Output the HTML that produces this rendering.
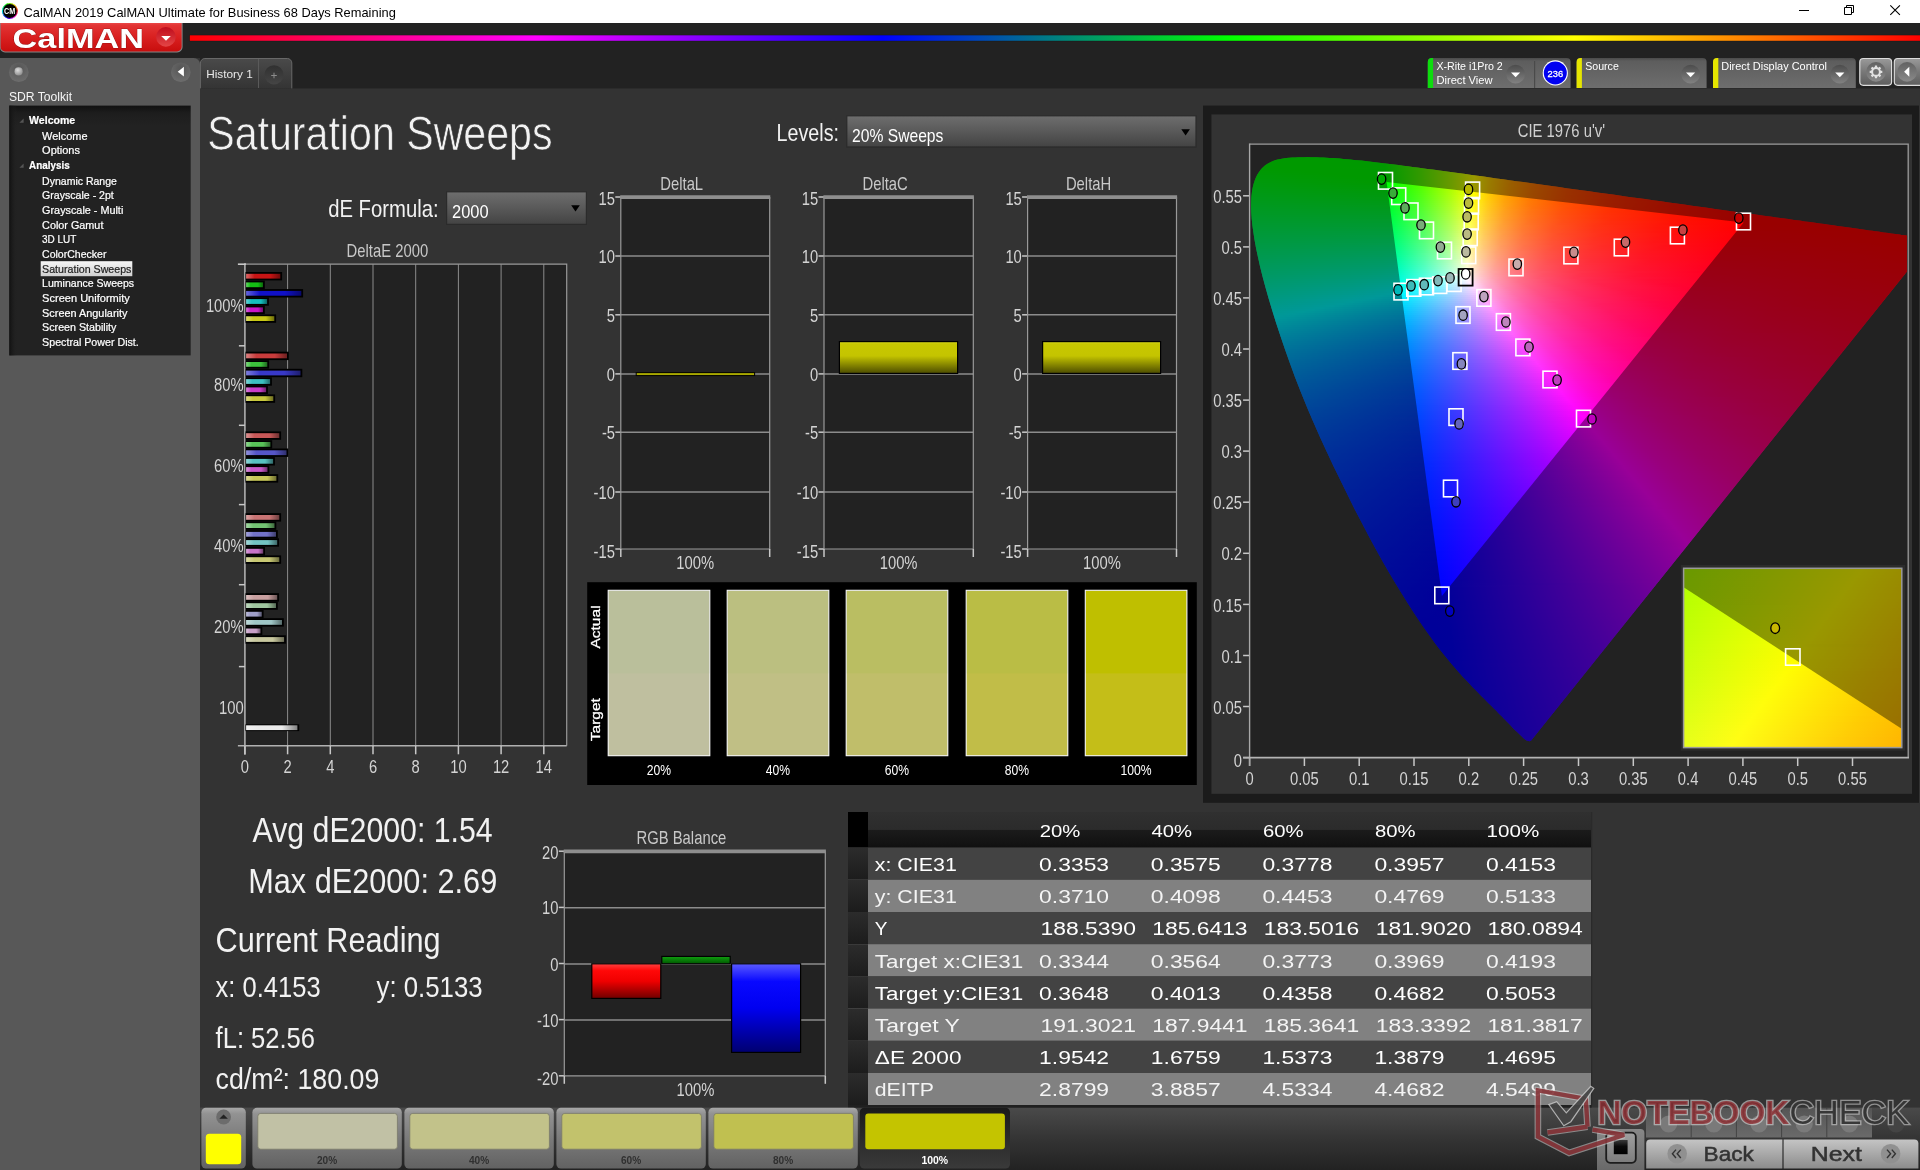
<!DOCTYPE html>
<html><head><meta charset="utf-8"><title>CalMAN</title>
<style>
html,body{margin:0;padding:0;background:#333;}
#root{position:relative;width:1920px;height:1170px;overflow:hidden;font-family:"Liberation Sans", sans-serif;}
#root>svg{position:absolute;left:0;top:0;will-change:transform;}
svg text{font-family:"Liberation Sans", sans-serif;}
#cie{position:absolute;left:1250px;top:145px;width:657.4000000000001px;height:612px;overflow:hidden;clip-path:polygon(281.2px 595.5px,279.8px 596.2px,278.3px 596.1px,276.5px 595.4px,275.0px 594.4px,273.2px 592.9px,271.8px 591.6px,270.2px 590.1px,268.4px 588.3px,266.3px 586.3px,265.1px 585.2px,263.9px 584.0px,262.6px 582.7px,261.3px 581.3px,259.9px 579.8px,258.5px 578.3px,256.9px 576.7px,255.3px 575.1px,253.7px 573.4px,251.9px 571.6px,250.0px 569.7px,248.0px 567.7px,246.0px 565.6px,243.8px 563.4px,241.4px 561.1px,239.0px 558.7px,236.5px 556.2px,233.9px 553.6px,231.2px 550.9px,228.4px 548.0px,225.5px 545.1px,222.4px 541.9px,219.3px 538.6px,216.0px 535.1px,212.5px 531.4px,209.0px 527.4px,205.3px 523.3px,201.6px 518.9px,197.7px 514.3px,193.6px 509.3px,189.4px 503.9px,184.8px 497.9px,180.0px 491.3px,174.8px 483.9px,169.3px 475.9px,163.5px 467.2px,157.6px 457.9px,151.4px 448.1px,145.1px 437.8px,138.7px 426.9px,132.1px 415.4px,125.3px 403.3px,118.4px 390.6px,111.5px 377.3px,104.4px 363.7px,97.4px 349.6px,90.4px 335.3px,83.4px 320.9px,76.5px 306.2px,69.7px 291.5px,63.1px 276.6px,56.8px 261.8px,50.8px 247.1px,45.2px 232.7px,40.0px 218.5px,35.1px 204.7px,30.5px 191.3px,26.2px 178.3px,22.3px 165.7px,18.7px 153.8px,15.5px 142.5px,12.6px 131.8px,10.1px 121.7px,8.0px 112.3px,6.1px 103.5px,4.6px 95.2px,3.4px 87.5px,2.4px 80.4px,1.7px 73.8px,1.3px 67.7px,1.1px 62.0px,1.2px 56.7px,1.4px 51.8px,1.9px 47.3px,2.6px 43.1px,3.5px 39.2px,4.7px 35.6px,6.0px 32.3px,7.5px 29.3px,9.2px 26.7px,11.0px 24.3px,13.0px 22.2px,15.2px 20.3px,17.5px 18.8px,19.9px 17.4px,22.4px 16.3px,24.9px 15.3px,27.6px 14.5px,30.4px 13.9px,33.2px 13.5px,36.1px 13.1px,39.1px 12.8px,42.1px 12.5px,45.2px 12.4px,48.3px 12.3px,51.4px 12.2px,54.5px 12.2px,57.6px 12.1px,60.7px 12.2px,63.8px 12.2px,66.9px 12.3px,70.1px 12.4px,73.3px 12.5px,76.5px 12.7px,79.8px 12.9px,83.1px 13.1px,86.5px 13.3px,89.9px 13.6px,93.3px 13.9px,96.8px 14.2px,100.4px 14.5px,104.0px 14.9px,107.7px 15.2px,111.5px 15.6px,115.3px 16.0px,119.2px 16.5px,123.1px 16.9px,127.2px 17.4px,131.3px 17.9px,135.5px 18.4px,139.8px 19.0px,144.2px 19.5px,148.6px 20.1px,153.2px 20.7px,157.9px 21.3px,162.6px 21.9px,167.4px 22.6px,172.4px 23.2px,177.4px 23.9px,182.6px 24.6px,187.8px 25.3px,193.2px 26.0px,198.7px 26.8px,204.2px 27.5px,209.9px 28.3px,215.7px 29.1px,221.7px 29.9px,227.7px 30.8px,233.8px 31.6px,240.1px 32.5px,246.5px 33.4px,253.0px 34.3px,259.6px 35.2px,266.3px 36.2px,273.2px 37.1px,280.1px 38.1px,287.2px 39.1px,294.3px 40.1px,301.6px 41.1px,309.0px 42.1px,316.4px 43.2px,324.0px 44.2px,331.6px 45.3px,339.4px 46.3px,347.2px 47.4px,355.0px 48.5px,363.0px 49.6px,371.0px 50.7px,379.0px 51.9px,387.1px 53.0px,395.1px 54.1px,403.1px 55.2px,411.0px 56.3px,418.8px 57.4px,426.5px 58.5px,434.2px 59.6px,441.9px 60.7px,449.6px 61.7px,457.3px 62.8px,464.9px 63.9px,472.4px 64.9px,479.7px 65.9px,486.9px 66.9px,493.8px 67.9px,500.7px 68.8px,507.3px 69.8px,513.9px 70.7px,520.2px 71.5px,526.5px 72.4px,532.5px 73.3px,538.4px 74.1px,544.1px 74.9px,549.6px 75.6px,554.9px 76.4px,560.1px 77.1px,565.1px 77.8px,569.9px 78.5px,574.5px 79.1px,579.0px 79.7px,583.3px 80.3px,587.4px 80.9px,591.5px 81.5px,595.3px 82.0px,599.1px 82.5px,602.7px 83.0px,606.2px 83.5px,609.6px 84.0px,613.0px 84.5px,616.2px 84.9px,619.4px 85.4px,622.4px 85.8px,625.4px 86.2px,628.2px 86.6px,631.0px 87.0px,633.7px 87.4px,636.2px 87.7px,638.7px 88.1px,641.1px 88.4px,643.4px 88.7px,645.6px 89.0px,647.6px 89.3px,649.6px 89.6px,651.5px 89.9px,653.2px 90.1px,654.8px 90.3px,656.4px 90.5px,659.3px 90.9px,661.9px 91.3px,664.3px 91.6px,666.4px 91.9px,668.3px 92.2px,669.9px 92.4px,671.8px 92.7px,673.5px 92.9px,675.0px 93.1px,676.7px 93.4px,678.4px 93.6px,680.0px 93.8px,681.5px 94.1px,682.9px 94.3px);}
#cie i{position:absolute;display:block;left:0;width:658px;height:2px;}
#ins{position:absolute;left:1684px;top:569px;width:218px;height:178px;overflow:hidden;}
#ins i{position:absolute;display:block;left:0;width:218px;height:3px;}
</style></head><body><div id="root">
<svg width="1920" height="1170" viewBox="0 0 1920 1170"><defs><linearGradient id="rb" x1="0" y1="0" x2="1" y2="0"><stop offset="0" stop-color="#f00"/><stop offset="0.2" stop-color="#f0f"/><stop offset="0.4" stop-color="#00f"/><stop offset="0.6" stop-color="#0f0"/><stop offset="0.8" stop-color="#ff0"/><stop offset="1" stop-color="#f00"/></linearGradient><linearGradient id="cmb" x1="0" y1="0" x2="0" y2="1"><stop offset="0" stop-color="#e94848"/><stop offset="0.08" stop-color="#e23434"/><stop offset="0.5" stop-color="#d92020"/><stop offset="1" stop-color="#c80e0e"/></linearGradient><linearGradient id="cmc" x1="0" y1="0" x2="0" y2="1"><stop offset="0" stop-color="#bf0c1c"/><stop offset="1" stop-color="#e44646"/></linearGradient><radialGradient id="sb1" cx=".5" cy=".3" r=".8"><stop offset="0" stop-color="#555"/><stop offset=".6" stop-color="#666"/><stop offset="1" stop-color="#707070"/></radialGradient><radialGradient id="sb2" cx=".4" cy=".35" r=".7"><stop offset="0" stop-color="#ddd"/><stop offset="1" stop-color="#8a8a8a"/></radialGradient><linearGradient id="tp" x1="0" y1="0" x2="0" y2="1"><stop offset="0" stop-color="#111"/><stop offset="0.03" stop-color="#1d1d1d"/><stop offset="0.08" stop-color="#222"/><stop offset="1" stop-color="#222"/></linearGradient><linearGradient id="tpl" x1="0" y1="0" x2="1" y2="0"><stop offset="0" stop-color="#111"/><stop offset="1" stop-color="#222" stop-opacity="0"/></linearGradient><linearGradient id="hl" x1="0" y1="0" x2="0" y2="1"><stop offset="0" stop-color="#f6f6f6"/><stop offset="1" stop-color="#cfcfcf"/></linearGradient><linearGradient id="tab" x1="0" y1="0" x2="0" y2="1"><stop offset="0" stop-color="#4a4a4a"/><stop offset="1" stop-color="#343434"/></linearGradient><radialGradient id="plus" cx=".5" cy=".5" r=".5"><stop offset="0" stop-color="#333"/><stop offset="1" stop-color="#3d3d3d"/></radialGradient><linearGradient id="plc" x1="0" y1="0" x2="0" y2="1"><stop offset="0" stop-color="#303030"/><stop offset="1" stop-color="#454545"/></linearGradient><linearGradient id="tb" x1="0" y1="0" x2="0" y2="1"><stop offset="0" stop-color="#4a4a4a"/><stop offset="0.1" stop-color="#5d5d5d"/><stop offset="1" stop-color="#6e6e6e"/></linearGradient><linearGradient id="dd" x1="0" y1="0" x2="0" y2="1"><stop offset="0" stop-color="#4c4c4c"/><stop offset="1" stop-color="#828282"/></linearGradient><linearGradient id="gb" x1="0" y1="0" x2="0" y2="1"><stop offset="0" stop-color="#9a9a9a"/><stop offset="0.5" stop-color="#787878"/><stop offset="1" stop-color="#5e5e5e"/></linearGradient><linearGradient id="gc" x1="0" y1="0" x2="0" y2="1"><stop offset="0" stop-color="#626262"/><stop offset="1" stop-color="#8a8a8a"/></linearGradient><linearGradient id="ddg" x1="0" y1="0" x2="0" y2="1"><stop offset="0" stop-color="#6e6e6e"/><stop offset="0.5" stop-color="#595959"/><stop offset="1" stop-color="#434343"/></linearGradient><linearGradient id="hb1" x1="0" y1="0" x2="1" y2="0"><stop offset="0" stop-color="rgb(219,102,102)"/><stop offset="0.25" stop-color="rgb(200,20,20)"/><stop offset="0.7" stop-color="rgb(200,20,20)"/><stop offset="1" stop-color="rgb(110,11,11)"/></linearGradient><linearGradient id="hb2" x1="0" y1="0" x2="1" y2="0"><stop offset="0" stop-color="rgb(102,212,102)"/><stop offset="0.25" stop-color="rgb(20,190,20)"/><stop offset="0.7" stop-color="rgb(20,190,20)"/><stop offset="1" stop-color="rgb(11,104,11)"/></linearGradient><linearGradient id="hb3" x1="0" y1="0" x2="1" y2="0"><stop offset="0" stop-color="rgb(99,99,219)"/><stop offset="0.25" stop-color="rgb(16,16,200)"/><stop offset="0.7" stop-color="rgb(16,16,200)"/><stop offset="1" stop-color="rgb(8,8,110)"/></linearGradient><linearGradient id="hb4" x1="0" y1="0" x2="1" y2="0"><stop offset="0" stop-color="rgb(102,212,212)"/><stop offset="0.25" stop-color="rgb(20,190,190)"/><stop offset="0.7" stop-color="rgb(20,190,190)"/><stop offset="1" stop-color="rgb(11,104,104)"/></linearGradient><linearGradient id="hb5" x1="0" y1="0" x2="1" y2="0"><stop offset="0" stop-color="rgb(219,102,219)"/><stop offset="0.25" stop-color="rgb(200,20,200)"/><stop offset="0.7" stop-color="rgb(200,20,200)"/><stop offset="1" stop-color="rgb(110,11,110)"/></linearGradient><linearGradient id="hb6" x1="0" y1="0" x2="1" y2="0"><stop offset="0" stop-color="rgb(219,219,102)"/><stop offset="0.25" stop-color="rgb(200,200,20)"/><stop offset="0.7" stop-color="rgb(200,200,20)"/><stop offset="1" stop-color="rgb(110,110,11)"/></linearGradient><linearGradient id="hb7" x1="0" y1="0" x2="1" y2="0"><stop offset="0" stop-color="rgb(219,128,128)"/><stop offset="0.25" stop-color="rgb(200,60,60)"/><stop offset="0.7" stop-color="rgb(200,60,60)"/><stop offset="1" stop-color="rgb(110,33,33)"/></linearGradient><linearGradient id="hb8" x1="0" y1="0" x2="1" y2="0"><stop offset="0" stop-color="rgb(128,214,128)"/><stop offset="0.25" stop-color="rgb(60,192,60)"/><stop offset="0.7" stop-color="rgb(60,192,60)"/><stop offset="1" stop-color="rgb(33,105,33)"/></linearGradient><linearGradient id="hb9" x1="0" y1="0" x2="1" y2="0"><stop offset="0" stop-color="rgb(125,125,219)"/><stop offset="0.25" stop-color="rgb(56,56,200)"/><stop offset="0.7" stop-color="rgb(56,56,200)"/><stop offset="1" stop-color="rgb(30,30,110)"/></linearGradient><linearGradient id="hb10" x1="0" y1="0" x2="1" y2="0"><stop offset="0" stop-color="rgb(128,214,214)"/><stop offset="0.25" stop-color="rgb(60,192,192)"/><stop offset="0.7" stop-color="rgb(60,192,192)"/><stop offset="1" stop-color="rgb(33,105,105)"/></linearGradient><linearGradient id="hb11" x1="0" y1="0" x2="1" y2="0"><stop offset="0" stop-color="rgb(219,128,219)"/><stop offset="0.25" stop-color="rgb(200,60,200)"/><stop offset="0.7" stop-color="rgb(200,60,200)"/><stop offset="1" stop-color="rgb(110,33,110)"/></linearGradient><linearGradient id="hb12" x1="0" y1="0" x2="1" y2="0"><stop offset="0" stop-color="rgb(219,219,128)"/><stop offset="0.25" stop-color="rgb(200,200,60)"/><stop offset="0.7" stop-color="rgb(200,200,60)"/><stop offset="1" stop-color="rgb(110,110,33)"/></linearGradient><linearGradient id="hb13" x1="0" y1="0" x2="1" y2="0"><stop offset="0" stop-color="rgb(219,146,146)"/><stop offset="0.25" stop-color="rgb(200,88,88)"/><stop offset="0.7" stop-color="rgb(200,88,88)"/><stop offset="1" stop-color="rgb(110,48,48)"/></linearGradient><linearGradient id="hb14" x1="0" y1="0" x2="1" y2="0"><stop offset="0" stop-color="rgb(146,215,146)"/><stop offset="0.25" stop-color="rgb(88,194,88)"/><stop offset="0.7" stop-color="rgb(88,194,88)"/><stop offset="1" stop-color="rgb(48,106,48)"/></linearGradient><linearGradient id="hb15" x1="0" y1="0" x2="1" y2="0"><stop offset="0" stop-color="rgb(145,145,219)"/><stop offset="0.25" stop-color="rgb(86,86,200)"/><stop offset="0.7" stop-color="rgb(86,86,200)"/><stop offset="1" stop-color="rgb(47,47,110)"/></linearGradient><linearGradient id="hb16" x1="0" y1="0" x2="1" y2="0"><stop offset="0" stop-color="rgb(146,215,215)"/><stop offset="0.25" stop-color="rgb(88,194,194)"/><stop offset="0.7" stop-color="rgb(88,194,194)"/><stop offset="1" stop-color="rgb(48,106,106)"/></linearGradient><linearGradient id="hb17" x1="0" y1="0" x2="1" y2="0"><stop offset="0" stop-color="rgb(219,146,219)"/><stop offset="0.25" stop-color="rgb(200,88,200)"/><stop offset="0.7" stop-color="rgb(200,88,200)"/><stop offset="1" stop-color="rgb(110,48,110)"/></linearGradient><linearGradient id="hb18" x1="0" y1="0" x2="1" y2="0"><stop offset="0" stop-color="rgb(219,219,146)"/><stop offset="0.25" stop-color="rgb(200,200,88)"/><stop offset="0.7" stop-color="rgb(200,200,88)"/><stop offset="1" stop-color="rgb(110,110,48)"/></linearGradient><linearGradient id="hb19" x1="0" y1="0" x2="1" y2="0"><stop offset="0" stop-color="rgb(219,164,164)"/><stop offset="0.25" stop-color="rgb(200,115,115)"/><stop offset="0.7" stop-color="rgb(200,115,115)"/><stop offset="1" stop-color="rgb(110,63,63)"/></linearGradient><linearGradient id="hb20" x1="0" y1="0" x2="1" y2="0"><stop offset="0" stop-color="rgb(164,216,164)"/><stop offset="0.25" stop-color="rgb(115,195,115)"/><stop offset="0.7" stop-color="rgb(115,195,115)"/><stop offset="1" stop-color="rgb(63,107,63)"/></linearGradient><linearGradient id="hb21" x1="0" y1="0" x2="1" y2="0"><stop offset="0" stop-color="rgb(163,163,219)"/><stop offset="0.25" stop-color="rgb(114,114,200)"/><stop offset="0.7" stop-color="rgb(114,114,200)"/><stop offset="1" stop-color="rgb(62,62,110)"/></linearGradient><linearGradient id="hb22" x1="0" y1="0" x2="1" y2="0"><stop offset="0" stop-color="rgb(164,216,216)"/><stop offset="0.25" stop-color="rgb(115,195,195)"/><stop offset="0.7" stop-color="rgb(115,195,195)"/><stop offset="1" stop-color="rgb(63,107,107)"/></linearGradient><linearGradient id="hb23" x1="0" y1="0" x2="1" y2="0"><stop offset="0" stop-color="rgb(219,164,219)"/><stop offset="0.25" stop-color="rgb(200,115,200)"/><stop offset="0.7" stop-color="rgb(200,115,200)"/><stop offset="1" stop-color="rgb(110,63,110)"/></linearGradient><linearGradient id="hb24" x1="0" y1="0" x2="1" y2="0"><stop offset="0" stop-color="rgb(219,219,164)"/><stop offset="0.25" stop-color="rgb(200,200,115)"/><stop offset="0.7" stop-color="rgb(200,200,115)"/><stop offset="1" stop-color="rgb(110,110,63)"/></linearGradient><linearGradient id="hb25" x1="0" y1="0" x2="1" y2="0"><stop offset="0" stop-color="rgb(219,192,192)"/><stop offset="0.25" stop-color="rgb(200,159,159)"/><stop offset="0.7" stop-color="rgb(200,159,159)"/><stop offset="1" stop-color="rgb(110,87,87)"/></linearGradient><linearGradient id="hb26" x1="0" y1="0" x2="1" y2="0"><stop offset="0" stop-color="rgb(192,217,192)"/><stop offset="0.25" stop-color="rgb(159,198,159)"/><stop offset="0.7" stop-color="rgb(159,198,159)"/><stop offset="1" stop-color="rgb(87,108,87)"/></linearGradient><linearGradient id="hb27" x1="0" y1="0" x2="1" y2="0"><stop offset="0" stop-color="rgb(191,191,219)"/><stop offset="0.25" stop-color="rgb(158,158,200)"/><stop offset="0.7" stop-color="rgb(158,158,200)"/><stop offset="1" stop-color="rgb(86,86,110)"/></linearGradient><linearGradient id="hb28" x1="0" y1="0" x2="1" y2="0"><stop offset="0" stop-color="rgb(192,217,217)"/><stop offset="0.25" stop-color="rgb(159,198,198)"/><stop offset="0.7" stop-color="rgb(159,198,198)"/><stop offset="1" stop-color="rgb(87,108,108)"/></linearGradient><linearGradient id="hb29" x1="0" y1="0" x2="1" y2="0"><stop offset="0" stop-color="rgb(219,192,219)"/><stop offset="0.25" stop-color="rgb(200,159,200)"/><stop offset="0.7" stop-color="rgb(200,159,200)"/><stop offset="1" stop-color="rgb(110,87,110)"/></linearGradient><linearGradient id="hb30" x1="0" y1="0" x2="1" y2="0"><stop offset="0" stop-color="rgb(219,219,192)"/><stop offset="0.25" stop-color="rgb(200,200,159)"/><stop offset="0.7" stop-color="rgb(200,200,159)"/><stop offset="1" stop-color="rgb(110,110,87)"/></linearGradient><linearGradient id="hb31" x1="0" y1="0" x2="1" y2="0"><stop offset="0" stop-color="rgb(242,242,242)"/><stop offset="0.25" stop-color="rgb(235,235,235)"/><stop offset="0.7" stop-color="rgb(235,235,235)"/><stop offset="1" stop-color="rgb(129,129,129)"/></linearGradient><linearGradient id="ybar" x1="0" y1="0" x2="0" y2="1"><stop offset="0" stop-color="#d6d620"/><stop offset="0.08" stop-color="#c8c800"/><stop offset="0.45" stop-color="#c4c400"/><stop offset="1" stop-color="#4c4c00"/></linearGradient><linearGradient id="rbr" x1="0" y1="0" x2="0" y2="1"><stop offset="0" stop-color="#ff4040"/><stop offset="0.2" stop-color="#ff0808"/><stop offset="0.5" stop-color="#f00000"/><stop offset="1" stop-color="#700000"/></linearGradient><linearGradient id="rbg" x1="0" y1="0" x2="0" y2="1"><stop offset="0" stop-color="#10a010"/><stop offset="1" stop-color="#005800"/></linearGradient><linearGradient id="rbb" x1="0" y1="0" x2="0" y2="1"><stop offset="0" stop-color="#5a5aff"/><stop offset="0.2" stop-color="#0808ff"/><stop offset="0.5" stop-color="#0000f0"/><stop offset="1" stop-color="#000070"/></linearGradient><linearGradient id="th" x1="0" y1="0" x2="0" y2="1"><stop offset="0" stop-color="#303030"/><stop offset="0.49" stop-color="#2b2b2b"/><stop offset="0.51" stop-color="#1b1b1b"/><stop offset="1" stop-color="#101010"/></linearGradient><linearGradient id="tl" x1="0" y1="0" x2="0" y2="1"><stop offset="0" stop-color="#2c2c2c"/><stop offset="1" stop-color="#1c1c1c"/></linearGradient><linearGradient id="bb" x1="0" y1="0" x2="0" y2="1"><stop offset="0" stop-color="#4a4a4a"/><stop offset="0.5" stop-color="#343434"/><stop offset="1" stop-color="#222"/></linearGradient><linearGradient id="bbtn" x1="0" y1="0" x2="0" y2="1"><stop offset="0" stop-color="#a8a8a8"/><stop offset="0.1" stop-color="#929292"/><stop offset="0.55" stop-color="#787878"/><stop offset="1" stop-color="#626262"/></linearGradient><linearGradient id="bsel" x1="0" y1="0" x2="0" y2="1"><stop offset="0" stop-color="#1a1a1a"/><stop offset="1" stop-color="#3a3a3a"/></linearGradient><linearGradient id="nb" x1="0" y1="0" x2="0" y2="1"><stop offset="0" stop-color="#c4c4c4"/><stop offset="0.5" stop-color="#a8a8a8"/><stop offset="1" stop-color="#8c8c8c"/></linearGradient><linearGradient id="sb" x1="0" y1="0" x2="0" y2="1"><stop offset="0" stop-color="#888"/><stop offset="1" stop-color="#666"/></linearGradient><linearGradient id="stp" x1="0" y1="0" x2="0" y2="1"><stop offset="0" stop-color="#a0a0a0"/><stop offset="1" stop-color="#7c7c7c"/></linearGradient><linearGradient id="stq" x1="0" y1="0" x2="0" y2="1"><stop offset="0" stop-color="#3a3a3a"/><stop offset="0.45" stop-color="#0a0a0a"/><stop offset="1" stop-color="#000"/></linearGradient><linearGradient id="smb" x1="0" y1="0" x2="0" y2="1"><stop offset="0" stop-color="#555"/><stop offset="1" stop-color="#6a6a6a"/></linearGradient></defs>
<rect x="0.0" y="0.0" width="1920.0" height="1170.0" fill="#333" />
<rect x="0.0" y="0.0" width="1920.0" height="23.0" fill="#fff" />
<path d="M9.85 11.0L17.75 11.00A7.9 7.9 0 0 0 17.44 8.80Z" fill="rgb(225,28,0)"/>
<path d="M9.85 11.0L17.48 8.96A7.9 7.9 0 0 0 16.61 6.91Z" fill="rgb(225,84,0)"/>
<path d="M9.85 11.0L16.69 7.05A7.9 7.9 0 0 0 15.32 5.30Z" fill="rgb(225,140,0)"/>
<path d="M9.85 11.0L15.44 5.41A7.9 7.9 0 0 0 13.66 4.08Z" fill="rgb(225,196,0)"/>
<path d="M9.85 11.0L13.80 4.16A7.9 7.9 0 0 0 11.74 3.33Z" fill="rgb(196,225,0)"/>
<path d="M9.85 11.0L11.89 3.37A7.9 7.9 0 0 0 9.69 3.10Z" fill="rgb(140,225,0)"/>
<path d="M9.85 11.0L9.85 3.10A7.9 7.9 0 0 0 7.65 3.41Z" fill="rgb(84,225,0)"/>
<path d="M9.85 11.0L7.81 3.37A7.9 7.9 0 0 0 5.76 4.24Z" fill="rgb(28,225,0)"/>
<path d="M9.85 11.0L5.90 4.16A7.9 7.9 0 0 0 4.15 5.53Z" fill="rgb(0,225,28)"/>
<path d="M9.85 11.0L4.26 5.41A7.9 7.9 0 0 0 2.93 7.19Z" fill="rgb(0,225,84)"/>
<path d="M9.85 11.0L3.01 7.05A7.9 7.9 0 0 0 2.18 9.11Z" fill="rgb(0,225,140)"/>
<path d="M9.85 11.0L2.22 8.96A7.9 7.9 0 0 0 1.95 11.16Z" fill="rgb(0,225,196)"/>
<path d="M9.85 11.0L1.95 11.00A7.9 7.9 0 0 0 2.26 13.20Z" fill="rgb(0,196,225)"/>
<path d="M9.85 11.0L2.22 13.04A7.9 7.9 0 0 0 3.09 15.09Z" fill="rgb(0,140,225)"/>
<path d="M9.85 11.0L3.01 14.95A7.9 7.9 0 0 0 4.38 16.70Z" fill="rgb(0,84,225)"/>
<path d="M9.85 11.0L4.26 16.59A7.9 7.9 0 0 0 6.04 17.92Z" fill="rgb(0,28,225)"/>
<path d="M9.85 11.0L5.90 17.84A7.9 7.9 0 0 0 7.96 18.67Z" fill="rgb(28,0,225)"/>
<path d="M9.85 11.0L7.81 18.63A7.9 7.9 0 0 0 10.01 18.90Z" fill="rgb(84,0,225)"/>
<path d="M9.85 11.0L9.85 18.90A7.9 7.9 0 0 0 12.05 18.59Z" fill="rgb(140,0,225)"/>
<path d="M9.85 11.0L11.89 18.63A7.9 7.9 0 0 0 13.94 17.76Z" fill="rgb(196,0,225)"/>
<path d="M9.85 11.0L13.80 17.84A7.9 7.9 0 0 0 15.55 16.47Z" fill="rgb(225,0,196)"/>
<path d="M9.85 11.0L15.44 16.59A7.9 7.9 0 0 0 16.77 14.81Z" fill="rgb(225,0,140)"/>
<path d="M9.85 11.0L16.69 14.95A7.9 7.9 0 0 0 17.52 12.89Z" fill="rgb(225,0,84)"/>
<path d="M9.85 11.0L17.48 13.04A7.9 7.9 0 0 0 17.75 10.84Z" fill="rgb(225,0,28)"/>
<circle cx="9.85" cy="11.0" r="6.900" fill="#000"/>
<text x="4.1" y="13.9" font-size="8.3" fill="#fff" textLength="11.2" lengthAdjust="spacingAndGlyphs" font-weight="bold">CM</text>
<text x="23.5" y="16.8" font-size="12.6" fill="#000" textLength="372.3" lengthAdjust="spacingAndGlyphs">CalMAN 2019 CalMAN Ultimate for Business 68 Days Remaining</text>
<line x1="1799.0" y1="10.5" x2="1809.0" y2="10.5" stroke="#000" stroke-width="1" />
<path d="M1844.5 7.5h7v7h-7z M1846.5 7.5v-2h7v7h-2" fill="none" stroke="#000" stroke-width="1"/>
<path d="M1890.300 5.300l9.600 9.600M1899.900 5.300l-9.600 9.600" stroke="#000" stroke-width="1.100" fill="none"/>
<rect x="0.0" y="23.0" width="1920.0" height="35.0" fill="#222" />
<rect x="189.4" y="34.9" width="1731.0" height="6.3" fill="#151515" />
<rect x="189.8" y="35.3" width="1731.0" height="5.5" fill="url(#rb)" />
<path d="M0 23H182.6V47a5.400 5.400 0 0 1-5.400 5.400H5a5 5 0 0 1-5-5z" fill="#858585"/>
<path d="M0.600 23H181.600V46.800a4.600 4.600 0 0 1-4.600 4.600H5a4.400 4.400 0 0 1-4.400-4.400z" fill="url(#cmb)"/>
<text x="12.6" y="47.6" font-size="28.4" fill="#fff" textLength="131.4" lengthAdjust="spacingAndGlyphs" font-weight="bold" stroke="#7a0c0c" stroke-width=".6" paint-order="stroke">CalMAN</text>
<circle cx="165.9" cy="36.9" r="9.800" fill="url(#cmc)"/>
<path d="M161.200 36h9.600l-4.800 4.800z" fill="#fff"/>
<path d="M0 58H193.600a6.400 6.400 0 0 1 6.400 6.400V1170H0z" fill="#585858"/>
<circle cx="18.8" cy="72.2" r="9.8" fill="url(#sb1)"/>
<circle cx="18.6" cy="71.4" r="4.1" fill="url(#sb2)"/>
<circle cx="180.8" cy="72.2" r="9.8" fill="url(#sb1)"/>
<path d="M183.9 66.8v9.8l-6.2-4.900z" fill="#fff"/>
<text x="9.0" y="100.6" font-size="12.6" fill="#f4f4f4" textLength="63.2" lengthAdjust="spacingAndGlyphs">SDR Toolkit</text>
<rect x="9.3" y="105.6" width="181.4" height="249.8" fill="url(#tp)" />
<rect x="9.3" y="105.6" width="8.0" height="249.8" fill="url(#tpl)" />
<rect x="40.7" y="261.2" width="91.6" height="15.0" fill="url(#hl)" />
<text x="29.1" y="123.8" font-size="11.2" fill="#fff" textLength="46.1" lengthAdjust="spacingAndGlyphs" font-weight="bold" stroke="#fff" stroke-width=".22">Welcome</text>
<text x="42.1" y="139.8" font-size="11.2" fill="#fff" textLength="45.4" lengthAdjust="spacingAndGlyphs" stroke="#fff" stroke-width=".22">Welcome</text>
<text x="42.1" y="153.9" font-size="11.2" fill="#fff" textLength="37.9" lengthAdjust="spacingAndGlyphs" stroke="#fff" stroke-width=".22">Options</text>
<text x="29.1" y="168.8" font-size="11.2" fill="#fff" textLength="40.6" lengthAdjust="spacingAndGlyphs" font-weight="bold" stroke="#fff" stroke-width=".22">Analysis</text>
<text x="42.1" y="184.7" font-size="11.2" fill="#fff" textLength="74.8" lengthAdjust="spacingAndGlyphs" stroke="#fff" stroke-width=".22">Dynamic Range</text>
<text x="42.1" y="199.3" font-size="11.2" fill="#fff" textLength="71.7" lengthAdjust="spacingAndGlyphs" stroke="#fff" stroke-width=".22">Grayscale - 2pt</text>
<text x="42.1" y="214.0" font-size="11.2" fill="#fff" textLength="81.2" lengthAdjust="spacingAndGlyphs" stroke="#fff" stroke-width=".22">Grayscale - Multi</text>
<text x="42.1" y="228.6" font-size="11.2" fill="#fff" textLength="61.3" lengthAdjust="spacingAndGlyphs" stroke="#fff" stroke-width=".22">Color Gamut</text>
<text x="42.1" y="243.3" font-size="11.2" fill="#fff" textLength="34.2" lengthAdjust="spacingAndGlyphs" stroke="#fff" stroke-width=".22">3D LUT</text>
<text x="42.1" y="257.9" font-size="11.2" fill="#fff" textLength="64.3" lengthAdjust="spacingAndGlyphs" stroke="#fff" stroke-width=".22">ColorChecker</text>
<text x="42.1" y="272.6" font-size="11.2" fill="#222" textLength="89.3" lengthAdjust="spacingAndGlyphs" stroke="#222" stroke-width=".22">Saturation Sweeps</text>
<text x="42.1" y="287.2" font-size="11.2" fill="#fff" textLength="92.0" lengthAdjust="spacingAndGlyphs" stroke="#fff" stroke-width=".22">Luminance Sweeps</text>
<text x="42.1" y="301.9" font-size="11.2" fill="#fff" textLength="87.7" lengthAdjust="spacingAndGlyphs" stroke="#fff" stroke-width=".22">Screen Uniformity</text>
<text x="42.1" y="316.5" font-size="11.2" fill="#fff" textLength="85.3" lengthAdjust="spacingAndGlyphs" stroke="#fff" stroke-width=".22">Screen Angularity</text>
<text x="42.1" y="331.2" font-size="11.2" fill="#fff" textLength="74.3" lengthAdjust="spacingAndGlyphs" stroke="#fff" stroke-width=".22">Screen Stability</text>
<text x="42.1" y="345.8" font-size="11.2" fill="#fff" textLength="96.7" lengthAdjust="spacingAndGlyphs" stroke="#fff" stroke-width=".22">Spectral Power Dist.</text>
<path d="M23.600 118.5v4.200h-4.200z" fill="#555"/>
<path d="M23.600 163.5v4.200h-4.200z" fill="#555"/>
<rect x="200.0" y="58.0" width="1720.0" height="30.4" fill="#222" />
<path d="M200.400 88.400V63a4.500 4.500 0 0 1 4.500-4.500H287.300a4.500 4.500 0 0 1 4.500 4.500V88.400z" fill="url(#tab)"/>
<path d="M200.400 88.400V63a4.500 4.500 0 0 1 4.500-4.500H287.300a4.500 4.500 0 0 1 4.500 4.500V88.400" fill="none" stroke="#686868" stroke-width="1"/>
<line x1="258.5" y1="59.0" x2="258.5" y2="88.0" stroke="#5a5a5a" stroke-width="1" />
<text x="206.2" y="78.0" font-size="11.6" fill="#e8e8e8" textLength="46.6" lengthAdjust="spacingAndGlyphs">History 1</text>
<circle cx="274" cy="74.800" r="9.600" fill="url(#plc)"/>
<path d="M271.200 75.500h5.600M274 72.700v5.600" stroke="#8c8c8c" stroke-width="1"/>
<path d="M1427.8 88V62a4 4 0 0 1 4-4H1566.6a4 4 0 0 1 4 4V88z" fill="url(#tb)"/>
<path d="M1427.8 88V62a4 4 0 0 1 4-4h1.300V88z" fill="#0ddc0d"/>
<path d="M1576.6 88V62a4 4 0 0 1 4-4H1702.6a4 4 0 0 1 4 4V88z" fill="url(#tb)"/>
<path d="M1576.6 88V62a4 4 0 0 1 4-4h1.300V88z" fill="#e6e600"/>
<path d="M1713 88V62a4 4 0 0 1 4-4H1851.8a4 4 0 0 1 4 4V88z" fill="url(#tb)"/>
<path d="M1713 88V62a4 4 0 0 1 4-4h1.300V88z" fill="#e6e600"/>
<circle cx="1515.6" cy="74.2" r="9.400" fill="url(#dd)"/>
<path d="M1511.0 72.60000000000001h9.200l-4.600 4.600z" fill="#fff"/>
<circle cx="1690.6" cy="74.2" r="9.400" fill="url(#dd)"/>
<path d="M1686.0 72.60000000000001h9.200l-4.600 4.600z" fill="#fff"/>
<circle cx="1839.8" cy="74.2" r="9.400" fill="url(#dd)"/>
<path d="M1835.2 72.60000000000001h9.200l-4.600 4.600z" fill="#fff"/>
<line x1="1534.6" y1="61.0" x2="1534.6" y2="88.0" stroke="#4a4a4a" stroke-width="1.2" />
<circle cx="1555.3" cy="72.9" r="12.600" fill="#fff"/><circle cx="1555.3" cy="72.9" r="11.500" fill="#0000f0"/>
<text x="1547.6" y="76.5" font-size="9.8" fill="#fff" textLength="15.6" lengthAdjust="spacingAndGlyphs" stroke="#fff" stroke-width=".3">236</text>
<text x="1436.4" y="69.6" font-size="11" fill="#fff" textLength="66.4" lengthAdjust="spacingAndGlyphs">X-Rite i1Pro 2</text>
<text x="1436.4" y="84.0" font-size="11" fill="#fff" textLength="56.2" lengthAdjust="spacingAndGlyphs">Direct View</text>
<text x="1585.2" y="69.6" font-size="11" fill="#fff" textLength="33.6" lengthAdjust="spacingAndGlyphs">Source</text>
<text x="1721.3" y="69.6" font-size="11" fill="#fff" textLength="105.6" lengthAdjust="spacingAndGlyphs">Direct Display Control</text>
<rect x="1859.8" y="58.5" width="31.800" height="26.800" rx="3.5" fill="url(#gb)" stroke="#dcdcdc" stroke-width="1.200"/>
<rect x="1894.3" y="58.5" width="31.800" height="26.800" rx="3.5" fill="url(#gb)" stroke="#dcdcdc" stroke-width="1.200"/>
<circle cx="1876" cy="71.9" r="9.800" fill="url(#gc)"/>
<circle cx="1907.1" cy="71.9" r="9.800" fill="url(#gc)"/>
<path d="M1909.3 66.700v10l-5.200-5z" fill="#fff"/>
<path d="M1874.79 67.36L1874.92 65.59L1877.08 65.59L1877.21 67.36L1878.36 67.83L1879.69 66.67L1881.23 68.21L1880.07 69.54L1880.54 70.69L1882.31 70.82L1882.31 72.98L1880.54 73.11L1880.07 74.26L1881.23 75.59L1879.69 77.13L1878.36 75.97L1877.21 76.44L1877.08 78.21L1874.92 78.21L1874.79 76.44L1873.64 75.97L1872.31 77.13L1870.77 75.59L1871.93 74.26L1871.46 73.11L1869.69 72.98L1869.69 70.82L1871.46 70.69L1871.93 69.54L1870.77 68.21L1872.31 66.67L1873.64 67.83Z" fill="#e2e2e2"/>
<circle cx="1876" cy="71.9" r="4.700" fill="#e2e2e2"/><circle cx="1876" cy="71.9" r="2.900" fill="#747474"/>
<text x="207.2" y="150.0" font-size="48.6" fill="#f2f2f2" textLength="345.4" lengthAdjust="spacingAndGlyphs" stroke="#333" stroke-width=".7">Saturation Sweeps</text>
<text x="776.6" y="140.8" font-size="24.6" fill="#f2f2f2" textLength="62.4" lengthAdjust="spacingAndGlyphs">Levels:</text>
<text x="328.2" y="216.8" font-size="24.6" fill="#f2f2f2" textLength="110.4" lengthAdjust="spacingAndGlyphs">dE Formula:</text>
<rect x="846.8" y="115.8" width="349.20000000000005" height="31.200000000000003" fill="url(#ddg)" stroke="#2b2b2b" stroke-width="1.2"/>
<text x="852.0" y="142.2" font-size="19" fill="#fff" textLength="91.4" lengthAdjust="spacingAndGlyphs">20% Sweeps</text>
<path d="M1181.3 129.20000000000002h8.600l-4.300 6.400z" fill="#000"/>
<rect x="446.6" y="191.8" width="139.79999999999995" height="32.599999999999994" fill="url(#ddg)" stroke="#2b2b2b" stroke-width="1.2"/>
<text x="452.0" y="217.8" font-size="19" fill="#fff" textLength="36.6" lengthAdjust="spacingAndGlyphs">2000</text>
<path d="M571.2 205.20000000000002h8.600l-4.300 6.400z" fill="#000"/>
<rect x="244.9" y="264.2" width="321.8" height="481.5" fill="#222" />
<line x1="287.6" y1="264.2" x2="287.6" y2="745.7" stroke="#8c8c8c" stroke-width="1" />
<line x1="330.3" y1="264.2" x2="330.3" y2="745.7" stroke="#8c8c8c" stroke-width="1" />
<line x1="373.0" y1="264.2" x2="373.0" y2="745.7" stroke="#8c8c8c" stroke-width="1" />
<line x1="415.7" y1="264.2" x2="415.7" y2="745.7" stroke="#8c8c8c" stroke-width="1" />
<line x1="458.4" y1="264.2" x2="458.4" y2="745.7" stroke="#8c8c8c" stroke-width="1" />
<line x1="501.1" y1="264.2" x2="501.1" y2="745.7" stroke="#8c8c8c" stroke-width="1" />
<line x1="543.8" y1="264.2" x2="543.8" y2="745.7" stroke="#8c8c8c" stroke-width="1" />
<path d="M244.9 264.2H566.7V745.7" fill="none" stroke="#999" stroke-width="1.2"/>
<line x1="244.9" y1="263.2" x2="244.9" y2="754.7" stroke="#b0b0b0" stroke-width="1.6" />
<line x1="237.9" y1="745.7" x2="566.7" y2="745.7" stroke="#b0b0b0" stroke-width="1.6" />
<line x1="237.9" y1="264.2" x2="245.9" y2="264.2" stroke="#c8c8c8" stroke-width="1.6" />
<line x1="238.9" y1="345.8" x2="244.9" y2="345.8" stroke="#c8c8c8" stroke-width="1.5" />
<line x1="238.9" y1="425.3" x2="244.9" y2="425.3" stroke="#c8c8c8" stroke-width="1.5" />
<line x1="238.9" y1="504.6" x2="244.9" y2="504.6" stroke="#c8c8c8" stroke-width="1.5" />
<line x1="238.9" y1="584.7" x2="244.9" y2="584.7" stroke="#c8c8c8" stroke-width="1.5" />
<line x1="238.9" y1="666.6" x2="244.9" y2="666.6" stroke="#c8c8c8" stroke-width="1.5" />
<line x1="244.9" y1="745.7" x2="244.9" y2="754.3" stroke="#c8c8c8" stroke-width="1.5" />
<text x="240.8" y="773.2" font-size="18.6" fill="#d4d4d4" textLength="8.2" lengthAdjust="spacingAndGlyphs">0</text>
<line x1="287.6" y1="745.7" x2="287.6" y2="754.3" stroke="#c8c8c8" stroke-width="1.5" />
<text x="283.5" y="773.2" font-size="18.6" fill="#d4d4d4" textLength="8.2" lengthAdjust="spacingAndGlyphs">2</text>
<line x1="330.3" y1="745.7" x2="330.3" y2="754.3" stroke="#c8c8c8" stroke-width="1.5" />
<text x="326.2" y="773.2" font-size="18.6" fill="#d4d4d4" textLength="8.2" lengthAdjust="spacingAndGlyphs">4</text>
<line x1="373.0" y1="745.7" x2="373.0" y2="754.3" stroke="#c8c8c8" stroke-width="1.5" />
<text x="368.9" y="773.2" font-size="18.6" fill="#d4d4d4" textLength="8.2" lengthAdjust="spacingAndGlyphs">6</text>
<line x1="415.7" y1="745.7" x2="415.7" y2="754.3" stroke="#c8c8c8" stroke-width="1.5" />
<text x="411.6" y="773.2" font-size="18.6" fill="#d4d4d4" textLength="8.2" lengthAdjust="spacingAndGlyphs">8</text>
<line x1="458.4" y1="745.7" x2="458.4" y2="754.3" stroke="#c8c8c8" stroke-width="1.5" />
<text x="450.2" y="773.2" font-size="18.6" fill="#d4d4d4" textLength="16.4" lengthAdjust="spacingAndGlyphs">10</text>
<line x1="501.1" y1="745.7" x2="501.1" y2="754.3" stroke="#c8c8c8" stroke-width="1.5" />
<text x="492.9" y="773.2" font-size="18.6" fill="#d4d4d4" textLength="16.4" lengthAdjust="spacingAndGlyphs">12</text>
<line x1="543.8" y1="745.7" x2="543.8" y2="754.3" stroke="#c8c8c8" stroke-width="1.5" />
<text x="535.6" y="773.2" font-size="18.6" fill="#d4d4d4" textLength="16.4" lengthAdjust="spacingAndGlyphs">14</text>
<text x="346.6" y="257.4" font-size="19" fill="#c8c8c8" textLength="81.6" lengthAdjust="spacingAndGlyphs">DeltaE 2000</text>
<text x="205.9" y="311.6" font-size="18.6" fill="#d4d4d4" textLength="37.8" lengthAdjust="spacingAndGlyphs">100%</text>
<text x="214.1" y="390.8" font-size="18.6" fill="#d4d4d4" textLength="29.6" lengthAdjust="spacingAndGlyphs">80%</text>
<text x="214.1" y="472.2" font-size="18.6" fill="#d4d4d4" textLength="29.6" lengthAdjust="spacingAndGlyphs">60%</text>
<text x="214.1" y="552.4" font-size="18.6" fill="#d4d4d4" textLength="29.6" lengthAdjust="spacingAndGlyphs">40%</text>
<text x="214.1" y="632.6" font-size="18.6" fill="#d4d4d4" textLength="29.6" lengthAdjust="spacingAndGlyphs">20%</text>
<text x="219.0" y="713.6" font-size="18.6" fill="#d4d4d4" textLength="24.7" lengthAdjust="spacingAndGlyphs">100</text>
<rect x="245.5" y="272.0" width="36.6" height="8.4" fill="#000"/>
<rect x="246.1" y="273.8" width="34.2" height="4.8" fill="url(#hb1)"/>
<rect x="245.5" y="280.6" width="19.3" height="8.4" fill="#000"/>
<rect x="246.1" y="282.4" width="16.9" height="4.8" fill="url(#hb2)"/>
<rect x="245.5" y="289.1" width="57.6" height="8.4" fill="#000"/>
<rect x="246.1" y="290.9" width="55.2" height="4.8" fill="url(#hb3)"/>
<rect x="245.5" y="297.3" width="23.4" height="8.4" fill="#000"/>
<rect x="246.1" y="299.1" width="21.0" height="4.8" fill="url(#hb4)"/>
<rect x="245.5" y="305.6" width="19.3" height="8.4" fill="#000"/>
<rect x="246.1" y="307.4" width="16.9" height="4.8" fill="url(#hb5)"/>
<rect x="245.5" y="314.4" width="30.6" height="8.4" fill="#000"/>
<rect x="246.1" y="316.2" width="28.2" height="4.8" fill="url(#hb6)"/>
<rect x="245.5" y="351.7" width="43.3" height="8.4" fill="#000"/>
<rect x="246.1" y="353.5" width="40.9" height="4.8" fill="url(#hb7)"/>
<rect x="245.5" y="360.2" width="23.6" height="8.4" fill="#000"/>
<rect x="246.1" y="362.0" width="21.2" height="4.8" fill="url(#hb8)"/>
<rect x="245.5" y="368.8" width="56.8" height="8.4" fill="#000"/>
<rect x="246.1" y="370.6" width="54.4" height="4.8" fill="url(#hb9)"/>
<rect x="245.5" y="377.3" width="26.4" height="8.4" fill="#000"/>
<rect x="246.1" y="379.1" width="24.0" height="4.8" fill="url(#hb10)"/>
<rect x="245.5" y="385.6" width="22.4" height="8.4" fill="#000"/>
<rect x="246.1" y="387.4" width="20.0" height="4.8" fill="url(#hb11)"/>
<rect x="245.5" y="394.4" width="29.6" height="8.4" fill="#000"/>
<rect x="246.1" y="396.2" width="27.2" height="4.8" fill="url(#hb12)"/>
<rect x="245.5" y="431.4" width="35.6" height="8.4" fill="#000"/>
<rect x="246.1" y="433.2" width="33.2" height="4.8" fill="url(#hb13)"/>
<rect x="245.5" y="440.2" width="26.7" height="8.4" fill="#000"/>
<rect x="246.1" y="442.0" width="24.3" height="4.8" fill="url(#hb14)"/>
<rect x="245.5" y="448.5" width="42.8" height="8.4" fill="#000"/>
<rect x="246.1" y="450.3" width="40.4" height="4.8" fill="url(#hb15)"/>
<rect x="245.5" y="457.1" width="29.4" height="8.4" fill="#000"/>
<rect x="246.1" y="458.9" width="27.0" height="4.8" fill="url(#hb16)"/>
<rect x="245.5" y="465.3" width="23.8" height="8.4" fill="#000"/>
<rect x="246.1" y="467.1" width="21.4" height="4.8" fill="url(#hb17)"/>
<rect x="245.5" y="474.2" width="32.7" height="8.4" fill="#000"/>
<rect x="246.1" y="476.0" width="30.3" height="4.8" fill="url(#hb18)"/>
<rect x="245.5" y="513.2" width="35.6" height="8.4" fill="#000"/>
<rect x="246.1" y="515.0" width="33.2" height="4.8" fill="url(#hb19)"/>
<rect x="245.5" y="521.4" width="30.8" height="8.4" fill="#000"/>
<rect x="246.1" y="523.2" width="28.4" height="4.8" fill="url(#hb20)"/>
<rect x="245.5" y="530.1" width="32.3" height="8.4" fill="#000"/>
<rect x="246.1" y="531.9" width="29.9" height="4.8" fill="url(#hb21)"/>
<rect x="245.5" y="538.3" width="33.5" height="8.4" fill="#000"/>
<rect x="246.1" y="540.1" width="31.1" height="4.8" fill="url(#hb22)"/>
<rect x="245.5" y="547.0" width="19.5" height="8.4" fill="#000"/>
<rect x="246.1" y="548.8" width="17.1" height="4.8" fill="url(#hb23)"/>
<rect x="245.5" y="555.4" width="35.6" height="8.4" fill="#000"/>
<rect x="246.1" y="557.2" width="33.2" height="4.8" fill="url(#hb24)"/>
<rect x="245.5" y="593.2" width="33.5" height="8.4" fill="#000"/>
<rect x="246.1" y="595.0" width="31.1" height="4.8" fill="url(#hb25)"/>
<rect x="245.5" y="601.4" width="32.3" height="8.4" fill="#000"/>
<rect x="246.1" y="603.2" width="29.9" height="4.8" fill="url(#hb26)"/>
<rect x="245.5" y="610.0" width="18.1" height="8.4" fill="#000"/>
<rect x="246.1" y="611.8" width="15.7" height="4.8" fill="url(#hb27)"/>
<rect x="245.5" y="618.2" width="38.3" height="8.4" fill="#000"/>
<rect x="246.1" y="620.0" width="35.9" height="4.8" fill="url(#hb28)"/>
<rect x="245.5" y="626.7" width="16.8" height="8.4" fill="#000"/>
<rect x="246.1" y="628.5" width="14.4" height="4.8" fill="url(#hb29)"/>
<rect x="245.5" y="635.3" width="40.4" height="8.4" fill="#000"/>
<rect x="246.1" y="637.1" width="38.0" height="4.8" fill="url(#hb30)"/>
<rect x="245.5" y="724.3" width="53.7" height="6.8" fill="#000"/>
<rect x="246.1" y="725.3" width="51.3" height="4.8" fill="url(#hb31)"/>
<rect x="620.8" y="197.0" width="148.9" height="352.0" fill="#222" />
<line x1="615.3" y1="197.0" x2="620.8" y2="197.0" stroke="#c8c8c8" stroke-width="1.5" />
<text x="598.6" y="205.0" font-size="18.6" fill="#d4d4d4" textLength="16.4" lengthAdjust="spacingAndGlyphs">15</text>
<line x1="620.8" y1="256.0" x2="769.7" y2="256.0" stroke="#8c8c8c" stroke-width="1.5" />
<line x1="615.3" y1="256.0" x2="620.8" y2="256.0" stroke="#c8c8c8" stroke-width="1.5" />
<text x="598.6" y="263.0" font-size="18.6" fill="#d4d4d4" textLength="16.4" lengthAdjust="spacingAndGlyphs">10</text>
<line x1="620.8" y1="314.8" x2="769.7" y2="314.8" stroke="#8c8c8c" stroke-width="1.5" />
<line x1="615.3" y1="314.8" x2="620.8" y2="314.8" stroke="#c8c8c8" stroke-width="1.5" />
<text x="606.8" y="321.8" font-size="18.6" fill="#d4d4d4" textLength="8.2" lengthAdjust="spacingAndGlyphs">5</text>
<line x1="620.8" y1="373.9" x2="769.7" y2="373.9" stroke="#8c8c8c" stroke-width="1.5" />
<line x1="615.3" y1="373.9" x2="620.8" y2="373.9" stroke="#c8c8c8" stroke-width="1.5" />
<text x="606.8" y="380.9" font-size="18.6" fill="#d4d4d4" textLength="8.2" lengthAdjust="spacingAndGlyphs">0</text>
<line x1="620.8" y1="432.2" x2="769.7" y2="432.2" stroke="#8c8c8c" stroke-width="1.5" />
<line x1="615.3" y1="432.2" x2="620.8" y2="432.2" stroke="#c8c8c8" stroke-width="1.5" />
<text x="601.9" y="439.2" font-size="18.6" fill="#d4d4d4" textLength="13.1" lengthAdjust="spacingAndGlyphs">-5</text>
<line x1="620.8" y1="492.0" x2="769.7" y2="492.0" stroke="#8c8c8c" stroke-width="1.5" />
<line x1="615.3" y1="492.0" x2="620.8" y2="492.0" stroke="#c8c8c8" stroke-width="1.5" />
<text x="593.6" y="499.0" font-size="18.6" fill="#d4d4d4" textLength="21.4" lengthAdjust="spacingAndGlyphs">-10</text>
<line x1="615.3" y1="549.0" x2="620.8" y2="549.0" stroke="#c8c8c8" stroke-width="1.5" />
<text x="593.6" y="558.2" font-size="18.6" fill="#d4d4d4" textLength="21.4" lengthAdjust="spacingAndGlyphs">-15</text>
<path d="M620.8 197.0V549.0H769.7V197.0" fill="none" stroke="#999" stroke-width="1.2"/>
<line x1="620.2" y1="197.1" x2="770.3" y2="197.1" stroke="#8e8e8e" stroke-width="3.8" />
<line x1="620.8" y1="549.0" x2="620.8" y2="557.0" stroke="#c8c8c8" stroke-width="1.5" />
<line x1="769.7" y1="549.0" x2="769.7" y2="557.0" stroke="#c8c8c8" stroke-width="1.5" />
<text x="676.3" y="568.8" font-size="18.6" fill="#d4d4d4" textLength="37.8" lengthAdjust="spacingAndGlyphs">100%</text>
<text x="660.3" y="190.0" font-size="19" fill="#c8c8c8" textLength="42.8" lengthAdjust="spacingAndGlyphs">DeltaL</text>
<rect x="636.2" y="372.6" width="118.4" height="3" fill="#a8a800" stroke="#000" stroke-width="1"/>
<rect x="824.0" y="197.0" width="149.3" height="352.0" fill="#222" />
<line x1="818.5" y1="197.0" x2="824.0" y2="197.0" stroke="#c8c8c8" stroke-width="1.5" />
<text x="801.8" y="205.0" font-size="18.6" fill="#d4d4d4" textLength="16.4" lengthAdjust="spacingAndGlyphs">15</text>
<line x1="824.0" y1="256.0" x2="973.3" y2="256.0" stroke="#8c8c8c" stroke-width="1.5" />
<line x1="818.5" y1="256.0" x2="824.0" y2="256.0" stroke="#c8c8c8" stroke-width="1.5" />
<text x="801.8" y="263.0" font-size="18.6" fill="#d4d4d4" textLength="16.4" lengthAdjust="spacingAndGlyphs">10</text>
<line x1="824.0" y1="314.8" x2="973.3" y2="314.8" stroke="#8c8c8c" stroke-width="1.5" />
<line x1="818.5" y1="314.8" x2="824.0" y2="314.8" stroke="#c8c8c8" stroke-width="1.5" />
<text x="810.0" y="321.8" font-size="18.6" fill="#d4d4d4" textLength="8.2" lengthAdjust="spacingAndGlyphs">5</text>
<line x1="824.0" y1="373.9" x2="973.3" y2="373.9" stroke="#8c8c8c" stroke-width="1.5" />
<line x1="818.5" y1="373.9" x2="824.0" y2="373.9" stroke="#c8c8c8" stroke-width="1.5" />
<text x="810.0" y="380.9" font-size="18.6" fill="#d4d4d4" textLength="8.2" lengthAdjust="spacingAndGlyphs">0</text>
<line x1="824.0" y1="432.2" x2="973.3" y2="432.2" stroke="#8c8c8c" stroke-width="1.5" />
<line x1="818.5" y1="432.2" x2="824.0" y2="432.2" stroke="#c8c8c8" stroke-width="1.5" />
<text x="805.1" y="439.2" font-size="18.6" fill="#d4d4d4" textLength="13.1" lengthAdjust="spacingAndGlyphs">-5</text>
<line x1="824.0" y1="492.0" x2="973.3" y2="492.0" stroke="#8c8c8c" stroke-width="1.5" />
<line x1="818.5" y1="492.0" x2="824.0" y2="492.0" stroke="#c8c8c8" stroke-width="1.5" />
<text x="796.8" y="499.0" font-size="18.6" fill="#d4d4d4" textLength="21.4" lengthAdjust="spacingAndGlyphs">-10</text>
<line x1="818.5" y1="549.0" x2="824.0" y2="549.0" stroke="#c8c8c8" stroke-width="1.5" />
<text x="796.8" y="558.2" font-size="18.6" fill="#d4d4d4" textLength="21.4" lengthAdjust="spacingAndGlyphs">-15</text>
<path d="M824.0 197.0V549.0H973.3V197.0" fill="none" stroke="#999" stroke-width="1.2"/>
<line x1="823.4" y1="197.1" x2="973.9" y2="197.1" stroke="#8e8e8e" stroke-width="3.8" />
<line x1="824.0" y1="549.0" x2="824.0" y2="557.0" stroke="#c8c8c8" stroke-width="1.5" />
<line x1="973.3" y1="549.0" x2="973.3" y2="557.0" stroke="#c8c8c8" stroke-width="1.5" />
<text x="879.7" y="568.8" font-size="18.6" fill="#d4d4d4" textLength="37.8" lengthAdjust="spacingAndGlyphs">100%</text>
<text x="862.5" y="190.0" font-size="19" fill="#c8c8c8" textLength="45.3" lengthAdjust="spacingAndGlyphs">DeltaC</text>
<rect x="839.4" y="341.6" width="118.20000000000005" height="31.799999999999955" fill="url(#ybar)" stroke="#000" stroke-width="1.2"/>
<rect x="1027.6" y="197.0" width="148.9" height="352.0" fill="#222" />
<line x1="1022.1" y1="197.0" x2="1027.6" y2="197.0" stroke="#c8c8c8" stroke-width="1.5" />
<text x="1005.4" y="205.0" font-size="18.6" fill="#d4d4d4" textLength="16.4" lengthAdjust="spacingAndGlyphs">15</text>
<line x1="1027.6" y1="256.0" x2="1176.5" y2="256.0" stroke="#8c8c8c" stroke-width="1.5" />
<line x1="1022.1" y1="256.0" x2="1027.6" y2="256.0" stroke="#c8c8c8" stroke-width="1.5" />
<text x="1005.4" y="263.0" font-size="18.6" fill="#d4d4d4" textLength="16.4" lengthAdjust="spacingAndGlyphs">10</text>
<line x1="1027.6" y1="314.8" x2="1176.5" y2="314.8" stroke="#8c8c8c" stroke-width="1.5" />
<line x1="1022.1" y1="314.8" x2="1027.6" y2="314.8" stroke="#c8c8c8" stroke-width="1.5" />
<text x="1013.6" y="321.8" font-size="18.6" fill="#d4d4d4" textLength="8.2" lengthAdjust="spacingAndGlyphs">5</text>
<line x1="1027.6" y1="373.9" x2="1176.5" y2="373.9" stroke="#8c8c8c" stroke-width="1.5" />
<line x1="1022.1" y1="373.9" x2="1027.6" y2="373.9" stroke="#c8c8c8" stroke-width="1.5" />
<text x="1013.6" y="380.9" font-size="18.6" fill="#d4d4d4" textLength="8.2" lengthAdjust="spacingAndGlyphs">0</text>
<line x1="1027.6" y1="432.2" x2="1176.5" y2="432.2" stroke="#8c8c8c" stroke-width="1.5" />
<line x1="1022.1" y1="432.2" x2="1027.6" y2="432.2" stroke="#c8c8c8" stroke-width="1.5" />
<text x="1008.7" y="439.2" font-size="18.6" fill="#d4d4d4" textLength="13.1" lengthAdjust="spacingAndGlyphs">-5</text>
<line x1="1027.6" y1="492.0" x2="1176.5" y2="492.0" stroke="#8c8c8c" stroke-width="1.5" />
<line x1="1022.1" y1="492.0" x2="1027.6" y2="492.0" stroke="#c8c8c8" stroke-width="1.5" />
<text x="1000.4" y="499.0" font-size="18.6" fill="#d4d4d4" textLength="21.4" lengthAdjust="spacingAndGlyphs">-10</text>
<line x1="1022.1" y1="549.0" x2="1027.6" y2="549.0" stroke="#c8c8c8" stroke-width="1.5" />
<text x="1000.4" y="558.2" font-size="18.6" fill="#d4d4d4" textLength="21.4" lengthAdjust="spacingAndGlyphs">-15</text>
<path d="M1027.6 197.0V549.0H1176.5V197.0" fill="none" stroke="#999" stroke-width="1.2"/>
<line x1="1027.0" y1="197.1" x2="1177.1" y2="197.1" stroke="#8e8e8e" stroke-width="3.8" />
<line x1="1027.6" y1="549.0" x2="1027.6" y2="557.0" stroke="#c8c8c8" stroke-width="1.5" />
<line x1="1176.5" y1="549.0" x2="1176.5" y2="557.0" stroke="#c8c8c8" stroke-width="1.5" />
<text x="1083.1" y="568.8" font-size="18.6" fill="#d4d4d4" textLength="37.8" lengthAdjust="spacingAndGlyphs">100%</text>
<text x="1065.9" y="190.0" font-size="19" fill="#c8c8c8" textLength="45.3" lengthAdjust="spacingAndGlyphs">DeltaH</text>
<rect x="1042.6" y="341.6" width="118.0" height="31.799999999999955" fill="url(#ybar)" stroke="#000" stroke-width="1.2"/>
<rect x="587.2" y="582.2" width="609.6" height="202.8" fill="#000" />
<rect x="608.2" y="590.3" width="101.6" height="165.4" fill="#babf9b" />
<rect x="608.2" y="673.4" width="101.6" height="82.3" fill="#bfbf9f" />
<rect x="608.2" y="590.3" width="101.6" height="165.4" fill="none" stroke="#f4f4f4" stroke-width="1.1"/>
<text x="646.8" y="775.2" font-size="15.2" fill="#fff" textLength="24.3" lengthAdjust="spacingAndGlyphs">20%</text>
<rect x="727.2" y="590.3" width="101.6" height="165.4" fill="#bbbf80" />
<rect x="727.2" y="673.4" width="101.6" height="82.3" fill="#c0bf85" />
<rect x="727.2" y="590.3" width="101.6" height="165.4" fill="none" stroke="#f4f4f4" stroke-width="1.1"/>
<text x="765.8" y="775.2" font-size="15.2" fill="#fff" textLength="24.3" lengthAdjust="spacingAndGlyphs">40%</text>
<rect x="846.2" y="590.3" width="101.6" height="165.4" fill="#babe62" />
<rect x="846.2" y="673.4" width="101.6" height="82.3" fill="#c0be6a" />
<rect x="846.2" y="590.3" width="101.6" height="165.4" fill="none" stroke="#f4f4f4" stroke-width="1.1"/>
<text x="884.8" y="775.2" font-size="15.2" fill="#fff" textLength="24.3" lengthAdjust="spacingAndGlyphs">60%</text>
<rect x="966.2" y="590.3" width="101.6" height="165.4" fill="#babd45" />
<rect x="966.2" y="673.4" width="101.6" height="82.3" fill="#c1bd48" />
<rect x="966.2" y="590.3" width="101.6" height="165.4" fill="none" stroke="#f4f4f4" stroke-width="1.1"/>
<text x="1004.8" y="775.2" font-size="15.2" fill="#fff" textLength="24.3" lengthAdjust="spacingAndGlyphs">80%</text>
<rect x="1085.3" y="590.3" width="101.6" height="165.4" fill="#bfbf00" />
<rect x="1085.3" y="673.4" width="101.6" height="82.3" fill="#c4be18" />
<rect x="1085.3" y="590.3" width="101.6" height="165.4" fill="none" stroke="#f4f4f4" stroke-width="1.1"/>
<text x="1120.6" y="775.2" font-size="15.2" fill="#fff" textLength="31.1" lengthAdjust="spacingAndGlyphs">100%</text>
<text transform="translate(600.2,648.6) rotate(-90)" font-size="13.6" fill="#fff" stroke="#fff" stroke-width=".3" textLength="43.2" lengthAdjust="spacingAndGlyphs">Actual</text>
<text transform="translate(600.2,741.2) rotate(-90)" font-size="13.6" fill="#fff" stroke="#fff" stroke-width=".3" textLength="43" lengthAdjust="spacingAndGlyphs">Target</text>
<text x="252.6" y="841.8" font-size="34.4" fill="#f2f2f2" textLength="240.0" lengthAdjust="spacingAndGlyphs">Avg dE2000: 1.54</text>
<text x="248.2" y="892.8" font-size="34.4" fill="#f2f2f2" textLength="249.0" lengthAdjust="spacingAndGlyphs">Max dE2000: 2.69</text>
<text x="215.6" y="951.8" font-size="35.4" fill="#f2f2f2" textLength="225.0" lengthAdjust="spacingAndGlyphs">Current Reading</text>
<text x="215.6" y="996.8" font-size="30" fill="#f2f2f2" textLength="105.0" lengthAdjust="spacingAndGlyphs">x: 0.4153</text>
<text x="376.6" y="996.8" font-size="30" fill="#f2f2f2" textLength="106.0" lengthAdjust="spacingAndGlyphs">y: 0.5133</text>
<text x="215.6" y="1047.8" font-size="30" fill="#f2f2f2" textLength="99.4" lengthAdjust="spacingAndGlyphs">fL: 52.56</text>
<text x="215.6" y="1089.2" font-size="30" fill="#f2f2f2" textLength="163.8" lengthAdjust="spacingAndGlyphs">cd/m²: 180.09</text>
<rect x="564.3" y="851.2" width="261.0" height="224.6" fill="#222" />
<line x1="558.8" y1="851.2" x2="564.3" y2="851.2" stroke="#c8c8c8" stroke-width="1.5" />
<text x="542.1" y="859.2" font-size="18.6" fill="#d4d4d4" textLength="16.4" lengthAdjust="spacingAndGlyphs">20</text>
<line x1="564.3" y1="907.8" x2="825.3" y2="907.8" stroke="#8c8c8c" stroke-width="1.5" />
<line x1="558.8" y1="907.4" x2="564.3" y2="907.4" stroke="#c8c8c8" stroke-width="1.5" />
<text x="542.1" y="914.4" font-size="18.6" fill="#d4d4d4" textLength="16.4" lengthAdjust="spacingAndGlyphs">10</text>
<line x1="564.3" y1="963.9" x2="825.3" y2="963.9" stroke="#8c8c8c" stroke-width="1.5" />
<line x1="558.8" y1="963.5" x2="564.3" y2="963.5" stroke="#c8c8c8" stroke-width="1.5" />
<text x="550.3" y="970.5" font-size="18.6" fill="#d4d4d4" textLength="8.2" lengthAdjust="spacingAndGlyphs">0</text>
<line x1="564.3" y1="1020.0" x2="825.3" y2="1020.0" stroke="#8c8c8c" stroke-width="1.5" />
<line x1="558.8" y1="1019.6" x2="564.3" y2="1019.6" stroke="#c8c8c8" stroke-width="1.5" />
<text x="537.1" y="1026.7" font-size="18.6" fill="#d4d4d4" textLength="21.4" lengthAdjust="spacingAndGlyphs">-10</text>
<line x1="558.8" y1="1075.8" x2="564.3" y2="1075.8" stroke="#c8c8c8" stroke-width="1.5" />
<text x="537.1" y="1084.8" font-size="18.6" fill="#d4d4d4" textLength="21.4" lengthAdjust="spacingAndGlyphs">-20</text>
<path d="M564.3 851.2V1075.8H825.3V851.2" fill="none" stroke="#999" stroke-width="1.2"/>
<line x1="563.7" y1="851.3" x2="825.9" y2="851.3" stroke="#8e8e8e" stroke-width="3.8" />
<line x1="564.3" y1="1075.8" x2="564.3" y2="1083.8" stroke="#c8c8c8" stroke-width="1.5" />
<line x1="825.3" y1="1075.8" x2="825.3" y2="1083.8" stroke="#c8c8c8" stroke-width="1.5" />
<text x="676.5" y="1095.8" font-size="18.6" fill="#d4d4d4" textLength="37.8" lengthAdjust="spacingAndGlyphs">100%</text>
<text x="636.5" y="844.0" font-size="19" fill="#c8c8c8" textLength="89.8" lengthAdjust="spacingAndGlyphs">RGB Balance</text>
<rect x="591.8" y="963.8" width="69" height="34.6" fill="url(#rbr)" stroke="#000" stroke-width="1.2"/>
<rect x="661.8" y="956.4" width="68.4" height="7.4" fill="url(#rbg)" stroke="#000" stroke-width="1.2"/>
<rect x="731.6" y="963.8" width="69" height="88.6" fill="url(#rbb)" stroke="#000" stroke-width="1.2"/>
<rect x="848.0" y="812.0" width="743.0" height="35.6" fill="url(#th)" />
<rect x="848.0" y="812.0" width="20.0" height="35.6" fill="#000" />
<text x="1039.7" y="836.8" font-size="17.2" fill="#fff" textLength="40.6" lengthAdjust="spacingAndGlyphs">20%</text>
<text x="1151.4" y="836.8" font-size="17.2" fill="#fff" textLength="40.6" lengthAdjust="spacingAndGlyphs">40%</text>
<text x="1263.0" y="836.8" font-size="17.2" fill="#fff" textLength="40.6" lengthAdjust="spacingAndGlyphs">60%</text>
<text x="1375.0" y="836.8" font-size="17.2" fill="#fff" textLength="40.6" lengthAdjust="spacingAndGlyphs">80%</text>
<text x="1486.6" y="836.8" font-size="17.2" fill="#fff" textLength="52.6" lengthAdjust="spacingAndGlyphs">100%</text>
<rect x="848.0" y="847.6" width="743.0" height="32.2" fill="#434343" />
<rect x="848.0" y="847.6" width="20.0" height="32.2" fill="url(#tl)" />
<text x="874.8" y="871.0" font-size="19.2" fill="#fff" textLength="82.0" lengthAdjust="spacingAndGlyphs">x: CIE31</text>
<text x="1039.1" y="871.0" font-size="19.2" fill="#fff" textLength="70.0" lengthAdjust="spacingAndGlyphs">0.3353</text>
<text x="1150.8" y="871.0" font-size="19.2" fill="#fff" textLength="70.0" lengthAdjust="spacingAndGlyphs">0.3575</text>
<text x="1262.4" y="871.0" font-size="19.2" fill="#fff" textLength="70.0" lengthAdjust="spacingAndGlyphs">0.3778</text>
<text x="1374.4" y="871.0" font-size="19.2" fill="#fff" textLength="70.0" lengthAdjust="spacingAndGlyphs">0.3957</text>
<text x="1486.0" y="871.0" font-size="19.2" fill="#fff" textLength="70.0" lengthAdjust="spacingAndGlyphs">0.4153</text>
<rect x="848.0" y="879.8" width="743.0" height="32.2" fill="#818181" />
<rect x="848.0" y="879.8" width="20.0" height="32.2" fill="url(#tl)" />
<text x="874.8" y="903.2" font-size="19.2" fill="#f4f4f4" textLength="82.0" lengthAdjust="spacingAndGlyphs">y: CIE31</text>
<text x="1039.1" y="903.2" font-size="19.2" fill="#f4f4f4" textLength="70.0" lengthAdjust="spacingAndGlyphs">0.3710</text>
<text x="1150.8" y="903.2" font-size="19.2" fill="#f4f4f4" textLength="70.0" lengthAdjust="spacingAndGlyphs">0.4098</text>
<text x="1262.4" y="903.2" font-size="19.2" fill="#f4f4f4" textLength="70.0" lengthAdjust="spacingAndGlyphs">0.4453</text>
<text x="1374.4" y="903.2" font-size="19.2" fill="#f4f4f4" textLength="70.0" lengthAdjust="spacingAndGlyphs">0.4769</text>
<text x="1486.0" y="903.2" font-size="19.2" fill="#f4f4f4" textLength="70.0" lengthAdjust="spacingAndGlyphs">0.5133</text>
<rect x="848.0" y="912.0" width="743.0" height="32.2" fill="#434343" />
<rect x="848.0" y="912.0" width="20.0" height="32.2" fill="url(#tl)" />
<text x="874.8" y="935.4" font-size="19.2" fill="#fff" textLength="12.7" lengthAdjust="spacingAndGlyphs">Y</text>
<text x="1040.5" y="935.4" font-size="19.2" fill="#fff" textLength="95.4" lengthAdjust="spacingAndGlyphs">188.5390</text>
<text x="1152.2" y="935.4" font-size="19.2" fill="#fff" textLength="95.4" lengthAdjust="spacingAndGlyphs">185.6413</text>
<text x="1263.8" y="935.4" font-size="19.2" fill="#fff" textLength="95.4" lengthAdjust="spacingAndGlyphs">183.5016</text>
<text x="1375.8" y="935.4" font-size="19.2" fill="#fff" textLength="95.4" lengthAdjust="spacingAndGlyphs">181.9020</text>
<text x="1487.4" y="935.4" font-size="19.2" fill="#fff" textLength="95.4" lengthAdjust="spacingAndGlyphs">180.0894</text>
<rect x="848.0" y="944.2" width="743.0" height="32.2" fill="#818181" />
<rect x="848.0" y="944.2" width="20.0" height="32.2" fill="url(#tl)" />
<text x="874.8" y="967.6" font-size="19.2" fill="#f4f4f4" textLength="148.5" lengthAdjust="spacingAndGlyphs">Target x:CIE31</text>
<text x="1039.1" y="967.6" font-size="19.2" fill="#f4f4f4" textLength="70.0" lengthAdjust="spacingAndGlyphs">0.3344</text>
<text x="1150.8" y="967.6" font-size="19.2" fill="#f4f4f4" textLength="70.0" lengthAdjust="spacingAndGlyphs">0.3564</text>
<text x="1262.4" y="967.6" font-size="19.2" fill="#f4f4f4" textLength="70.0" lengthAdjust="spacingAndGlyphs">0.3773</text>
<text x="1374.4" y="967.6" font-size="19.2" fill="#f4f4f4" textLength="70.0" lengthAdjust="spacingAndGlyphs">0.3969</text>
<text x="1486.0" y="967.6" font-size="19.2" fill="#f4f4f4" textLength="70.0" lengthAdjust="spacingAndGlyphs">0.4193</text>
<rect x="848.0" y="976.4" width="743.0" height="32.2" fill="#434343" />
<rect x="848.0" y="976.4" width="20.0" height="32.2" fill="url(#tl)" />
<text x="874.8" y="999.8" font-size="19.2" fill="#fff" textLength="148.5" lengthAdjust="spacingAndGlyphs">Target y:CIE31</text>
<text x="1039.1" y="999.8" font-size="19.2" fill="#fff" textLength="70.0" lengthAdjust="spacingAndGlyphs">0.3648</text>
<text x="1150.8" y="999.8" font-size="19.2" fill="#fff" textLength="70.0" lengthAdjust="spacingAndGlyphs">0.4013</text>
<text x="1262.4" y="999.8" font-size="19.2" fill="#fff" textLength="70.0" lengthAdjust="spacingAndGlyphs">0.4358</text>
<text x="1374.4" y="999.8" font-size="19.2" fill="#fff" textLength="70.0" lengthAdjust="spacingAndGlyphs">0.4682</text>
<text x="1486.0" y="999.8" font-size="19.2" fill="#fff" textLength="70.0" lengthAdjust="spacingAndGlyphs">0.5053</text>
<rect x="848.0" y="1008.6" width="743.0" height="32.2" fill="#818181" />
<rect x="848.0" y="1008.6" width="20.0" height="32.2" fill="url(#tl)" />
<text x="874.8" y="1032.0" font-size="19.2" fill="#f4f4f4" textLength="85.1" lengthAdjust="spacingAndGlyphs">Target Y</text>
<text x="1040.5" y="1032.0" font-size="19.2" fill="#f4f4f4" textLength="95.4" lengthAdjust="spacingAndGlyphs">191.3021</text>
<text x="1152.2" y="1032.0" font-size="19.2" fill="#f4f4f4" textLength="95.4" lengthAdjust="spacingAndGlyphs">187.9441</text>
<text x="1263.8" y="1032.0" font-size="19.2" fill="#f4f4f4" textLength="95.4" lengthAdjust="spacingAndGlyphs">185.3641</text>
<text x="1375.8" y="1032.0" font-size="19.2" fill="#f4f4f4" textLength="95.4" lengthAdjust="spacingAndGlyphs">183.3392</text>
<text x="1487.4" y="1032.0" font-size="19.2" fill="#f4f4f4" textLength="95.4" lengthAdjust="spacingAndGlyphs">181.3817</text>
<rect x="848.0" y="1040.8" width="743.0" height="32.2" fill="#434343" />
<rect x="848.0" y="1040.8" width="20.0" height="32.2" fill="url(#tl)" />
<text x="874.8" y="1064.2" font-size="19.2" fill="#fff" textLength="86.7" lengthAdjust="spacingAndGlyphs">ΔE 2000</text>
<text x="1039.1" y="1064.2" font-size="19.2" fill="#fff" textLength="70.0" lengthAdjust="spacingAndGlyphs">1.9542</text>
<text x="1150.8" y="1064.2" font-size="19.2" fill="#fff" textLength="70.0" lengthAdjust="spacingAndGlyphs">1.6759</text>
<text x="1262.4" y="1064.2" font-size="19.2" fill="#fff" textLength="70.0" lengthAdjust="spacingAndGlyphs">1.5373</text>
<text x="1374.4" y="1064.2" font-size="19.2" fill="#fff" textLength="70.0" lengthAdjust="spacingAndGlyphs">1.3879</text>
<text x="1486.0" y="1064.2" font-size="19.2" fill="#fff" textLength="70.0" lengthAdjust="spacingAndGlyphs">1.4695</text>
<rect x="848.0" y="1073.0" width="743.0" height="32.2" fill="#818181" />
<rect x="848.0" y="1073.0" width="20.0" height="32.2" fill="url(#tl)" />
<text x="874.8" y="1096.4" font-size="19.2" fill="#f4f4f4" textLength="59.0" lengthAdjust="spacingAndGlyphs">dEITP</text>
<text x="1039.1" y="1096.4" font-size="19.2" fill="#f4f4f4" textLength="70.0" lengthAdjust="spacingAndGlyphs">2.8799</text>
<text x="1150.8" y="1096.4" font-size="19.2" fill="#f4f4f4" textLength="70.0" lengthAdjust="spacingAndGlyphs">3.8857</text>
<text x="1262.4" y="1096.4" font-size="19.2" fill="#f4f4f4" textLength="70.0" lengthAdjust="spacingAndGlyphs">4.5334</text>
<text x="1374.4" y="1096.4" font-size="19.2" fill="#f4f4f4" textLength="70.0" lengthAdjust="spacingAndGlyphs">4.4682</text>
<text x="1486.0" y="1096.4" font-size="19.2" fill="#f4f4f4" textLength="70.0" lengthAdjust="spacingAndGlyphs">4.5499</text>
<rect x="1591.0" y="812.0" width="1.2" height="293.4" fill="#2a2a2a" />
<rect x="200.2" y="1107.6" width="1719.8" height="62.4" fill="url(#bb)" />
<rect x="848.0" y="1105.0" width="743.6" height="2.6" fill="#202020" />
<rect x="201.4" y="1107.8" width="44.4" height="60.8" rx="4.5" fill="url(#bbtn)"/>
<circle cx="223.6" cy="1117" r="7.400" fill="#6c6c6c"/>
<path d="M219.300 1118.800h8.600l-4.300-4.400z" fill="#222"/>
<rect x="205.8" y="1133.800" width="35.400" height="30.400" rx="3.500" fill="#ffff00"/>
<rect x="252.4" y="1107.8" width="149.4" height="60.8" rx="4.5" fill="url(#bbtn)"/>
<rect x="257.8" y="1113.4" width="139.600" height="35.800" rx="3" fill="#c1c1a5" stroke="#7a7a6a" stroke-width=".8"/>
<text x="316.9" y="1164.2" font-size="10.8" fill="#303030" textLength="20.3" lengthAdjust="spacingAndGlyphs" font-weight="bold">20%</text>
<rect x="404.4" y="1107.8" width="149.4" height="60.8" rx="4.5" fill="url(#bbtn)"/>
<rect x="409.8" y="1113.4" width="139.600" height="35.800" rx="3" fill="#c2c28a" stroke="#7a7a6a" stroke-width=".8"/>
<text x="468.9" y="1164.2" font-size="10.8" fill="#303030" textLength="20.3" lengthAdjust="spacingAndGlyphs" font-weight="bold">40%</text>
<rect x="556.4" y="1107.8" width="149.4" height="60.8" rx="4.5" fill="url(#bbtn)"/>
<rect x="561.8" y="1113.4" width="139.600" height="35.800" rx="3" fill="#c2c26c" stroke="#7a7a6a" stroke-width=".8"/>
<text x="620.9" y="1164.2" font-size="10.8" fill="#303030" textLength="20.3" lengthAdjust="spacingAndGlyphs" font-weight="bold">60%</text>
<rect x="708.4" y="1107.8" width="149.4" height="60.8" rx="4.5" fill="url(#bbtn)"/>
<rect x="713.8" y="1113.4" width="139.600" height="35.800" rx="3" fill="#c0c050" stroke="#7a7a6a" stroke-width=".8"/>
<text x="772.9" y="1164.2" font-size="10.8" fill="#303030" textLength="20.3" lengthAdjust="spacingAndGlyphs" font-weight="bold">80%</text>
<rect x="859.8" y="1107.8" width="150.2" height="60.8" rx="4.5" fill="url(#bsel)"/>
<rect x="865.3" y="1113.4" width="139.600" height="35.800" rx="3" fill="#c4c400"/>
<text x="921.4" y="1164.2" font-size="10.8" fill="#fff" textLength="26.8" lengthAdjust="spacingAndGlyphs" font-weight="bold">100%</text>
<rect x="1597" y="1129" width="47.400" height="45" rx="4" fill="url(#sb)"/>
<rect x="1606.2" y="1132.6" width="29.600" height="30.200" rx="4" fill="url(#stp)" stroke="#1c1c1c" stroke-width="1.800"/>
<rect x="1613.8" y="1140" width="13.800" height="14.200" fill="url(#stq)"/>
<path d="M1646 1137.400V1112a4 4 0 0 1 4-4H1872v29.400z" fill="url(#smb)"/>
<circle cx="1668.6" cy="1124" r="8.600" fill="#7a7a7a"/>
<circle cx="1713.8" cy="1124" r="8.600" fill="#7a7a7a"/>
<line x1="1691.2" y1="1108.0" x2="1691.2" y2="1137.4" stroke="#444" stroke-width="1" />
<circle cx="1759.0" cy="1124" r="8.600" fill="#7a7a7a"/>
<line x1="1736.4" y1="1108.0" x2="1736.4" y2="1137.4" stroke="#444" stroke-width="1" />
<circle cx="1804.2" cy="1124" r="8.600" fill="#7a7a7a"/>
<line x1="1781.6" y1="1108.0" x2="1781.6" y2="1137.4" stroke="#444" stroke-width="1" />
<circle cx="1849.4" cy="1124" r="8.600" fill="#7a7a7a"/>
<line x1="1826.8" y1="1108.0" x2="1826.8" y2="1137.4" stroke="#444" stroke-width="1" />
<circle cx="1896" cy="1124" r="8.600" fill="#444"/>
<path d="M1646.200 1168.600V1143.600a4 4 0 0 1 4-4H1782.400V1168.600z" fill="url(#nb)"/>
<path d="M1783.600 1168.600V1139.600H1914.400a4 4 0 0 1 4 4V1168.600z" fill="url(#nb)"/>
<circle cx="1677.2" cy="1153.8" r="9.800" fill="#909090"/><circle cx="1890.6" cy="1153.8" r="9.800" fill="#909090"/>
<path d="M1676 1149.600l-3.600 4.200 3.600 4.200M1680.800 1149.600l-3.600 4.200 3.600 4.200" fill="none" stroke="#333" stroke-width="1.400"/>
<path d="M1887 1149.600l3.600 4.200-3.600 4.200M1891.800 1149.600l3.600 4.200-3.600 4.200" fill="none" stroke="#333" stroke-width="1.400"/>
<text x="1703.6" y="1161.4" font-size="20.6" fill="#333" textLength="50.2" lengthAdjust="spacingAndGlyphs" stroke="#333" stroke-width=".5">Back</text>
<text x="1810.8" y="1161.4" font-size="20.6" fill="#333" textLength="51.2" lengthAdjust="spacingAndGlyphs" stroke="#333" stroke-width=".5">Next</text>
<rect x="1203.0" y="105.6" width="716.0" height="697.2" fill="#1b1b1b" />
<rect x="1211.4" y="114.4" width="700.6" height="679.4" fill="#333" />
<rect x="1249.6" y="144.2" width="658.6" height="613.4" fill="#222" />
<text x="1517.8" y="137.2" font-size="18.2" fill="#d0d0d0" textLength="87.2" lengthAdjust="spacingAndGlyphs">CIE 1976 u&#x27;v&#x27;</text>
<line x1="1243.1" y1="757.6" x2="1249.6" y2="757.6" stroke="#c8c8c8" stroke-width="1.5" />
<text x="1233.8" y="767.4" font-size="18.6" fill="#d4d4d4" textLength="8.2" lengthAdjust="spacingAndGlyphs">0</text>
<line x1="1249.6" y1="757.6" x2="1249.6" y2="766.0" stroke="#c8c8c8" stroke-width="1.5" />
<text x="1245.5" y="784.8" font-size="18.6" fill="#d4d4d4" textLength="8.2" lengthAdjust="spacingAndGlyphs">0</text>
<line x1="1243.1" y1="706.5" x2="1249.6" y2="706.5" stroke="#c8c8c8" stroke-width="1.5" />
<text x="1213.2" y="713.6" font-size="18.6" fill="#d4d4d4" textLength="28.8" lengthAdjust="spacingAndGlyphs">0.05</text>
<line x1="1304.4" y1="757.6" x2="1304.4" y2="766.0" stroke="#c8c8c8" stroke-width="1.5" />
<text x="1290.0" y="784.8" font-size="18.6" fill="#d4d4d4" textLength="28.8" lengthAdjust="spacingAndGlyphs">0.05</text>
<line x1="1243.1" y1="655.5" x2="1249.6" y2="655.5" stroke="#c8c8c8" stroke-width="1.5" />
<text x="1221.4" y="662.6" font-size="18.6" fill="#d4d4d4" textLength="20.6" lengthAdjust="spacingAndGlyphs">0.1</text>
<line x1="1359.2" y1="757.6" x2="1359.2" y2="766.0" stroke="#c8c8c8" stroke-width="1.5" />
<text x="1348.9" y="784.8" font-size="18.6" fill="#d4d4d4" textLength="20.6" lengthAdjust="spacingAndGlyphs">0.1</text>
<line x1="1243.1" y1="604.4" x2="1249.6" y2="604.4" stroke="#c8c8c8" stroke-width="1.5" />
<text x="1213.2" y="611.5" font-size="18.6" fill="#d4d4d4" textLength="28.8" lengthAdjust="spacingAndGlyphs">0.15</text>
<line x1="1414.0" y1="757.6" x2="1414.0" y2="766.0" stroke="#c8c8c8" stroke-width="1.5" />
<text x="1399.6" y="784.8" font-size="18.6" fill="#d4d4d4" textLength="28.8" lengthAdjust="spacingAndGlyphs">0.15</text>
<line x1="1243.1" y1="553.3" x2="1249.6" y2="553.3" stroke="#c8c8c8" stroke-width="1.5" />
<text x="1221.4" y="560.4" font-size="18.6" fill="#d4d4d4" textLength="20.6" lengthAdjust="spacingAndGlyphs">0.2</text>
<line x1="1468.8" y1="757.6" x2="1468.8" y2="766.0" stroke="#c8c8c8" stroke-width="1.5" />
<text x="1458.6" y="784.8" font-size="18.6" fill="#d4d4d4" textLength="20.6" lengthAdjust="spacingAndGlyphs">0.2</text>
<line x1="1243.1" y1="502.2" x2="1249.6" y2="502.2" stroke="#c8c8c8" stroke-width="1.5" />
<text x="1213.2" y="509.3" font-size="18.6" fill="#d4d4d4" textLength="28.8" lengthAdjust="spacingAndGlyphs">0.25</text>
<line x1="1523.6" y1="757.6" x2="1523.6" y2="766.0" stroke="#c8c8c8" stroke-width="1.5" />
<text x="1509.3" y="784.8" font-size="18.6" fill="#d4d4d4" textLength="28.8" lengthAdjust="spacingAndGlyphs">0.25</text>
<line x1="1243.1" y1="451.1" x2="1249.6" y2="451.1" stroke="#c8c8c8" stroke-width="1.5" />
<text x="1221.4" y="458.2" font-size="18.6" fill="#d4d4d4" textLength="20.6" lengthAdjust="spacingAndGlyphs">0.3</text>
<line x1="1578.5" y1="757.6" x2="1578.5" y2="766.0" stroke="#c8c8c8" stroke-width="1.5" />
<text x="1568.2" y="784.8" font-size="18.6" fill="#d4d4d4" textLength="20.6" lengthAdjust="spacingAndGlyphs">0.3</text>
<line x1="1243.1" y1="400.1" x2="1249.6" y2="400.1" stroke="#c8c8c8" stroke-width="1.5" />
<text x="1213.2" y="407.2" font-size="18.6" fill="#d4d4d4" textLength="28.8" lengthAdjust="spacingAndGlyphs">0.35</text>
<line x1="1633.3" y1="757.6" x2="1633.3" y2="766.0" stroke="#c8c8c8" stroke-width="1.5" />
<text x="1618.9" y="784.8" font-size="18.6" fill="#d4d4d4" textLength="28.8" lengthAdjust="spacingAndGlyphs">0.35</text>
<line x1="1243.1" y1="349.0" x2="1249.6" y2="349.0" stroke="#c8c8c8" stroke-width="1.5" />
<text x="1221.4" y="356.1" font-size="18.6" fill="#d4d4d4" textLength="20.6" lengthAdjust="spacingAndGlyphs">0.4</text>
<line x1="1688.1" y1="757.6" x2="1688.1" y2="766.0" stroke="#c8c8c8" stroke-width="1.5" />
<text x="1677.8" y="784.8" font-size="18.6" fill="#d4d4d4" textLength="20.6" lengthAdjust="spacingAndGlyphs">0.4</text>
<line x1="1243.1" y1="297.9" x2="1249.6" y2="297.9" stroke="#c8c8c8" stroke-width="1.5" />
<text x="1213.2" y="305.0" font-size="18.6" fill="#d4d4d4" textLength="28.8" lengthAdjust="spacingAndGlyphs">0.45</text>
<line x1="1742.9" y1="757.6" x2="1742.9" y2="766.0" stroke="#c8c8c8" stroke-width="1.5" />
<text x="1728.5" y="784.8" font-size="18.6" fill="#d4d4d4" textLength="28.8" lengthAdjust="spacingAndGlyphs">0.45</text>
<line x1="1243.1" y1="246.9" x2="1249.6" y2="246.9" stroke="#c8c8c8" stroke-width="1.5" />
<text x="1221.4" y="254.0" font-size="18.6" fill="#d4d4d4" textLength="20.6" lengthAdjust="spacingAndGlyphs">0.5</text>
<line x1="1797.7" y1="757.6" x2="1797.7" y2="766.0" stroke="#c8c8c8" stroke-width="1.5" />
<text x="1787.4" y="784.8" font-size="18.6" fill="#d4d4d4" textLength="20.6" lengthAdjust="spacingAndGlyphs">0.5</text>
<line x1="1243.1" y1="195.8" x2="1249.6" y2="195.8" stroke="#c8c8c8" stroke-width="1.5" />
<text x="1213.2" y="202.9" font-size="18.6" fill="#d4d4d4" textLength="28.8" lengthAdjust="spacingAndGlyphs">0.55</text>
<line x1="1852.5" y1="757.6" x2="1852.5" y2="766.0" stroke="#c8c8c8" stroke-width="1.5" />
<text x="1838.1" y="784.8" font-size="18.6" fill="#d4d4d4" textLength="28.8" lengthAdjust="spacingAndGlyphs">0.55</text>
</svg>
<div id="cie"><i style="top:12px;background:linear-gradient(90deg,#00ff00 28.5px,#00ff00 96.5px)"></i><i style="top:14px;background:linear-gradient(90deg,#00ff00 21.5px,#00ff00 116.5px)"></i><i style="top:16px;background:linear-gradient(90deg,#00ff00 17.5px,#00ff00 133.5px)"></i><i style="top:18px;background:linear-gradient(90deg,#00ff00 14.5px,#01ff00 134.5px,#22ff00 149.5px)"></i><i style="top:20px;background:linear-gradient(90deg,#00ff00 11.5px,#00ff00 134.5px,#47ff00 164.5px)"></i><i style="top:22px;background:linear-gradient(90deg,#00ff01 9.5px,#02ff00 135.5px,#56ff00 170.5px,#6eff00 179.5px)"></i><i style="top:24px;background:linear-gradient(90deg,#00ff03 8.5px,#00ff00 65.5px,#01ff00 135.5px,#56ff00 170.5px,#9aff00 194.5px)"></i><i style="top:26px;background:linear-gradient(90deg,#00ff06 6.5px,#00ff00 68.5px,#00ff00 135.5px,#55ff00 170.5px,#adff00 200.5px,#caff00 209.5px)"></i><i style="top:28px;background:linear-gradient(90deg,#00ff09 5.5px,#00ff00 83.5px,#00ff00 135.5px,#53ff00 169.5px,#a9ff00 199.5px,#fbff00 223.5px)"></i><i style="top:30px;background:linear-gradient(90deg,#00ff0c 4.5px,#00ff00 100.5px,#02ff00 136.5px,#58ff00 171.5px,#b0ff00 201.5px,#ffff00 224.5px,#ffd500 237.5px)"></i><i style="top:32px;background:linear-gradient(90deg,#00ff0e 3.5px,#00ff00 117.5px,#01ff00 136.5px,#55ff00 170.5px,#adff00 200.5px,#fffe00 224.5px,#ffce00 239.5px,#ffaf00 252.5px)"></i><i style="top:34px;background:linear-gradient(90deg,#00ff11 3.5px,#00ff00 134.5px,#03ff00 137.5px,#57ff00 171.5px,#b0ff00 201.5px,#fffd00 224.5px,#ffce00 239.5px,#ffa200 258.5px,#ff9400 266.5px)"></i><i style="top:36px;background:linear-gradient(90deg,#00ff14 2.5px,#02ff00 137.5px,#57ff00 171.5px,#b0ff00 201.5px,#fdff00 223.5px,#ffc800 241.5px,#ff9c00 261.5px,#ff7e00 280.5px)"></i><i style="top:38px;background:linear-gradient(90deg,#00ff17 1.5px,#01ff03 137.5px,#57ff00 171.5px,#b1ff00 201.5px,#feff00 223.5px,#ffca00 240.5px,#ff9d00 260.5px,#ff7500 286.5px,#ff6a00 295.5px)"></i><i style="top:40px;background:linear-gradient(90deg,#00ff19 1.5px,#01ff07 137.5px,#56ff00 171.5px,#adff00 200.5px,#ffff00 223.5px,#ffcc00 239.5px,#ffa100 258.5px,#ff7900 283.5px,#ff5b00 309.5px)"></i><i style="top:42px;background:linear-gradient(90deg,#00ff1c 0.5px,#00ff0a 137.5px,#56ff04 171.5px,#aeff00 200.5px,#ffff00 223.5px,#ffce00 238.5px,#ffa200 257.5px,#ff7900 282.5px,#ff5400 316.5px,#ff4e00 324.5px)"></i><i style="top:44px;background:linear-gradient(90deg,#00ff1f 0.5px,#02ff0e 138.5px,#56ff08 171.5px,#aeff02 200.5px,#fffe00 223.5px,#ffcd00 238.5px,#ffa100 257.5px,#ff7900 282.5px,#ff5400 316.5px,#ff4200 338.5px)"></i><i style="top:46px;background:linear-gradient(90deg,#00ff21 0.5px,#01ff12 138.5px,#55ff0c 171.5px,#aeff06 200.5px,#fffe00 223.5px,#ffcd00 238.5px,#ffa100 257.5px,#ff7800 282.5px,#ff5300 316.5px,#ff3900 352.5px)"></i><i style="top:48px;background:linear-gradient(90deg,#00ff24 0.5px,#01ff15 138.5px,#55ff10 171.5px,#aeff0a 200.5px,#fffd05 223.5px,#ffcc01 238.5px,#ffa000 257.5px,#ff7700 282.5px,#ff5300 316.5px,#ff3100 364.5px,#ff3000 367.5px)"></i><i style="top:50px;background:linear-gradient(90deg,#00ff27 0.5px,#00ff19 138.5px,#55ff14 171.5px,#aeff0f 200.5px,#feff0a 222.5px,#ffc905 239.5px,#ff9d00 258.5px,#ff7600 283.5px,#ff5100 317.5px,#ff3000 365.5px,#ff2800 381.5px)"></i><i style="top:52px;background:linear-gradient(90deg,#00ff2a 0.5px,#02ff1c 139.5px,#57ff18 172.5px,#aeff13 200.5px,#feff0f 222.5px,#ffcb09 238.5px,#ff9f04 257.5px,#ff7600 282.5px,#ff5200 316.5px,#ff3100 364.5px,#ff2200 395.5px)"></i><i style="top:54px;background:linear-gradient(90deg,#00ff2c 0.5px,#01ff20 139.5px,#57ff1c 172.5px,#aeff17 200.5px,#ffff13 222.5px,#ffd00d 236.5px,#ffa408 254.5px,#ff7b03 278.5px,#ff5500 311.5px,#ff3400 357.5px,#ff1b00 410.5px)"></i><i style="top:56px;background:linear-gradient(90deg,#00ff2f 0.5px,#00ff24 139.5px,#54ff20 171.5px,#abff1c 199.5px,#fffe18 222.5px,#ffcf12 236.5px,#ffa30b 254.5px,#ff7b06 278.5px,#ff5500 311.5px,#ff3400 357.5px,#ff1600 424.5px)"></i><i style="top:58px;background:linear-gradient(90deg,#00ff32 0.5px,#00ff28 139.5px,#54ff24 171.5px,#abff21 199.5px,#fffe1d 222.5px,#ffcf16 236.5px,#ffa30f 254.5px,#ff7a08 278.5px,#ff5402 311.5px,#ff3300 357.5px,#ff1600 424.5px,#ff1100 438.5px)"></i><i style="top:60px;background:linear-gradient(90deg,#00ff35 0.5px,#02ff2c 140.5px,#56ff28 172.5px,#afff25 200.5px,#fffd22 222.5px,#ffce1a 236.5px,#ffa212 254.5px,#ff790b 278.5px,#ff5405 311.5px,#ff3300 357.5px,#ff1500 424.5px,#ff0d00 453.5px)"></i><i style="top:62px;background:linear-gradient(90deg,#00ff38 0.5px,#01ff30 140.5px,#56ff2d 172.5px,#afff2a 200.5px,#fdff27 221.5px,#ffc81d 238.5px,#ff9b15 257.5px,#ff730d 282.5px,#ff4f06 316.5px,#ff2e00 364.5px,#ff1100 435.5px,#ff0900 467.5px)"></i><i style="top:64px;background:linear-gradient(90deg,#00ff3b 0.5px,#00ff34 140.5px,#56ff31 172.5px,#afff2e 200.5px,#feff2c 221.5px,#ffca21 237.5px,#ff9f19 255.5px,#ff7711 279.5px,#ff5209 312.5px,#ff3103 358.5px,#ff1400 426.5px,#ff0500 481.5px)"></i><i style="top:66px;background:linear-gradient(90deg,#00ff3d 0.5px,#00ff38 140.5px,#50ff36 170.5px,#a8ff33 198.5px,#ffff31 221.5px,#ffcc26 236.5px,#ffa01d 254.5px,#ff7714 278.5px,#ff520c 311.5px,#ff3104 357.5px,#ff1400 425.5px,#ff0100 496.5px)"></i><i style="top:68px;background:linear-gradient(90deg,#00ff40 0.5px,#01ff3b 141.5px,#55ff3a 172.5px,#acff38 199.5px,#ffff36 221.5px,#ffce2b 235.5px,#ffa121 253.5px,#ff7817 277.5px,#ff530e 309.5px,#ff3207 354.5px,#ff1500 420.5px,#ff0000 505.5px,#ff0000 510.5px)"></i><i style="top:70px;background:linear-gradient(90deg,#00ff43 0.5px,#01ff40 141.5px,#55ff3e 172.5px,#acff3d 199.5px,#fffe3b 221.5px,#ffcd2f 235.5px,#ffa124 253.5px,#ff781a 277.5px,#ff5311 309.5px,#ff3209 354.5px,#ff1501 420.5px,#ff0000 503.5px,#ff0000 524.5px)"></i><i style="top:72px;background:linear-gradient(90deg,#00ff46 0.5px,#00ff44 141.5px,#55ff43 172.5px,#acff42 199.5px,#fffd41 221.5px,#ffcd34 235.5px,#ffa028 253.5px,#ff771d 277.5px,#ff5213 309.5px,#ff310a 354.5px,#ff1403 420.5px,#ff0000 502.5px,#ff0000 539.5px)"></i><i style="top:74px;background:linear-gradient(90deg,#00ff49 0.5px,#02ff48 142.5px,#57ff47 173.5px,#b0ff47 200.5px,#fdff46 220.5px,#ffc636 237.5px,#ff9b2a 255.5px,#ff731f 279.5px,#ff4f15 312.5px,#ff2e0b 359.5px,#ff1103 428.5px,#ff0000 503.5px,#ff0000 553.5px)"></i><i style="top:76px;background:linear-gradient(90deg,#00ff4c 0.5px,#01ff4c 142.5px,#57ff4c 173.5px,#b0ff4c 200.5px,#feff4c 220.5px,#ffc93b 236.5px,#ff9d2e 254.5px,#ff7422 278.5px,#ff4f17 311.5px,#ff2f0e 357.5px,#ff1205 425.5px,#ff0000 501.5px,#ff0000 567.5px)"></i><i style="top:78px;background:linear-gradient(90deg,#00ff4f 0.5px,#01ff50 142.5px,#57ff50 173.5px,#b0ff51 200.5px,#feff51 220.5px,#ffcb41 235.5px,#ff9e33 253.5px,#ff7626 276.5px,#ff511b 308.5px,#ff3010 353.5px,#ff1307 419.5px,#ff0001 498.5px,#ff0000 582.5px)"></i><i style="top:80px;background:linear-gradient(90deg,#00ff52 0.5px,#00ff54 142.5px,#53ff55 172.5px,#adff56 199.5px,#ffff57 220.5px,#ffd047 233.5px,#ffa438 250.5px,#ff7c2b 272.5px,#ff571f 302.5px,#ff3514 344.5px,#ff180a 406.5px,#ff0002 493.5px,#ff0000 596.5px)"></i><i style="top:82px;background:linear-gradient(90deg,#00ff55 1.5px,#02ff59 143.5px,#56ff5a 173.5px,#adff5b 199.5px,#fffe5c 220.5px,#ffcf4c 233.5px,#ffa33c 250.5px,#ff7b2e 272.5px,#ff5621 302.5px,#ff3516 344.5px,#ff170b 406.5px,#ff0003 491.5px,#ff0000 611.5px)"></i><i style="top:84px;background:linear-gradient(90deg,#00ff58 1.5px,#01ff5d 143.5px,#56ff5f 173.5px,#adff60 199.5px,#fffe61 220.5px,#ffcf50 233.5px,#ffa240 250.5px,#ff7a31 272.5px,#ff5524 302.5px,#ff3418 344.5px,#ff170d 406.5px,#ff0004 490.5px,#ff0000 616.5px,#ff0000 625.5px)"></i><i style="top:86px;background:linear-gradient(90deg,#00ff5c 1.5px,#00ff62 143.5px,#55ff64 173.5px,#adff66 199.5px,#fffd67 220.5px,#ffce55 233.5px,#ffa244 250.5px,#ff7a34 272.5px,#ff5526 302.5px,#ff341a 344.5px,#ff160e 406.5px,#ff0006 489.5px,#ff0000 625.5px,#ff0000 639.5px)"></i><i style="top:88px;background:linear-gradient(90deg,#00ff5f 1.5px,#00ff66 143.5px,#52ff68 172.5px,#aaff6b 198.5px,#fdff6d 219.5px,#ffc757 235.5px,#ff9b45 253.5px,#ff7335 276.5px,#ff4e27 308.5px,#ff2e1a 353.5px,#ff110e 420.5px,#ff0007 491.5px,#ff0000 639.5px,#ff0000 653.5px)"></i><i style="top:90px;background:linear-gradient(90deg,#00ff62 2.5px,#02ff6b 144.5px,#58ff6d 174.5px,#b1ff70 200.5px,#feff73 219.5px,#ffca5d 234.5px,#ff9e4b 251.5px,#ff753a 274.5px,#ff512a 305.5px,#ff301c 349.5px,#ff1310 414.5px,#ff0008 488.5px,#ff0000 653.5px,#ff0000 657.5px)"></i><i style="top:92px;background:linear-gradient(90deg,#00ff65 2.5px,#01ff6f 144.5px,#54ff72 173.5px,#aeff76 199.5px,#ffff79 219.5px,#ffcc63 233.5px,#ffa04f 250.5px,#ff783e 272.5px,#ff532e 302.5px,#ff3220 344.5px,#ff1513 406.5px,#ff0009 485.5px,#ff0000 657.5px)"></i><i style="top:94px;background:linear-gradient(90deg,#00ff68 2.5px,#00ff74 144.5px,#54ff77 173.5px,#aeff7b 199.5px,#ffff7f 219.5px,#ffce69 232.5px,#ffa154 249.5px,#ff7842 271.5px,#ff5331 301.5px,#ff3222 343.5px,#ff1515 405.5px,#ff000b 483.5px,#ff0000 657.5px)"></i><i style="top:96px;background:linear-gradient(90deg,#00ff6b 3.5px,#00ff78 144.5px,#51ff7c 172.5px,#aaff81 198.5px,#fffe84 219.5px,#ffce6e 232.5px,#ffa058 249.5px,#ff7845 271.5px,#ff5334 301.5px,#ff3224 343.5px,#ff1416 405.5px,#ff000c 482.5px,#ff0000 657.5px)"></i><i style="top:98px;background:linear-gradient(90deg,#00ff6f 3.5px,#02ff7d 145.5px,#57ff82 174.5px,#aeff87 199.5px,#fffd8a 219.5px,#ffcd72 232.5px,#ffa25d 248.5px,#ff7949 270.5px,#ff5437 299.5px,#ff3327 340.5px,#ff1619 400.5px,#ff000e 479.5px,#ff0001 657.5px)"></i><i style="top:100px;background:linear-gradient(90deg,#00ff72 4.5px,#01ff82 145.5px,#56ff87 174.5px,#aeff8c 199.5px,#fdff91 218.5px,#ffc674 234.5px,#ff9a5e 251.5px,#ff7249 274.5px,#ff4e37 305.5px,#ff2d26 349.5px,#ff1018 414.5px,#ff000e 481.5px,#ff0002 657.5px)"></i><i style="top:102px;background:linear-gradient(90deg,#00ff75 4.5px,#00ff87 145.5px,#56ff8c 174.5px,#afff92 199.5px,#feff97 218.5px,#ffc87a 233.5px,#ff9c63 250.5px,#ff744e 272.5px,#ff503b 302.5px,#ff2f29 345.5px,#ff121a 408.5px,#ff0010 479.5px,#ff0003 657.5px)"></i><i style="top:104px;background:linear-gradient(90deg,#00ff79 4.5px,#00ff8b 145.5px,#4cff91 171.5px,#a3ff97 196.5px,#feff9e 218.5px,#ffcb81 232.5px,#ffa069 248.5px,#ff7653 270.5px,#ff523f 299.5px,#ff312d 340.5px,#ff141d 401.5px,#ff0011 476.5px,#ff0003 657.5px)"></i><i style="top:106px;background:linear-gradient(90deg,#00ff7c 5.5px,#01ff91 146.5px,#55ff97 174.5px,#afff9e 199.5px,#ffffa4 218.5px,#ffd08a 230.5px,#ffa370 246.5px,#ff7b59 267.5px,#ff5644 295.5px,#ff3431 335.5px,#ff1720 393.5px,#ff0013 472.5px,#ff0004 657.5px)"></i><i style="top:108px;background:linear-gradient(90deg,#00ff7f 5.5px,#00ff95 145.5px,#23ff98 158.5px,#7bffa0 185.5px,#d4ffa7 208.5px,#fffeaa 218.5px,#ffd08f 230.5px,#ffa374 246.5px,#ff7a5c 267.5px,#ff5547 295.5px,#ff3433 335.5px,#ff1622 393.5px,#ff0014 471.5px,#ff0005 657.5px)"></i><i style="top:110px;background:linear-gradient(90deg,#00ff83 5.5px,#00ff99 141.5px,#00ff9a 146.5px,#55ffa2 174.5px,#abffaa 198.5px,#fffeb0 218.5px,#ffcf94 230.5px,#ffa279 246.5px,#ff7960 267.5px,#ff554a 295.5px,#ff3335 335.5px,#ff1624 393.5px,#ff0016 470.5px,#ff0006 657.5px)"></i><i style="top:112px;background:linear-gradient(90deg,#00ff86 6.5px,#00ff9e 138.5px,#02ffa0 147.5px,#58ffa8 175.5px,#afffb0 199.5px,#fffdb6 218.5px,#ffce99 230.5px,#ffa17d 246.5px,#ff7863 267.5px,#ff544c 295.5px,#ff3237 335.5px,#ff1525 393.5px,#ff0017 468.5px,#ff0006 657.5px)"></i><i style="top:114px;background:linear-gradient(90deg,#00ff8a 6.5px,#00ffa2 135.5px,#01ffa5 147.5px,#57ffad 175.5px,#b0ffb6 199.5px,#fdffbe 217.5px,#ffc79a 232.5px,#ff9c7e 248.5px,#ff7465 269.5px,#ff504d 298.5px,#ff2f38 339.5px,#ff1325 399.5px,#ff0018 469.5px,#ff0007 657.5px)"></i><i style="top:116px;background:linear-gradient(90deg,#00ff8d 7.5px,#00ffa6 132.5px,#01ffaa 147.5px,#54ffb3 174.5px,#acffbc 198.5px,#feffc5 217.5px,#ffc9a1 231.5px,#ff9d84 247.5px,#ff7569 268.5px,#ff5051 297.5px,#ff2f3a 338.5px,#ff1327 398.5px,#ff001a 467.5px,#ff0008 651.5px,#ff0008 657.5px)"></i><i style="top:118px;background:linear-gradient(90deg,#00ff91 7.5px,#00ffaa 129.5px,#00ffaf 147.5px,#50ffb8 173.5px,#a8ffc2 197.5px,#ffffcc 217.5px,#ffcca8 230.5px,#ff9f8a 246.5px,#ff766e 267.5px,#ff5255 295.5px,#ff313e 335.5px,#ff142a 394.5px,#ff001c 465.5px,#ff000a 644.5px,#ff0009 657.5px)"></i><i style="top:120px;background:linear-gradient(90deg,#00ff95 8.5px,#00ffae 127.5px,#02ffb5 148.5px,#56ffbf 175.5px,#b0ffc9 199.5px,#ffffd2 217.5px,#ffceb0 229.5px,#ffa391 244.5px,#ff7a75 264.5px,#ff565b 291.5px,#ff3443 329.5px,#ff172e 385.5px,#ff001d 461.5px,#ff000b 633.5px,#ff000a 657.5px)"></i><i style="top:122px;background:linear-gradient(90deg,#00ff98 8.5px,#00ffb2 124.5px,#01ffba 148.5px,#56ffc5 175.5px,#acffcf 198.5px,#fffed9 217.5px,#ffceb6 229.5px,#ffa296 244.5px,#ff7a78 264.5px,#ff555d 291.5px,#ff3445 329.5px,#ff1630 385.5px,#ff001f 459.5px,#ff000c 626.5px,#ff000a 657.5px)"></i><i style="top:124px;background:linear-gradient(90deg,#00ff9c 9.5px,#00ffb7 123.5px,#00ffc0 148.5px,#56ffcb 175.5px,#acffd6 198.5px,#fffddf 217.5px,#ffcdbb 229.5px,#ffa19a 244.5px,#ff797c 264.5px,#ff5460 291.5px,#ff3347 329.5px,#ff1631 385.5px,#ff0021 458.5px,#ff000e 621.5px,#ff000b 657.5px)"></i><i style="top:126px;background:linear-gradient(90deg,#00ffa0 9.5px,#00ffbb 120.5px,#00ffc5 148.5px,#4effd0 173.5px,#a4ffdc 196.5px,#fdffe8 216.5px,#ffd7c9 226.5px,#ffaba7 240.5px,#ff8186 259.5px,#ff5c6a 284.5px,#ff3a4f 319.5px,#ff1c38 370.5px,#ff0124 448.5px,#ff0010 600.5px,#ff000c 657.5px)"></i><i style="top:128px;background:linear-gradient(90deg,#00ffa3 10.5px,#00ffbf 118.5px,#02ffcb 149.5px,#55ffd7 175.5px,#adffe3 198.5px,#feffef 216.5px,#ffc8c3 230.5px,#ff9da1 245.5px,#ff7682 265.5px,#ff5164 293.5px,#ff304a 332.5px,#ff1333 390.5px,#ff0023 457.5px,#ff0010 614.5px,#ff000d 657.5px)"></i><i style="top:130px;background:linear-gradient(90deg,#00ffa7 10.5px,#00ffc4 116.5px,#01ffd1 149.5px,#55ffdd 175.5px,#adffea 198.5px,#fefff6 216.5px,#ffcacb 229.5px,#ff9fa8 244.5px,#ff7787 264.5px,#ff5269 291.5px,#ff314e 329.5px,#ff1436 385.5px,#ff0025 454.5px,#ff0011 606.5px,#ff000e 655.5px)"></i><i style="top:132px;background:linear-gradient(90deg,#00ffab 11.5px,#00ffc8 115.5px,#00ffd6 149.5px,#54ffe3 175.5px,#adfff1 198.5px,#fffffe 216.5px,#ffd1d7 227.5px,#ffa3b1 242.5px,#ff7b8f 261.5px,#ff5670 287.5px,#ff3454 324.5px,#ff173b 378.5px,#ff0027 451.5px,#ff0013 598.5px,#ff000e 654.5px)"></i><i style="top:134px;background:linear-gradient(90deg,#00ffaf 11.5px,#00ffcd 113.5px,#00ffdc 149.5px,#4dffe9 173.5px,#a5fff7 196.5px,#e5fcff 211.5px,#fdf8ff 217.5px,#ffc2d1 231.5px,#ff96ab 247.5px,#ff6f89 268.5px,#ff4b6a 297.5px,#ff2a4e 338.5px,#ff0e35 399.5px,#ff0028 454.5px,#ff0014 602.5px,#ff000f 652.5px)"></i><i style="top:136px;background:linear-gradient(90deg,#00ffb3 12.5px,#00ffd1 111.5px,#02ffe2 150.5px,#57fff1 176.5px,#b5fdff 200.5px,#ffefff 219.5px,#ffc1d6 231.5px,#ff95b0 247.5px,#ff6e8c 268.5px,#ff4a6d 297.5px,#ff2a50 338.5px,#ff0e37 399.5px,#ff0029 453.5px,#ff0015 598.5px,#ff0010 650.5px)"></i><i style="top:138px;background:linear-gradient(90deg,#00ffb7 12.5px,#00ffd6 110.5px,#01ffe8 150.5px,#57fff7 176.5px,#8ffdff 191.5px,#ffe6fe 221.5px,#ffb7d3 234.5px,#ff8cac 251.5px,#ff6689 273.5px,#ff4369 304.5px,#ff234d 348.5px,#ff0834 414.5px,#ff002b 453.5px,#ff0016 595.5px,#ff0011 649.5px)"></i><i style="top:140px;background:linear-gradient(90deg,#00ffbb 13.5px,#00ffda 108.5px,#00ffee 150.5px,#53fffd 175.5px,#fae0ff 221.5px,#ffddfd 223.5px,#ffb0d3 236.5px,#ff87ad 253.5px,#ff6189 276.5px,#ff3e69 308.5px,#ff204c 354.5px,#ff0533 424.5px,#ff002c 454.5px,#ff0017 595.5px,#ff0012 647.5px)"></i><i style="top:142px;background:linear-gradient(90deg,#00ffbf 13.5px,#00ffdf 107.5px,#00fff4 150.5px,#43fdff 171.5px,#dddeff 215.5px,#ffd8ff 224.5px,#ffaad3 238.5px,#ff80ab 256.5px,#ff5b87 280.5px,#ff3967 314.5px,#ff1b4a 363.5px,#ff0131 438.5px,#ff001b 565.5px,#ff0013 646.5px)"></i><i style="top:144px;background:linear-gradient(90deg,#00ffc3 14.5px,#00ffe3 106.5px,#01fffb 151.5px,#27fcff 163.5px,#c3ddff 209.5px,#ffcffe 226.5px,#ffa3d3 240.5px,#ff7aaa 259.5px,#ff5586 284.5px,#ff3465 319.5px,#ff1748 371.5px,#ff0031 441.5px,#ff001c 569.5px,#ff0014 644.5px)"></i><i style="top:146px;background:linear-gradient(90deg,#00ffc7 14.5px,#00ffe8 104.5px,#01fdff 151.5px,#9cdeff 199.5px,#fecaff 227.5px,#ff9bd0 243.5px,#ff74a9 262.5px,#ff5084 288.5px,#ff2f64 325.5px,#ff1347 379.5px,#ff0033 442.5px,#ff001d 569.5px,#ff0015 642.5px)"></i><i style="top:148px;background:linear-gradient(90deg,#00ffcb 15.5px,#00ffec 103.5px,#00fdff 141.5px,#00f7ff 151.5px,#94d9ff 198.5px,#ffc3ff 229.5px,#ff98d2 244.5px,#ff71ab 263.5px,#ff4e86 289.5px,#ff2e65 326.5px,#ff1248 380.5px,#ff0034 441.5px,#ff001e 565.5px,#ff0016 641.5px)"></i><i style="top:150px;background:linear-gradient(90deg,#00ffcf 16.5px,#00fff2 103.5px,#00fdff 131.5px,#02f1ff 152.5px,#9bd1ff 201.5px,#ffbbfe 231.5px,#ff92d2 246.5px,#ff6caa 266.5px,#ff4985 293.5px,#ff2a64 331.5px,#ff0f47 387.5px,#ff0036 441.5px,#ff001f 564.5px,#ff0017 639.5px)"></i><i style="top:152px;background:linear-gradient(90deg,#00ffd3 16.5px,#00fff6 101.5px,#00fdff 122.5px,#01ebff 152.5px,#9acbff 202.5px,#feb6ff 232.5px,#ff8acf 249.5px,#ff65a7 270.5px,#ff4383 298.5px,#ff2562 338.5px,#ff0b45 397.5px,#ff0037 440.5px,#ff0021 560.5px,#ff0018 638.5px)"></i><i style="top:154px;background:linear-gradient(90deg,#00ffd8 17.5px,#00fffb 100.5px,#00fcff 114.5px,#00e6ff 152.5px,#9ac6ff 203.5px,#ffb0ff 234.5px,#ff8ad4 249.5px,#ff65ac 269.5px,#ff4588 296.5px,#ff2767 334.5px,#ff0d49 390.5px,#ff0039 438.5px,#ff0022 556.5px,#ff0019 636.5px)"></i><i style="top:156px;background:linear-gradient(90deg,#00ffdc 17.5px,#00fdff 102.5px,#00e1ff 152.5px,#90c2ff 201.5px,#ffa9fe 236.5px,#ff82d2 252.5px,#ff5fa9 273.5px,#ff3e84 302.5px,#ff2264 342.5px,#ff0847 401.5px,#ff003b 437.5px,#ff0024 552.5px,#ff001a 634.5px)"></i><i style="top:158px;background:linear-gradient(90deg,#00ffe0 18.5px,#00fdff 92.5px,#02dbff 153.5px,#9cbaff 206.5px,#fea5ff 237.5px,#ff7ccf 255.5px,#ff59a7 277.5px,#ff3982 307.5px,#ff1d61 349.5px,#ff0545 411.5px,#ff003c 439.5px,#ff0024 554.5px,#ff001b 633.5px)"></i><i style="top:160px;background:linear-gradient(90deg,#00ffe5 19.5px,#00fdff 82.5px,#01d6ff 153.5px,#9cb5ff 207.5px,#ff9fff 239.5px,#ff7bd3 255.5px,#ff59ac 276.5px,#ff3a87 305.5px,#ff1e65 346.5px,#ff0648 406.5px,#ff003e 436.5px,#ff0026 548.5px,#ff001c 631.5px)"></i><i style="top:162px;background:linear-gradient(90deg,#00ffe9 19.5px,#00fdff 72.5px,#00d1ff 153.5px,#9bb0ff 208.5px,#ff99fe 241.5px,#ff74d1 258.5px,#ff53a9 280.5px,#ff3584 310.5px,#ff1b64 352.5px,#ff0347 414.5px,#ff003c 448.5px,#ff0024 567.5px,#ff001d 630.5px)"></i><i style="top:164px;background:linear-gradient(90deg,#00ffee 20.5px,#00fdff 63.5px,#00cdff 153.5px,#8caeff 204.5px,#fe95ff 242.5px,#ff6ecf 261.5px,#ff4ea7 284.5px,#ff3182 315.5px,#ff1762 359.5px,#ff0045 424.5px,#ff002c 526.5px,#ff001e 628.5px)"></i><i style="top:166px;background:linear-gradient(90deg,#00fff2 20.5px,#00fdff 53.5px,#01c8ff 154.5px,#9aa6ff 210.5px,#ff90ff 244.5px,#ff6dd3 261.5px,#ff4daa 284.5px,#ff3085 315.5px,#ff1664 359.5px,#ff0047 423.5px,#ff002e 523.5px,#ff001f 626.5px)"></i><i style="top:168px;background:linear-gradient(90deg,#00fff7 21.5px,#00fcff 44.5px,#01c4ff 154.5px,#9aa2ff 211.5px,#ff8afe 246.5px,#ff69d3 263.5px,#ff4aaa 286.5px,#ff2e86 317.5px,#ff1565 361.5px,#ff0048 423.5px,#ff002f 522.5px,#ff0020 625.5px)"></i><i style="top:170px;background:linear-gradient(90deg,#00fffc 22.5px,#00f9ff 41.5px,#00bfff 154.5px,#979eff 211.5px,#fe87ff 247.5px,#ff64d1 266.5px,#ff45a8 290.5px,#ff2a84 322.5px,#ff1163 368.5px,#ff004a 423.5px,#ff0030 521.5px,#ff0021 623.5px)"></i><i style="top:172px;background:linear-gradient(90deg,#00feff 22.5px,#02bbff 155.5px,#9c98ff 214.5px,#ff82ff 249.5px,#ff61d2 267.5px,#ff43aa 291.5px,#ff2985 323.5px,#ff1164 368.5px,#ff004c 422.5px,#ff0032 518.5px,#ff0022 622.5px)"></i><i style="top:174px;background:linear-gradient(90deg,#00f9ff 23.5px,#01b7ff 155.5px,#9c94ff 215.5px,#ff7dfe 251.5px,#ff5dd2 269.5px,#ff41aa 293.5px,#ff2685 326.5px,#ff0e64 372.5px,#ff004e 421.5px,#ff0033 516.5px,#ff0023 620.5px)"></i><i style="top:176px;background:linear-gradient(90deg,#00f4ff 23.5px,#00b3ff 155.5px,#9b90ff 216.5px,#fe79ff 252.5px,#ff58d0 272.5px,#ff3ca8 297.5px,#ff2283 331.5px,#ff0b62 379.5px,#ff0050 420.5px,#ff0035 513.5px,#ff0024 618.5px)"></i><i style="top:178px;background:linear-gradient(90deg,#00f0ff 24.5px,#00b0ff 155.5px,#968dff 215.5px,#ff75ff 254.5px,#ff56d2 273.5px,#ff3aa9 298.5px,#ff2185 332.5px,#ff0a64 380.5px,#ff0052 418.5px,#ff0037 509.5px,#ff0025 617.5px)"></i><i style="top:180px;background:linear-gradient(90deg,#00ebff 25.5px,#01abff 156.5px,#9a88ff 218.5px,#ff70fe 256.5px,#ff53d2 275.5px,#ff38aa 300.5px,#ff1f85 334.5px,#ff0964 382.5px,#ff0054 417.5px,#ff0039 506.5px,#ff0026 615.5px)"></i><i style="top:182px;background:linear-gradient(90deg,#00e7ff 25.5px,#01a8ff 156.5px,#9a85ff 219.5px,#ff6dff 257.5px,#ff4ed0 278.5px,#ff34a8 304.5px,#ff1c83 339.5px,#ff0662 389.5px,#ff0055 417.5px,#ff003a 505.5px,#ff0027 614.5px)"></i><i style="top:184px;background:linear-gradient(90deg,#00e3ff 26.5px,#00a5ff 156.5px,#9a81ff 220.5px,#ff69ff 259.5px,#ff4cd2 279.5px,#ff32a9 305.5px,#ff1a85 340.5px,#ff0564 390.5px,#ff0057 416.5px,#ff003c 503.5px,#ff0028 612.5px)"></i><i style="top:186px;background:linear-gradient(90deg,#00dfff 27.5px,#02a1ff 157.5px,#9c7dff 222.5px,#ff65fe 261.5px,#ff49d1 281.5px,#ff30aa 307.5px,#ff1885 343.5px,#ff0464 393.5px,#ff0058 419.5px,#ff003c 507.5px,#ff002a 610.5px)"></i><i style="top:188px;background:linear-gradient(90deg,#00dbff 27.5px,#019eff 157.5px,#9c79ff 223.5px,#ff62ff 262.5px,#ff46d1 283.5px,#ff2da9 310.5px,#ff1684 347.5px,#ff0163 399.5px,#ff0046 475.5px,#ff002d 594.5px,#ff002b 609.5px)"></i><i style="top:190px;background:linear-gradient(90deg,#00d7ff 28.5px,#019bff 157.5px,#9b76ff 224.5px,#ff5efe 264.5px,#ff44d3 284.5px,#ff2baa 311.5px,#ff1585 348.5px,#ff0064 400.5px,#ff0047 476.5px,#ff002e 595.5px,#ff002c 607.5px)"></i><i style="top:192px;background:linear-gradient(90deg,#00d3ff 29.5px,#0098ff 157.5px,#9b73ff 225.5px,#ff5afe 266.5px,#ff40d1 287.5px,#ff27a8 315.5px,#ff1283 353.5px,#ff0063 405.5px,#ff0046 483.5px,#ff002d 605.5px,#ff002d 606.5px)"></i><i style="top:194px;background:linear-gradient(90deg,#00d0ff 29.5px,#0294ff 158.5px,#9b70ff 226.5px,#ff58ff 267.5px,#ff3dd1 289.5px,#ff25a8 317.5px,#ff1084 355.5px,#ff0066 403.5px,#ff0048 479.5px,#ff002f 597.5px,#ff002e 604.5px)"></i><i style="top:196px;background:linear-gradient(90deg,#00ccff 30.5px,#0191ff 158.5px,#9a6dff 227.5px,#ff54fe 269.5px,#ff3bd3 290.5px,#ff24aa 318.5px,#ff0f85 356.5px,#ff0068 402.5px,#ff004a 477.5px,#ff0031 593.5px,#ff002f 602.5px)"></i><i style="top:198px;background:linear-gradient(90deg,#00c9ff 31.5px,#008eff 158.5px,#9a6aff 228.5px,#ff51fe 271.5px,#ff37d1 293.5px,#ff21a8 322.5px,#ff0c83 361.5px,#ff006a 401.5px,#ff004c 475.5px,#ff0032 589.5px,#ff0030 601.5px)"></i><i style="top:200px;background:linear-gradient(90deg,#00c5ff 31.5px,#028bff 159.5px,#9c66ff 230.5px,#ff4eff 272.5px,#ff36d2 294.5px,#ff1fa9 323.5px,#ff0b85 362.5px,#ff006c 400.5px,#ff004e 473.5px,#ff0034 585.5px,#ff0031 599.5px)"></i><i style="top:202px;background:linear-gradient(90deg,#00c2ff 32.5px,#0189ff 159.5px,#9c63ff 231.5px,#ff4bfe 274.5px,#ff33d2 296.5px,#ff1daa 325.5px,#ff0a85 365.5px,#ff006f 398.5px,#ff0051 469.5px,#ff0036 577.5px,#ff0033 598.5px)"></i><i style="top:204px;background:linear-gradient(90deg,#00beff 33.5px,#0186ff 159.5px,#9b60ff 232.5px,#ff48fe 276.5px,#ff31d2 298.5px,#ff1caa 327.5px,#ff0885 367.5px,#ff0072 397.5px,#ff0053 467.5px,#ff0038 573.5px,#ff0034 596.5px)"></i><i style="top:206px;background:linear-gradient(90deg,#00bbff 34.5px,#0083ff 159.5px,#9b5eff 233.5px,#ff45ff 277.5px,#ff2ed2 300.5px,#ff19a9 330.5px,#ff0684 371.5px,#ff0073 397.5px,#ff0054 466.5px,#ff0039 571.5px,#ff0035 594.5px)"></i><i style="top:208px;background:linear-gradient(90deg,#00b8ff 34.5px,#0280ff 160.5px,#9d5bff 235.5px,#ff42fe 279.5px,#ff2cd2 302.5px,#ff17aa 332.5px,#ff0585 373.5px,#ff0075 397.5px,#ff0056 466.5px,#ff003a 570.5px,#ff0036 593.5px)"></i><i style="top:210px;background:linear-gradient(90deg,#00b5ff 35.5px,#017eff 160.5px,#9a58ff 235.5px,#ff3ffe 281.5px,#ff29d2 304.5px,#ff15a9 335.5px,#ff0384 377.5px,#ff0071 408.5px,#ff0052 481.5px,#ff0038 591.5px)"></i><i style="top:212px;background:linear-gradient(90deg,#00b2ff 36.5px,#017cff 160.5px,#9a56ff 236.5px,#ff3dff 282.5px,#ff27d2 306.5px,#ff13a9 337.5px,#ff0284 379.5px,#ff0064 438.5px,#ff0047 525.5px,#ff0039 590.5px)"></i><i style="top:214px;background:linear-gradient(90deg,#00afff 36.5px,#0079ff 160.5px,#9a53ff 237.5px,#ff3afe 284.5px,#ff25d2 308.5px,#ff12a9 339.5px,#ff0084 382.5px,#ff0063 442.5px,#ff0046 531.5px,#ff003a 588.5px)"></i><i style="top:216px;background:linear-gradient(90deg,#00acff 37.5px,#0277ff 161.5px,#9c51ff 239.5px,#ff37fe 286.5px,#ff23d1 310.5px,#ff10a9 342.5px,#ff0084 385.5px,#ff0063 446.5px,#ff0046 536.5px,#ff003b 586.5px)"></i><i style="top:218px;background:linear-gradient(90deg,#00a9ff 38.5px,#0175ff 161.5px,#9b4eff 240.5px,#ff35ff 287.5px,#ff21d3 311.5px,#ff0eaa 343.5px,#ff0087 384.5px,#ff0066 444.5px,#ff0048 532.5px,#ff003c 585.5px)"></i><i style="top:220px;background:linear-gradient(90deg,#00a7ff 38.5px,#0172ff 161.5px,#9b4cff 241.5px,#ff33fe 289.5px,#ff1fd3 313.5px,#ff0daa 345.5px,#ff0089 383.5px,#ff0068 442.5px,#ff004a 528.5px,#ff003e 583.5px)"></i><i style="top:222px;background:linear-gradient(90deg,#00a4ff 39.5px,#0270ff 162.5px,#9d49ff 243.5px,#ff30fe 291.5px,#ff1cd1 316.5px,#ff0aa9 349.5px,#ff008d 381.5px,#ff006b 439.5px,#ff004d 523.5px,#ff003f 582.5px)"></i><i style="top:224px;background:linear-gradient(90deg,#00a1ff 40.5px,#016eff 162.5px,#9c47ff 244.5px,#ff2eff 292.5px,#ff1bd2 317.5px,#ff09aa 350.5px,#ff008f 380.5px,#ff006d 437.5px,#ff004f 520.5px,#ff0040 580.5px)"></i><i style="top:226px;background:linear-gradient(90deg,#009eff 41.5px,#016cff 162.5px,#9a45ff 244.5px,#ff2cfe 294.5px,#ff19d2 319.5px,#ff08aa 352.5px,#ff0092 379.5px,#ff0070 435.5px,#ff0051 516.5px,#ff0042 578.5px)"></i><i style="top:228px;background:linear-gradient(90deg,#009cff 41.5px,#006aff 162.5px,#9a43ff 245.5px,#ff29fe 296.5px,#ff16d1 322.5px,#ff06a8 356.5px,#ff0094 379.5px,#ff0072 434.5px,#ff0053 514.5px,#ff0043 577.5px)"></i><i style="top:230px;background:linear-gradient(90deg,#0099ff 42.5px,#0267ff 163.5px,#9c41ff 247.5px,#ff27ff 297.5px,#ff15d2 323.5px,#ff05aa 357.5px,#ff0097 378.5px,#ff0074 433.5px,#ff0055 512.5px,#ff0044 575.5px)"></i><i style="top:232px;background:linear-gradient(90deg,#0097ff 43.5px,#0166ff 163.5px,#9b3eff 248.5px,#ff25fe 299.5px,#ff13d2 325.5px,#ff03aa 359.5px,#ff0095 383.5px,#ff0072 439.5px,#ff0053 520.5px,#ff0046 574.5px)"></i><i style="top:234px;background:linear-gradient(90deg,#0094ff 44.5px,#0164ff 163.5px,#9b3cff 249.5px,#ff22fe 301.5px,#ff11d2 327.5px,#ff01a9 362.5px,#ff0084 410.5px,#ff0063 477.5px,#ff0047 572.5px)"></i><i style="top:236px;background:linear-gradient(90deg,#0092ff 44.5px,#0262ff 164.5px,#9d3aff 251.5px,#ff21ff 302.5px,#ff10d2 329.5px,#ff00a9 364.5px,#ff0085 412.5px,#ff0063 480.5px,#ff0048 570.5px)"></i><i style="top:238px;background:linear-gradient(90deg,#008fff 45.5px,#0160ff 164.5px,#9c38ff 252.5px,#ff1ffe 304.5px,#ff0ed2 331.5px,#ff00a9 367.5px,#ff0084 416.5px,#ff0063 485.5px,#ff004a 569.5px)"></i><i style="top:240px;background:linear-gradient(90deg,#008dff 46.5px,#015eff 164.5px,#9c36ff 253.5px,#ff1cfe 306.5px,#ff0cd2 333.5px,#ff00ac 366.5px,#ff0087 414.5px,#ff0066 481.5px,#ff004b 567.5px)"></i><i style="top:242px;background:linear-gradient(90deg,#008bff 47.5px,#015cff 164.5px,#9a35ff 253.5px,#ff1bff 307.5px,#ff0bd3 334.5px,#ff00af 365.5px,#ff008a 412.5px,#ff0068 478.5px,#ff004c 566.5px)"></i><i style="top:244px;background:linear-gradient(90deg,#0088ff 48.5px,#025aff 165.5px,#9c33ff 255.5px,#ff19fe 309.5px,#ff09d1 337.5px,#ff00b2 364.5px,#ff008d 410.5px,#ff006b 475.5px,#ff004e 564.5px)"></i><i style="top:246px;background:linear-gradient(90deg,#0086ff 48.5px,#0159ff 165.5px,#9b31ff 256.5px,#ff17fe 311.5px,#ff07d1 339.5px,#ff00b6 362.5px,#ff0091 407.5px,#ff006e 470.5px,#ff0050 561.5px,#ff0050 562.5px)"></i><i style="top:248px;background:linear-gradient(90deg,#0084ff 49.5px,#0157ff 165.5px,#9b2fff 257.5px,#ff15ff 312.5px,#ff06d3 340.5px,#ff00ba 361.5px,#ff0093 406.5px,#ff0070 468.5px,#ff0052 558.5px,#ff0051 561.5px)"></i><i style="top:250px;background:linear-gradient(90deg,#0082ff 50.5px,#0255ff 166.5px,#9d2dff 259.5px,#ff13fe 314.5px,#ff04d1 343.5px,#ff00bb 362.5px,#ff0094 407.5px,#ff0071 469.5px,#ff0053 558.5px,#ff0052 559.5px)"></i><i style="top:252px;background:linear-gradient(90deg,#0080ff 51.5px,#0254ff 166.5px,#9c2bff 260.5px,#ff11fe 316.5px,#ff03d1 345.5px,#ff00b0 375.5px,#ff008b 424.5px,#ff0069 493.5px,#ff0054 558.5px)"></i><i style="top:254px;background:linear-gradient(90deg,#007dff 52.5px,#0152ff 166.5px,#9c2aff 261.5px,#ff10ff 317.5px,#ff02d2 346.5px,#ff00aa 384.5px,#ff0085 436.5px,#ff0064 509.5px,#ff0055 556.5px)"></i><i style="top:256px;background:linear-gradient(90deg,#007cff 52.5px,#0151ff 166.5px,#9a29ff 261.5px,#ff0efe 319.5px,#ff00d2 348.5px,#ff00a9 387.5px,#ff0084 440.5px,#ff0063 514.5px,#ff0057 554.5px)"></i><i style="top:258px;background:linear-gradient(90deg,#007aff 53.5px,#024fff 167.5px,#9c27ff 263.5px,#ff0cfe 321.5px,#ff00d1 351.5px,#ff00a9 390.5px,#ff0084 444.5px,#ff0063 520.5px,#ff0058 553.5px)"></i><i style="top:260px;background:linear-gradient(90deg,#0078ff 54.5px,#014dff 167.5px,#9b25ff 264.5px,#ff0afd 323.5px,#ff00d5 350.5px,#ff00ab 389.5px,#ff0086 442.5px,#ff0065 516.5px,#ff005a 551.5px)"></i><i style="top:262px;background:linear-gradient(90deg,#0075ff 55.5px,#014cff 167.5px,#9b23ff 265.5px,#ff09fe 324.5px,#ff00da 348.5px,#ff00b0 386.5px,#ff008b 437.5px,#ff0069 509.5px,#ff005c 549.5px)"></i><i style="top:264px;background:linear-gradient(90deg,#0073ff 56.5px,#014bff 167.5px,#9b22ff 266.5px,#ff07fe 326.5px,#ff00dd 347.5px,#ff00b4 384.5px,#ff008e 434.5px,#ff006c 504.5px,#ff005d 548.5px)"></i><i style="top:266px;background:linear-gradient(90deg,#0072ff 57.5px,#0249ff 168.5px,#9c20ff 268.5px,#ff05fd 328.5px,#ff00e1 346.5px,#ff00b7 383.5px,#ff0091 432.5px,#ff006e 501.5px,#ff005f 546.5px)"></i><i style="top:268px;background:linear-gradient(90deg,#0070ff 57.5px,#0148ff 168.5px,#9c1fff 269.5px,#ff04fe 329.5px,#ff00e2 347.5px,#ff00b8 384.5px,#ff0092 433.5px,#ff006f 502.5px,#ff0060 545.5px)"></i><i style="top:270px;background:linear-gradient(90deg,#006eff 58.5px,#0146ff 168.5px,#9c1dff 270.5px,#ff03fe 331.5px,#ff00d8 357.5px,#ff00ae 397.5px,#ff0089 451.5px,#ff0067 527.5px,#ff0062 543.5px)"></i><i style="top:272px;background:linear-gradient(90deg,#006cff 59.5px,#0245ff 169.5px,#9c1cff 271.5px,#ff01fd 333.5px,#ff00d0 365.5px,#ff00a8 407.5px,#ff0083 464.5px,#ff0064 541.5px)"></i><i style="top:274px;background:linear-gradient(90deg,#006aff 60.5px,#0243ff 169.5px,#9b1bff 272.5px,#ff00fe 334.5px,#ff00d1 366.5px,#ff00a9 408.5px,#ff0084 465.5px,#ff0065 540.5px)"></i><i style="top:276px;background:linear-gradient(90deg,#0069ff 61.5px,#0142ff 169.5px,#9b19ff 273.5px,#ff00fd 336.5px,#ff00d1 368.5px,#ff00a8 411.5px,#ff0084 469.5px,#ff0067 538.5px)"></i><i style="top:278px;background:linear-gradient(90deg,#0067ff 62.5px,#0141ff 169.5px,#9b18ff 274.5px,#fc00ff 335.5px,#ff00f8 341.5px,#ff00cc 375.5px,#ff00a3 420.5px,#ff007f 481.5px,#ff0068 537.5px)"></i><i style="top:280px;background:linear-gradient(90deg,#0065ff 63.5px,#023fff 170.5px,#9c16ff 276.5px,#f800ff 334.5px,#ff00fc 340.5px,#ff00d0 373.5px,#ff00a7 417.5px,#ff0082 477.5px,#ff006a 535.5px)"></i><i style="top:282px;background:linear-gradient(90deg,#0064ff 63.5px,#013eff 170.5px,#9c15ff 277.5px,#f200ff 332.5px,#ff00fd 341.5px,#ff00d1 374.5px,#ff00a8 418.5px,#ff0083 478.5px,#ff006c 533.5px)"></i><i style="top:284px;background:linear-gradient(90deg,#0062ff 64.5px,#013dff 170.5px,#9c14ff 278.5px,#ec00ff 330.5px,#ff00fd 343.5px,#ff00d1 376.5px,#ff00a8 420.5px,#ff0084 480.5px,#ff006e 532.5px)"></i><i style="top:286px;background:linear-gradient(90deg,#0060ff 65.5px,#023cff 171.5px,#9d12ff 280.5px,#e800ff 329.5px,#ff00fe 344.5px,#ff00d2 377.5px,#ff00a9 421.5px,#ff0085 481.5px,#ff006f 530.5px)"></i><i style="top:288px;background:linear-gradient(90deg,#005eff 66.5px,#023aff 171.5px,#9b11ff 280.5px,#e300ff 327.5px,#ff00fd 346.5px,#ff00d1 380.5px,#ff00a8 425.5px,#ff0083 486.5px,#ff0071 529.5px)"></i><i style="top:290px;background:linear-gradient(90deg,#005dff 67.5px,#0139ff 171.5px,#9b10ff 281.5px,#df00ff 326.5px,#ff00fd 348.5px,#ff00d1 382.5px,#ff00a8 427.5px,#ff0083 489.5px,#ff0073 527.5px)"></i><i style="top:292px;background:linear-gradient(90deg,#005bff 68.5px,#0138ff 171.5px,#9b0fff 282.5px,#da00ff 324.5px,#ff00fe 349.5px,#ff00d2 383.5px,#ff00a9 428.5px,#ff0085 489.5px,#ff0075 525.5px)"></i><i style="top:294px;background:linear-gradient(90deg,#005aff 69.5px,#0237ff 172.5px,#9c0dff 284.5px,#d600ff 323.5px,#ff00fd 351.5px,#ff00d1 386.5px,#ff00a8 432.5px,#ff0083 495.5px,#ff0077 524.5px)"></i><i style="top:296px;background:linear-gradient(90deg,#0058ff 70.5px,#0136ff 172.5px,#9c0cff 285.5px,#d200ff 322.5px,#ff00fd 353.5px,#ff00d1 388.5px,#ff00a8 434.5px,#ff0083 497.5px,#ff0079 522.5px)"></i><i style="top:298px;background:linear-gradient(90deg,#0057ff 71.5px,#0135ff 172.5px,#9c0bff 286.5px,#cd00ff 320.5px,#ff00fe 354.5px,#ff00d2 389.5px,#ff00a9 435.5px,#ff0084 498.5px,#ff007a 521.5px)"></i><i style="top:300px;background:linear-gradient(90deg,#0055ff 72.5px,#0134ff 172.5px,#9c0aff 287.5px,#ca00ff 319.5px,#ff00fd 356.5px,#ff00d2 391.5px,#ff00a9 438.5px,#ff0084 502.5px,#ff007c 519.5px)"></i><i style="top:302px;background:linear-gradient(90deg,#0053ff 73.5px,#0233ff 173.5px,#9d08ff 289.5px,#c500ff 317.5px,#ff00fd 358.5px,#ff00d0 394.5px,#ff00a7 442.5px,#ff0083 507.5px,#ff007e 517.5px)"></i><i style="top:304px;background:linear-gradient(90deg,#0052ff 73.5px,#0132ff 173.5px,#9b08ff 289.5px,#c100ff 316.5px,#ff00fe 359.5px,#ff00d1 395.5px,#ff00a8 443.5px,#ff0084 508.5px,#ff0080 516.5px)"></i><i style="top:306px;background:linear-gradient(90deg,#0051ff 74.5px,#0131ff 173.5px,#9b07ff 290.5px,#be00ff 315.5px,#ff00fd 361.5px,#ff00d1 397.5px,#ff00a9 445.5px,#ff0084 510.5px,#ff0082 514.5px)"></i><i style="top:308px;background:linear-gradient(90deg,#004fff 75.5px,#022fff 174.5px,#9c05ff 292.5px,#bb00ff 314.5px,#ff00fd 363.5px,#ff00d0 400.5px,#ff00a7 449.5px,#ff0084 513.5px)"></i><i style="top:310px;background:linear-gradient(90deg,#004eff 76.5px,#022eff 174.5px,#9c04ff 293.5px,#ba00ff 315.5px,#ff00fe 364.5px,#ff00d1 401.5px,#ff00a8 450.5px,#ff0086 511.5px)"></i><i style="top:312px;background:linear-gradient(90deg,#004dff 77.5px,#012dff 174.5px,#9c03ff 294.5px,#bb00ff 317.5px,#ff00fd 366.5px,#ff00d1 403.5px,#ff00a8 452.5px,#ff0088 509.5px)"></i><i style="top:314px;background:linear-gradient(90deg,#004bff 78.5px,#012dff 174.5px,#9c02ff 295.5px,#e600ff 349.5px,#ff00fd 368.5px,#ff00d1 405.5px,#ff00a9 454.5px,#ff008a 508.5px)"></i><i style="top:316px;background:linear-gradient(90deg,#004aff 79.5px,#022bff 175.5px,#9d01ff 297.5px,#ff00fe 369.5px,#ff00d1 407.5px,#ff00a8 457.5px,#ff008c 506.5px)"></i><i style="top:318px;background:linear-gradient(90deg,#0048ff 80.5px,#012aff 175.5px,#9d00ff 298.5px,#ff00fd 371.5px,#ff00d1 409.5px,#ff00a8 459.5px,#ff008e 505.5px)"></i><i style="top:320px;background:linear-gradient(90deg,#0047ff 81.5px,#012aff 175.5px,#9b00ff 298.5px,#ff00fd 373.5px,#ff00d1 411.5px,#ff00a8 462.5px,#ff0090 503.5px)"></i><i style="top:322px;background:linear-gradient(90deg,#0046ff 82.5px,#0228ff 176.5px,#9c00ff 300.5px,#ff00fe 374.5px,#ff00d2 412.5px,#ff00a9 463.5px,#ff0093 501.5px)"></i><i style="top:324px;background:linear-gradient(90deg,#0045ff 83.5px,#0228ff 176.5px,#9900ff 299.5px,#ff00fd 376.5px,#ff00d1 415.5px,#ff00a8 466.5px,#ff0094 500.5px)"></i><i style="top:326px;background:linear-gradient(90deg,#0043ff 84.5px,#0127ff 176.5px,#9500ff 297.5px,#ff00fd 378.5px,#ff00d1 417.5px,#ff00a8 469.5px,#ff0097 498.5px)"></i><i style="top:328px;background:linear-gradient(90deg,#0042ff 85.5px,#0126ff 176.5px,#9300ff 296.5px,#ff00fe 379.5px,#ff00d2 418.5px,#ff00a9 470.5px,#ff0099 497.5px)"></i><i style="top:330px;background:linear-gradient(90deg,#0041ff 86.5px,#0225ff 177.5px,#8f00ff 294.5px,#ff00fd 381.5px,#ff00d1 421.5px,#ff00a8 474.5px,#ff009b 495.5px)"></i><i style="top:332px;background:linear-gradient(90deg,#003fff 87.5px,#0224ff 177.5px,#8c00ff 293.5px,#ff00fd 383.5px,#ff00d0 423.5px,#ff00a8 476.5px,#ff009e 493.5px)"></i><i style="top:334px;background:linear-gradient(90deg,#003eff 88.5px,#0123ff 177.5px,#8800ff 291.5px,#ff00fe 384.5px,#ff00d1 424.5px,#ff00a9 477.5px,#ff00a0 492.5px)"></i><i style="top:336px;background:linear-gradient(90deg,#003dff 89.5px,#0222ff 178.5px,#8600ff 290.5px,#ff00fd 386.5px,#ff00d1 426.5px,#ff00a9 479.5px,#ff00a2 490.5px)"></i><i style="top:338px;background:linear-gradient(90deg,#003cff 90.5px,#0221ff 178.5px,#8200ff 288.5px,#ff00fd 388.5px,#ff00d0 429.5px,#ff00a8 483.5px,#ff00a4 489.5px)"></i><i style="top:340px;background:linear-gradient(90deg,#003bff 91.5px,#0121ff 178.5px,#7e00ff 286.5px,#ff00fe 389.5px,#ff00d1 430.5px,#ff00a9 484.5px,#ff00a7 487.5px)"></i><i style="top:342px;background:linear-gradient(90deg,#003aff 92.5px,#0120ff 178.5px,#7c00ff 285.5px,#ff00fd 391.5px,#ff00d1 432.5px,#ff00a9 485.5px)"></i><i style="top:344px;background:linear-gradient(90deg,#0038ff 93.5px,#021fff 179.5px,#7900ff 283.5px,#ff00fd 393.5px,#ff00d0 435.5px,#ff00ab 484.5px)"></i><i style="top:346px;background:linear-gradient(90deg,#0037ff 94.5px,#021eff 179.5px,#7600ff 282.5px,#ff00fe 394.5px,#ff00d1 436.5px,#ff00ae 482.5px)"></i><i style="top:348px;background:linear-gradient(90deg,#0036ff 95.5px,#011eff 179.5px,#7300ff 280.5px,#ff00fd 396.5px,#ff00d1 438.5px,#ff00b0 481.5px)"></i><i style="top:350px;background:linear-gradient(90deg,#0035ff 96.5px,#011dff 179.5px,#7100ff 279.5px,#ff00fd 398.5px,#ff00d1 440.5px,#ff00b3 479.5px)"></i><i style="top:352px;background:linear-gradient(90deg,#0034ff 97.5px,#021cff 180.5px,#6d00ff 277.5px,#ff00fe 399.5px,#ff00d2 441.5px,#ff00b6 477.5px)"></i><i style="top:354px;background:linear-gradient(90deg,#0033ff 98.5px,#011bff 180.5px,#6b00ff 276.5px,#ff00fd 401.5px,#ff00d1 444.5px,#ff00b8 476.5px)"></i><i style="top:356px;background:linear-gradient(90deg,#0032ff 99.5px,#011bff 180.5px,#6800ff 274.5px,#ff00fd 403.5px,#ff00d1 446.5px,#ff00bb 474.5px)"></i><i style="top:358px;background:linear-gradient(90deg,#0031ff 100.5px,#021aff 181.5px,#6500ff 272.5px,#ff00fe 404.5px,#ff00d2 447.5px,#ff00bd 473.5px)"></i><i style="top:360px;background:linear-gradient(90deg,#0030ff 101.5px,#0219ff 181.5px,#6300ff 271.5px,#ff00fd 406.5px,#ff00d1 450.5px,#ff00c0 471.5px)"></i><i style="top:362px;background:linear-gradient(90deg,#002fff 102.5px,#0118ff 181.5px,#5f00ff 269.5px,#fc00ff 404.5px,#ff00f7 413.5px,#ff00cb 459.5px,#ff00c3 469.5px)"></i><i style="top:364px;background:linear-gradient(90deg,#002eff 103.5px,#0118ff 181.5px,#5d00ff 268.5px,#fa00ff 404.5px,#ff00fd 410.5px,#ff00d1 454.5px,#ff00c5 468.5px)"></i><i style="top:366px;background:linear-gradient(90deg,#002dff 104.5px,#0217ff 182.5px,#5a00ff 266.5px,#f700ff 403.5px,#ff00fc 412.5px,#ff00d0 457.5px,#ff00c8 466.5px)"></i><i style="top:368px;background:linear-gradient(90deg,#002cff 105.5px,#0216ff 182.5px,#5800ff 265.5px,#f500ff 403.5px,#ff00fd 413.5px,#ff00d0 458.5px,#ff00cb 465.5px)"></i><i style="top:370px;background:linear-gradient(90deg,#002bff 106.5px,#0116ff 182.5px,#5500ff 263.5px,#f200ff 402.5px,#ff00fe 414.5px,#ff00d1 459.5px,#ff00ce 463.5px)"></i><i style="top:372px;background:linear-gradient(90deg,#002aff 107.5px,#0215ff 183.5px,#5400ff 262.5px,#f000ff 402.5px,#ff00fd 416.5px,#ff00d1 461.5px)"></i><i style="top:374px;background:linear-gradient(90deg,#0029ff 108.5px,#0214ff 183.5px,#5100ff 260.5px,#ed00ff 401.5px,#ff00fd 418.5px,#ff00d4 460.5px)"></i><i style="top:376px;background:linear-gradient(90deg,#0028ff 109.5px,#0114ff 183.5px,#4e00ff 258.5px,#ea00ff 400.5px,#ff00fe 419.5px,#ff00d7 458.5px)"></i><i style="top:378px;background:linear-gradient(90deg,#0027ff 110.5px,#0113ff 183.5px,#4c00ff 257.5px,#e800ff 400.5px,#ff00fd 421.5px,#ff00d9 457.5px)"></i><i style="top:380px;background:linear-gradient(90deg,#0026ff 111.5px,#0212ff 184.5px,#4900ff 255.5px,#e500ff 399.5px,#ff00fd 423.5px,#ff00dd 455.5px)"></i><i style="top:382px;background:linear-gradient(90deg,#0025ff 112.5px,#0212ff 184.5px,#4800ff 254.5px,#e400ff 399.5px,#ff00fe 424.5px,#ff00e0 453.5px)"></i><i style="top:384px;background:linear-gradient(90deg,#0024ff 113.5px,#0111ff 184.5px,#4500ff 252.5px,#e100ff 398.5px,#ff00fd 426.5px,#ff00e3 452.5px)"></i><i style="top:386px;background:linear-gradient(90deg,#0023ff 114.5px,#0210ff 185.5px,#4300ff 251.5px,#df00ff 398.5px,#ff00fd 428.5px,#ff00e6 450.5px)"></i><i style="top:388px;background:linear-gradient(90deg,#0022ff 115.5px,#0210ff 185.5px,#4000ff 249.5px,#dc00ff 397.5px,#ff00fe 429.5px,#ff00e9 449.5px)"></i><i style="top:390px;background:linear-gradient(90deg,#0021ff 116.5px,#020fff 185.5px,#3f00ff 248.5px,#db00ff 397.5px,#ff00fd 431.5px,#ff00ed 447.5px)"></i><i style="top:392px;background:linear-gradient(90deg,#0020ff 117.5px,#010fff 185.5px,#3c00ff 246.5px,#d800ff 396.5px,#ff00fd 433.5px,#ff00f0 445.5px)"></i><i style="top:394px;background:linear-gradient(90deg,#0020ff 118.5px,#020eff 186.5px,#3b00ff 245.5px,#d600ff 396.5px,#ff00fe 434.5px,#ff00f3 444.5px)"></i><i style="top:396px;background:linear-gradient(90deg,#001fff 119.5px,#020dff 186.5px,#3800ff 243.5px,#d400ff 395.5px,#ff00fd 436.5px,#ff00f7 442.5px)"></i><i style="top:398px;background:linear-gradient(90deg,#001eff 120.5px,#010dff 186.5px,#3700ff 242.5px,#d200ff 395.5px,#ff00fd 438.5px,#ff00fb 440.5px)"></i><i style="top:400px;background:linear-gradient(90deg,#001dff 122.5px,#020cff 187.5px,#3400ff 240.5px,#d000ff 394.5px,#ff00fe 439.5px)"></i><i style="top:402px;background:linear-gradient(90deg,#001cff 123.5px,#020bff 187.5px,#3300ff 239.5px,#ce00ff 394.5px,#fc00ff 437.5px)"></i><i style="top:404px;background:linear-gradient(90deg,#001bff 124.5px,#020bff 187.5px,#3000ff 237.5px,#cc00ff 393.5px,#f900ff 436.5px)"></i><i style="top:406px;background:linear-gradient(90deg,#001aff 125.5px,#010aff 187.5px,#2f00ff 236.5px,#ca00ff 393.5px,#f500ff 434.5px)"></i><i style="top:408px;background:linear-gradient(90deg,#001aff 126.5px,#020aff 188.5px,#2c00ff 234.5px,#c800ff 392.5px,#f200ff 432.5px)"></i><i style="top:410px;background:linear-gradient(90deg,#0019ff 127.5px,#0209ff 188.5px,#2b00ff 233.5px,#c600ff 392.5px,#ef00ff 431.5px)"></i><i style="top:412px;background:linear-gradient(90deg,#0018ff 128.5px,#0109ff 188.5px,#2a00ff 232.5px,#c500ff 392.5px,#eb00ff 429.5px)"></i><i style="top:414px;background:linear-gradient(90deg,#0017ff 129.5px,#0108ff 188.5px,#2700ff 230.5px,#c200ff 391.5px,#e900ff 428.5px)"></i><i style="top:416px;background:linear-gradient(90deg,#0016ff 130.5px,#0208ff 189.5px,#2600ff 229.5px,#c100ff 391.5px,#e500ff 426.5px)"></i><i style="top:418px;background:linear-gradient(90deg,#0015ff 132.5px,#0207ff 189.5px,#2500ff 228.5px,#c000ff 391.5px,#e100ff 424.5px)"></i><i style="top:420px;background:linear-gradient(90deg,#0015ff 133.5px,#0107ff 189.5px,#2300ff 227.5px,#be00ff 391.5px,#df00ff 423.5px)"></i><i style="top:422px;background:linear-gradient(90deg,#0014ff 134.5px,#0206ff 190.5px,#2100ff 225.5px,#bc00ff 390.5px,#db00ff 421.5px)"></i><i style="top:424px;background:linear-gradient(90deg,#0013ff 135.5px,#0206ff 190.5px,#2100ff 225.5px,#bc00ff 391.5px,#d900ff 420.5px)"></i><i style="top:426px;background:linear-gradient(90deg,#0012ff 136.5px,#0205ff 190.5px,#1f00ff 224.5px,#bb00ff 391.5px,#d500ff 418.5px)"></i><i style="top:428px;background:linear-gradient(90deg,#0012ff 137.5px,#0105ff 190.5px,#1e00ff 223.5px,#b900ff 391.5px,#d200ff 416.5px)"></i><i style="top:430px;background:linear-gradient(90deg,#0011ff 139.5px,#0204ff 191.5px,#1e00ff 224.5px,#ba00ff 393.5px,#cf00ff 415.5px)"></i><i style="top:432px;background:linear-gradient(90deg,#0010ff 140.5px,#0204ff 191.5px,#1e00ff 224.5px,#ba00ff 394.5px,#cc00ff 413.5px)"></i><i style="top:434px;background:linear-gradient(90deg,#000fff 141.5px,#0103ff 191.5px,#1f00ff 226.5px,#ba00ff 396.5px,#ca00ff 412.5px)"></i><i style="top:436px;background:linear-gradient(90deg,#000fff 142.5px,#0203ff 192.5px,#2b00ff 240.5px,#c700ff 410.5px)"></i><i style="top:438px;background:linear-gradient(90deg,#000eff 143.5px,#0202ff 192.5px,#5f00ff 300.5px,#c300ff 408.5px)"></i><i style="top:440px;background:linear-gradient(90deg,#000dff 144.5px,#0202ff 192.5px,#9c00ff 368.5px,#c100ff 407.5px)"></i><i style="top:442px;background:linear-gradient(90deg,#000cff 146.5px,#0101ff 192.5px,#9c00ff 369.5px,#be00ff 405.5px)"></i><i style="top:444px;background:linear-gradient(90deg,#000cff 147.5px,#0201ff 193.5px,#9c00ff 370.5px,#bc00ff 404.5px)"></i><i style="top:446px;background:linear-gradient(90deg,#000bff 148.5px,#0200ff 193.5px,#9c00ff 371.5px,#b900ff 402.5px)"></i><i style="top:448px;background:linear-gradient(90deg,#000aff 149.5px,#0200ff 193.5px,#9c00ff 372.5px,#b600ff 400.5px)"></i><i style="top:450px;background:linear-gradient(90deg,#0009ff 151.5px,#0200ff 194.5px,#9d00ff 374.5px,#b300ff 399.5px)"></i><i style="top:452px;background:linear-gradient(90deg,#0009ff 152.5px,#0200ff 194.5px,#9d00ff 375.5px,#b100ff 397.5px)"></i><i style="top:454px;background:linear-gradient(90deg,#0008ff 153.5px,#0200ff 194.5px,#9c00ff 376.5px,#ae00ff 396.5px)"></i><i style="top:456px;background:linear-gradient(90deg,#0007ff 154.5px,#0100ff 194.5px,#9c00ff 377.5px,#ac00ff 394.5px)"></i><i style="top:458px;background:linear-gradient(90deg,#0007ff 156.5px,#0200ff 195.5px,#9d00ff 379.5px,#a900ff 392.5px)"></i><i style="top:460px;background:linear-gradient(90deg,#0006ff 157.5px,#0200ff 195.5px,#9c00ff 379.5px,#a700ff 391.5px)"></i><i style="top:462px;background:linear-gradient(90deg,#0005ff 158.5px,#0200ff 195.5px,#9c00ff 380.5px,#a400ff 389.5px)"></i><i style="top:464px;background:linear-gradient(90deg,#0005ff 159.5px,#0100ff 195.5px,#9c00ff 381.5px,#a200ff 388.5px)"></i><i style="top:466px;background:linear-gradient(90deg,#0004ff 161.5px,#0200ff 196.5px,#9d00ff 383.5px,#9f00ff 386.5px)"></i><i style="top:468px;background:linear-gradient(90deg,#0003ff 162.5px,#0200ff 196.5px,#9c00ff 384.5px)"></i><i style="top:470px;background:linear-gradient(90deg,#0003ff 163.5px,#0100ff 196.5px,#9b00ff 383.5px)"></i><i style="top:472px;background:linear-gradient(90deg,#0002ff 165.5px,#0200ff 197.5px,#9800ff 381.5px)"></i><i style="top:474px;background:linear-gradient(90deg,#0001ff 166.5px,#0200ff 197.5px,#9600ff 380.5px)"></i><i style="top:476px;background:linear-gradient(90deg,#0001ff 167.5px,#0200ff 197.5px,#9300ff 378.5px)"></i><i style="top:478px;background:linear-gradient(90deg,#0000ff 169.5px,#0200ff 198.5px,#9100ff 376.5px)"></i><i style="top:480px;background:linear-gradient(90deg,#0000ff 170.5px,#0200ff 198.5px,#8f00ff 375.5px)"></i><i style="top:482px;background:linear-gradient(90deg,#0000ff 171.5px,#0200ff 198.5px,#8d00ff 373.5px)"></i><i style="top:484px;background:linear-gradient(90deg,#0000ff 173.5px,#0200ff 199.5px,#8b00ff 372.5px)"></i><i style="top:486px;background:linear-gradient(90deg,#0000ff 174.5px,#0200ff 199.5px,#8800ff 370.5px)"></i><i style="top:488px;background:linear-gradient(90deg,#0000ff 176.5px,#0200ff 199.5px,#8600ff 368.5px)"></i><i style="top:490px;background:linear-gradient(90deg,#0000ff 177.5px,#0200ff 200.5px,#8400ff 367.5px)"></i><i style="top:492px;background:linear-gradient(90deg,#0000ff 179.5px,#0200ff 200.5px,#8200ff 365.5px)"></i><i style="top:494px;background:linear-gradient(90deg,#0000ff 180.5px,#0200ff 200.5px,#8000ff 364.5px)"></i><i style="top:496px;background:linear-gradient(90deg,#0000ff 181.5px,#0200ff 200.5px,#7e00ff 362.5px)"></i><i style="top:498px;background:linear-gradient(90deg,#0000ff 183.5px,#0200ff 201.5px,#7b00ff 360.5px)"></i><i style="top:500px;background:linear-gradient(90deg,#0000ff 184.5px,#0200ff 201.5px,#7a00ff 359.5px)"></i><i style="top:502px;background:linear-gradient(90deg,#0000ff 186.5px,#0300ff 202.5px,#7800ff 357.5px)"></i><i style="top:504px;background:linear-gradient(90deg,#0000ff 187.5px,#0200ff 202.5px,#7600ff 356.5px)"></i><i style="top:506px;background:linear-gradient(90deg,#0000ff 189.5px,#0200ff 202.5px,#7400ff 354.5px)"></i><i style="top:508px;background:linear-gradient(90deg,#0000ff 191.5px,#0300ff 203.5px,#7100ff 352.5px)"></i><i style="top:510px;background:linear-gradient(90deg,#0000ff 192.5px,#0300ff 204.5px,#7000ff 351.5px)"></i><i style="top:512px;background:linear-gradient(90deg,#0000ff 194.5px,#0400ff 205.5px,#6e00ff 349.5px)"></i><i style="top:514px;background:linear-gradient(90deg,#0000ff 195.5px,#0400ff 206.5px,#6c00ff 348.5px)"></i><i style="top:516px;background:linear-gradient(90deg,#0000ff 197.5px,#1300ff 227.5px,#6a00ff 346.5px)"></i><i style="top:518px;background:linear-gradient(90deg,#0000ff 199.5px,#6800ff 344.5px)"></i><i style="top:520px;background:linear-gradient(90deg,#0000ff 200.5px,#6700ff 343.5px)"></i><i style="top:522px;background:linear-gradient(90deg,#0100ff 202.5px,#6400ff 341.5px)"></i><i style="top:524px;background:linear-gradient(90deg,#0200ff 204.5px,#6300ff 340.5px)"></i><i style="top:526px;background:linear-gradient(90deg,#0300ff 206.5px,#6100ff 338.5px)"></i><i style="top:528px;background:linear-gradient(90deg,#0400ff 207.5px,#5f00ff 336.5px)"></i><i style="top:530px;background:linear-gradient(90deg,#0500ff 209.5px,#5e00ff 335.5px)"></i><i style="top:532px;background:linear-gradient(90deg,#0600ff 211.5px,#5c00ff 333.5px)"></i><i style="top:534px;background:linear-gradient(90deg,#0700ff 213.5px,#5a00ff 332.5px)"></i><i style="top:536px;background:linear-gradient(90deg,#0800ff 215.5px,#5800ff 330.5px)"></i><i style="top:538px;background:linear-gradient(90deg,#0900ff 217.5px,#5600ff 328.5px)"></i><i style="top:540px;background:linear-gradient(90deg,#0a00ff 219.5px,#5500ff 327.5px)"></i><i style="top:542px;background:linear-gradient(90deg,#0c00ff 221.5px,#5300ff 325.5px)"></i><i style="top:544px;background:linear-gradient(90deg,#0c00ff 222.5px,#5100ff 323.5px)"></i><i style="top:546px;background:linear-gradient(90deg,#0d00ff 224.5px,#5000ff 322.5px)"></i><i style="top:548px;background:linear-gradient(90deg,#0e00ff 226.5px,#4e00ff 320.5px)"></i><i style="top:550px;background:linear-gradient(90deg,#0f00ff 228.5px,#4d00ff 319.5px)"></i><i style="top:552px;background:linear-gradient(90deg,#1000ff 230.5px,#4b00ff 317.5px)"></i><i style="top:554px;background:linear-gradient(90deg,#1100ff 232.5px,#4900ff 315.5px)"></i><i style="top:556px;background:linear-gradient(90deg,#1300ff 234.5px,#4800ff 314.5px)"></i><i style="top:558px;background:linear-gradient(90deg,#1400ff 236.5px,#4600ff 312.5px)"></i><i style="top:560px;background:linear-gradient(90deg,#1500ff 238.5px,#4500ff 311.5px)"></i><i style="top:562px;background:linear-gradient(90deg,#1600ff 240.5px,#4300ff 309.5px)"></i><i style="top:564px;background:linear-gradient(90deg,#1700ff 242.5px,#4200ff 307.5px)"></i><i style="top:566px;background:linear-gradient(90deg,#1800ff 244.5px,#4000ff 306.5px)"></i><i style="top:568px;background:linear-gradient(90deg,#1900ff 246.5px,#3f00ff 304.5px)"></i><i style="top:570px;background:linear-gradient(90deg,#1a00ff 248.5px,#3e00ff 303.5px)"></i><i style="top:572px;background:linear-gradient(90deg,#1b00ff 250.5px,#3c00ff 301.5px)"></i><i style="top:574px;background:linear-gradient(90deg,#1c00ff 252.5px,#3a00ff 299.5px)"></i><i style="top:576px;background:linear-gradient(90deg,#1d00ff 254.5px,#3900ff 298.5px)"></i><i style="top:578px;background:linear-gradient(90deg,#1e00ff 256.5px,#3700ff 296.5px)"></i><i style="top:580px;background:linear-gradient(90deg,#1f00ff 258.5px,#3600ff 295.5px)"></i><i style="top:582px;background:linear-gradient(90deg,#2000ff 260.5px,#3500ff 293.5px)"></i><i style="top:584px;background:linear-gradient(90deg,#2100ff 262.5px,#3300ff 291.5px)"></i><i style="top:586px;background:linear-gradient(90deg,#2200ff 264.5px,#3200ff 290.5px)"></i><i style="top:588px;background:linear-gradient(90deg,#2300ff 266.5px,#3100ff 288.5px)"></i><i style="top:590px;background:linear-gradient(90deg,#2400ff 268.5px,#3000ff 287.5px)"></i><i style="top:592px;background:linear-gradient(90deg,#2500ff 270.5px,#2e00ff 285.5px)"></i><i style="top:594px;background:linear-gradient(90deg,#2600ff 273.5px,#2c00ff 283.5px)"></i><i style="top:596px;background:linear-gradient(90deg,#2800ff 276.5px,#2b00ff 281.5px)"></i></div>
<svg width="1920" height="1170" viewBox="0 0 1920 1170">
<clipPath id="plotclip"><rect x="1250.1999999999998" y="144.79999999999998" width="657.4000000000001" height="612.2"/></clipPath>
<path d="M1531.2 740.5L1529.8 741.2L1528.3 741.1L1526.5 740.4L1525.0 739.4L1523.2 737.9L1521.8 736.6L1520.2 735.1L1518.4 733.3L1516.3 731.3L1515.1 730.2L1513.9 729.0L1512.6 727.7L1511.3 726.3L1509.9 724.8L1508.5 723.3L1506.9 721.7L1505.3 720.1L1503.7 718.4L1501.9 716.6L1500.0 714.7L1498.0 712.7L1496.0 710.6L1493.8 708.4L1491.4 706.1L1489.0 703.7L1486.5 701.2L1483.9 698.6L1481.2 695.9L1478.4 693.0L1475.5 690.1L1472.4 686.9L1469.3 683.6L1466.0 680.1L1462.5 676.4L1459.0 672.4L1455.3 668.3L1451.6 663.9L1447.7 659.3L1443.6 654.3L1439.4 648.9L1434.8 642.9L1430.0 636.3L1424.8 628.9L1419.3 620.9L1413.5 612.2L1407.6 602.9L1401.4 593.1L1395.1 582.8L1388.7 571.9L1382.1 560.4L1375.3 548.3L1368.4 535.6L1361.5 522.3L1354.4 508.7L1347.4 494.6L1340.4 480.3L1333.4 465.9L1326.5 451.2L1319.7 436.5L1313.1 421.6L1306.8 406.8L1300.8 392.1L1295.2 377.7L1290.0 363.5L1285.1 349.7L1280.5 336.3L1276.2 323.3L1272.3 310.7L1268.7 298.8L1265.5 287.5L1262.6 276.8L1260.1 266.7L1258.0 257.3L1256.1 248.5L1254.6 240.2L1253.4 232.5L1252.4 225.4L1251.7 218.8L1251.3 212.7L1251.1 207.0L1251.2 201.7L1251.4 196.8L1251.9 192.3L1252.6 188.1L1253.5 184.2L1254.7 180.6L1256.0 177.3L1257.5 174.3L1259.2 171.7L1261.0 169.3L1263.0 167.2L1265.2 165.3L1267.5 163.8L1269.9 162.4L1272.4 161.3L1274.9 160.3L1277.6 159.5L1280.4 158.9L1283.2 158.5L1286.1 158.1L1289.1 157.8L1292.1 157.5L1295.2 157.4L1298.3 157.3L1301.4 157.2L1304.5 157.2L1307.6 157.1L1310.7 157.2L1313.8 157.2L1316.9 157.3L1320.1 157.4L1323.3 157.5L1326.5 157.7L1329.8 157.9L1333.1 158.1L1336.5 158.3L1339.9 158.6L1343.3 158.9L1346.8 159.2L1350.4 159.5L1354.0 159.9L1357.7 160.2L1361.5 160.6L1365.3 161.0L1369.2 161.5L1373.1 161.9L1377.2 162.4L1381.3 162.9L1385.5 163.4L1389.8 164.0L1394.2 164.5L1398.6 165.1L1403.2 165.7L1407.9 166.3L1412.6 166.9L1417.4 167.6L1422.4 168.2L1427.4 168.9L1432.6 169.6L1437.8 170.3L1443.2 171.0L1448.7 171.8L1454.2 172.5L1459.9 173.3L1465.7 174.1L1471.7 174.9L1477.7 175.8L1483.8 176.6L1490.1 177.5L1496.5 178.4L1503.0 179.3L1509.6 180.2L1516.3 181.2L1523.2 182.1L1530.1 183.1L1537.2 184.1L1544.3 185.1L1551.6 186.1L1559.0 187.1L1566.4 188.2L1574.0 189.2L1581.6 190.3L1589.4 191.3L1597.2 192.4L1605.0 193.5L1613.0 194.6L1621.0 195.7L1629.0 196.9L1637.1 198.0L1645.1 199.1L1653.1 200.2L1661.0 201.3L1668.8 202.4L1676.5 203.5L1684.2 204.6L1691.9 205.7L1699.6 206.7L1707.3 207.8L1714.9 208.9L1722.4 209.9L1729.7 210.9L1736.9 211.9L1743.8 212.9L1750.7 213.8L1757.3 214.8L1763.9 215.7L1770.2 216.5L1776.5 217.4L1782.5 218.3L1788.4 219.1L1794.1 219.9L1799.6 220.6L1804.9 221.4L1810.1 222.1L1815.1 222.8L1819.9 223.5L1824.5 224.1L1829.0 224.7L1833.3 225.3L1837.4 225.9L1841.5 226.5L1845.3 227.0L1849.1 227.5L1852.7 228.0L1856.2 228.5L1859.6 229.0L1863.0 229.5L1866.2 229.9L1869.4 230.4L1872.4 230.8L1875.4 231.2L1878.2 231.6L1881.0 232.0L1883.7 232.4L1886.2 232.7L1888.7 233.1L1891.1 233.4L1893.4 233.7L1895.6 234.0L1897.6 234.3L1899.6 234.6L1901.5 234.9L1903.2 235.1L1904.8 235.3L1906.4 235.5L1909.3 235.9L1911.9 236.3L1914.3 236.6L1916.4 236.9L1918.3 237.2L1919.9 237.4L1921.8 237.7L1923.5 237.9L1925.0 238.1L1926.7 238.4L1928.4 238.6L1930.0 238.8L1931.5 239.1L1932.9 239.3Z M1743.7 222.5L1386.6 182.0L1441.9 595.9Z" fill="#000" fill-opacity=".4" fill-rule="evenodd" clip-path="url(#plotclip)"/>
<path d="M1249.6 144.2H1908.2V757.6" fill="none" stroke="#9c9c9c" stroke-width="1.3"/>
<line x1="1249.6" y1="143.6" x2="1249.6" y2="766.0" stroke="#a8a8a8" stroke-width="1.4" />
<line x1="1243.1" y1="757.6" x2="1909.0" y2="757.6" stroke="#b4b4b4" stroke-width="1.8" />
<rect x="1437.5" y="242.2" width="14.0" height="16.6" fill="none" stroke="#fff" stroke-width="1.6"/>
<rect x="1419.5" y="222.1" width="14.0" height="16.6" fill="none" stroke="#fff" stroke-width="1.6"/>
<rect x="1404.0" y="203.0" width="14.0" height="16.6" fill="none" stroke="#fff" stroke-width="1.6"/>
<rect x="1391.7" y="187.9" width="14.0" height="16.6" fill="none" stroke="#fff" stroke-width="1.6"/>
<rect x="1378.5" y="172.5" width="14.0" height="16.6" fill="none" stroke="#fff" stroke-width="1.6"/>
<rect x="1461.7" y="247.0" width="14.0" height="16.6" fill="none" stroke="#fff" stroke-width="1.6"/>
<rect x="1463.2" y="229.0" width="14.0" height="16.6" fill="none" stroke="#fff" stroke-width="1.6"/>
<rect x="1464.2" y="213.2" width="14.0" height="16.6" fill="none" stroke="#fff" stroke-width="1.6"/>
<rect x="1464.5" y="197.5" width="14.0" height="16.6" fill="none" stroke="#fff" stroke-width="1.6"/>
<rect x="1465.6" y="182.1" width="14.0" height="16.6" fill="none" stroke="#fff" stroke-width="1.6"/>
<rect x="1447.1" y="274.8" width="14.0" height="16.6" fill="none" stroke="#fff" stroke-width="1.6"/>
<rect x="1432.7" y="276.8" width="14.0" height="16.6" fill="none" stroke="#fff" stroke-width="1.6"/>
<rect x="1419.5" y="278.2" width="14.0" height="16.6" fill="none" stroke="#fff" stroke-width="1.6"/>
<rect x="1406.8" y="279.6" width="14.0" height="16.6" fill="none" stroke="#fff" stroke-width="1.6"/>
<rect x="1394.0" y="283.3" width="14.0" height="16.6" fill="none" stroke="#fff" stroke-width="1.6"/>
<rect x="1509.0" y="259.1" width="14.0" height="16.6" fill="none" stroke="#fff" stroke-width="1.6"/>
<rect x="1563.9" y="247.2" width="14.0" height="16.6" fill="none" stroke="#fff" stroke-width="1.6"/>
<rect x="1614.3" y="239.2" width="14.0" height="16.6" fill="none" stroke="#fff" stroke-width="1.6"/>
<rect x="1670.4" y="227.2" width="14.0" height="16.6" fill="none" stroke="#fff" stroke-width="1.6"/>
<rect x="1736.5" y="213.2" width="14.0" height="16.6" fill="none" stroke="#fff" stroke-width="1.6"/>
<rect x="1476.9" y="289.6" width="14.0" height="16.6" fill="none" stroke="#fff" stroke-width="1.6"/>
<rect x="1496.4" y="313.7" width="14.0" height="16.6" fill="none" stroke="#fff" stroke-width="1.6"/>
<rect x="1515.9" y="339.1" width="14.0" height="16.6" fill="none" stroke="#fff" stroke-width="1.6"/>
<rect x="1543.0" y="371.2" width="14.0" height="16.6" fill="none" stroke="#fff" stroke-width="1.6"/>
<rect x="1576.5" y="410.3" width="14.0" height="16.6" fill="none" stroke="#fff" stroke-width="1.6"/>
<rect x="1456.0" y="306.7" width="14.0" height="16.6" fill="none" stroke="#fff" stroke-width="1.6"/>
<rect x="1452.9" y="352.7" width="14.0" height="16.6" fill="none" stroke="#fff" stroke-width="1.6"/>
<rect x="1449.0" y="408.8" width="14.0" height="16.6" fill="none" stroke="#fff" stroke-width="1.6"/>
<rect x="1443.5" y="480.2" width="14.0" height="16.6" fill="none" stroke="#fff" stroke-width="1.6"/>
<rect x="1434.8" y="587.1" width="14.0" height="16.6" fill="none" stroke="#fff" stroke-width="1.6"/>
<rect x="1458.6" y="269.0" width="14.0" height="16.6" fill="none" stroke="#000" stroke-width="1.8"/>
<ellipse cx="1440.4" cy="247.1" rx="4.2" ry="5.2" fill="rgb(147,172,147)" stroke="#000" stroke-width="1.3"/>
<ellipse cx="1421.0" cy="225.0" rx="4.2" ry="5.2" fill="rgb(120,172,120)" stroke="#000" stroke-width="1.3"/>
<ellipse cx="1405.0" cy="207.9" rx="4.2" ry="5.2" fill="rgb(91,172,91)" stroke="#000" stroke-width="1.3"/>
<ellipse cx="1393.0" cy="193.1" rx="4.2" ry="5.2" fill="rgb(56,172,56)" stroke="#000" stroke-width="1.3"/>
<ellipse cx="1381.6" cy="179.1" rx="4.2" ry="5.2" fill="rgb(0,172,0)" stroke="#000" stroke-width="1.3"/>
<ellipse cx="1466.0" cy="251.9" rx="4.2" ry="5.2" fill="rgb(186,186,159)" stroke="#000" stroke-width="1.3"/>
<ellipse cx="1467.1" cy="234.1" rx="4.2" ry="5.2" fill="rgb(186,186,130)" stroke="#000" stroke-width="1.3"/>
<ellipse cx="1467.1" cy="216.8" rx="4.2" ry="5.2" fill="rgb(186,186,98)" stroke="#000" stroke-width="1.3"/>
<ellipse cx="1468.5" cy="203.1" rx="4.2" ry="5.2" fill="rgb(186,186,60)" stroke="#000" stroke-width="1.3"/>
<ellipse cx="1468.5" cy="189.4" rx="4.2" ry="5.2" fill="rgb(186,186,0)" stroke="#000" stroke-width="1.3"/>
<ellipse cx="1450.0" cy="277.9" rx="4.2" ry="5.2" fill="rgb(158,185,185)" stroke="#000" stroke-width="1.3"/>
<ellipse cx="1438.0" cy="280.6" rx="4.2" ry="5.2" fill="rgb(129,185,185)" stroke="#000" stroke-width="1.3"/>
<ellipse cx="1424.2" cy="284.7" rx="4.2" ry="5.2" fill="rgb(97,185,185)" stroke="#000" stroke-width="1.3"/>
<ellipse cx="1411.0" cy="285.8" rx="4.2" ry="5.2" fill="rgb(60,185,185)" stroke="#000" stroke-width="1.3"/>
<ellipse cx="1398.0" cy="289.9" rx="4.2" ry="5.2" fill="rgb(0,185,185)" stroke="#000" stroke-width="1.3"/>
<ellipse cx="1517.3" cy="264.1" rx="4.2" ry="5.2" fill="rgb(200,171,171)" stroke="#000" stroke-width="1.3"/>
<ellipse cx="1573.9" cy="252.3" rx="4.2" ry="5.2" fill="rgb(200,140,140)" stroke="#000" stroke-width="1.3"/>
<ellipse cx="1625.5" cy="242.1" rx="4.2" ry="5.2" fill="rgb(200,105,105)" stroke="#000" stroke-width="1.3"/>
<ellipse cx="1682.9" cy="230.0" rx="4.2" ry="5.2" fill="rgb(200,65,65)" stroke="#000" stroke-width="1.3"/>
<ellipse cx="1738.8" cy="218.1" rx="4.2" ry="5.2" fill="rgb(200,0,0)" stroke="#000" stroke-width="1.3"/>
<ellipse cx="1483.9" cy="296.6" rx="4.2" ry="5.2" fill="rgb(190,163,190)" stroke="#000" stroke-width="1.3"/>
<ellipse cx="1505.9" cy="322.0" rx="4.2" ry="5.2" fill="rgb(190,133,190)" stroke="#000" stroke-width="1.3"/>
<ellipse cx="1529.0" cy="347.0" rx="4.2" ry="5.2" fill="rgb(190,100,190)" stroke="#000" stroke-width="1.3"/>
<ellipse cx="1557.1" cy="380.1" rx="4.2" ry="5.2" fill="rgb(190,62,190)" stroke="#000" stroke-width="1.3"/>
<ellipse cx="1592.0" cy="419.0" rx="4.2" ry="5.2" fill="rgb(190,0,190)" stroke="#000" stroke-width="1.3"/>
<ellipse cx="1463.1" cy="315.2" rx="4.2" ry="5.2" fill="rgb(163,163,190)" stroke="#000" stroke-width="1.3"/>
<ellipse cx="1461.4" cy="363.9" rx="4.2" ry="5.2" fill="rgb(133,133,190)" stroke="#000" stroke-width="1.3"/>
<ellipse cx="1459.1" cy="423.9" rx="4.2" ry="5.2" fill="rgb(100,100,190)" stroke="#000" stroke-width="1.3"/>
<ellipse cx="1456.0" cy="501.8" rx="4.2" ry="5.2" fill="rgb(62,62,190)" stroke="#000" stroke-width="1.3"/>
<ellipse cx="1449.8" cy="611.1" rx="4.2" ry="5.2" fill="rgb(0,0,190)" stroke="#000" stroke-width="1.3"/>
<ellipse cx="1465.7" cy="273.9" rx="4.2" ry="5.2" fill="#fff" stroke="#000" stroke-width="1.3"/>
<rect x="1680.8" y="564.9" width="224.3" height="185.8" fill="#2c2c2c" />
</svg>
<div id="ins"><i style="top:0px;background:linear-gradient(90deg,#b0ff00 0.5px,#fffd00 177.5px,#ffea00 219.5px)"></i><i style="top:3px;background:linear-gradient(90deg,#b1ff00 0.5px,#fffd00 175.5px,#ffe900 219.5px)"></i><i style="top:6px;background:linear-gradient(90deg,#b2ff00 0.5px,#fffd00 173.5px,#ffe800 219.5px)"></i><i style="top:9px;background:linear-gradient(90deg,#b3ff00 0.5px,#fffd00 170.5px,#ffe700 219.5px)"></i><i style="top:12px;background:linear-gradient(90deg,#b4ff00 0.5px,#fffd00 168.5px,#ffe600 219.5px)"></i><i style="top:15px;background:linear-gradient(90deg,#b4ff00 0.5px,#fffd00 166.5px,#ffe500 219.5px)"></i><i style="top:18px;background:linear-gradient(90deg,#b5ff00 0.5px,#fffd00 164.5px,#ffe400 219.5px)"></i><i style="top:21px;background:linear-gradient(90deg,#b6ff01 0.5px,#fffd00 161.5px,#ffe300 219.5px)"></i><i style="top:24px;background:linear-gradient(90deg,#b7ff01 0.5px,#fffd00 159.5px,#ffe200 219.5px)"></i><i style="top:27px;background:linear-gradient(90deg,#b8ff01 0.5px,#fffd00 157.5px,#ffe200 219.5px)"></i><i style="top:30px;background:linear-gradient(90deg,#b9ff02 0.5px,#fffd00 155.5px,#ffe100 219.5px)"></i><i style="top:33px;background:linear-gradient(90deg,#b9ff02 0.5px,#fffd00 153.5px,#ffe000 219.5px)"></i><i style="top:36px;background:linear-gradient(90deg,#baff03 0.5px,#e7ff00 98.5px,#fffd00 151.5px,#ffdf00 219.5px)"></i><i style="top:39px;background:linear-gradient(90deg,#bbff03 0.5px,#e2ff00 85.5px,#fffd00 148.5px,#ffde00 219.5px)"></i><i style="top:42px;background:linear-gradient(90deg,#bcff04 0.5px,#e1ff00 81.5px,#fffd00 146.5px,#ffdd00 219.5px)"></i><i style="top:45px;background:linear-gradient(90deg,#bdff04 0.5px,#e2ff00 81.5px,#fffd00 144.5px,#ffdc00 219.5px)"></i><i style="top:48px;background:linear-gradient(90deg,#beff05 0.5px,#e4ff00 82.5px,#fffd00 142.5px,#ffdb00 219.5px)"></i><i style="top:51px;background:linear-gradient(90deg,#bfff05 0.5px,#e6ff00 84.5px,#fffd00 139.5px,#ffda00 219.5px)"></i><i style="top:54px;background:linear-gradient(90deg,#c0ff06 0.5px,#e8ff00 87.5px,#fffd00 137.5px,#ffd900 219.5px)"></i><i style="top:57px;background:linear-gradient(90deg,#c0ff06 0.5px,#ebff00 90.5px,#fffd00 135.5px,#ffd800 219.5px)"></i><i style="top:60px;background:linear-gradient(90deg,#c1ff07 0.5px,#eeff00 94.5px,#fffd00 133.5px,#ffd700 219.5px)"></i><i style="top:63px;background:linear-gradient(90deg,#c2ff07 0.5px,#f0ff00 97.5px,#fffd00 131.5px,#ffd600 219.5px)"></i><i style="top:66px;background:linear-gradient(90deg,#c3ff08 0.5px,#f3ff00 101.5px,#fffd00 129.5px,#ffd500 219.5px)"></i><i style="top:69px;background:linear-gradient(90deg,#c4ff08 0.5px,#f6ff00 105.5px,#fffd00 127.5px,#ffd400 219.5px)"></i><i style="top:72px;background:linear-gradient(90deg,#c5ff09 0.5px,#f9ff00 109.5px,#fffc00 126.5px,#ffd300 219.5px)"></i><i style="top:75px;background:linear-gradient(90deg,#c6ff09 0.5px,#fdff00 114.5px,#ffd300 219.5px)"></i><i style="top:78px;background:linear-gradient(90deg,#c7ff0a 0.5px,#fffe00 118.5px,#ffd200 219.5px)"></i><i style="top:81px;background:linear-gradient(90deg,#c8ff0a 0.5px,#fffd00 117.5px,#ffd100 219.5px)"></i><i style="top:84px;background:linear-gradient(90deg,#c9ff0b 0.5px,#fffd00 115.5px,#ffd000 219.5px)"></i><i style="top:87px;background:linear-gradient(90deg,#caff0b 0.5px,#fffd00 113.5px,#ffcf00 219.5px)"></i><i style="top:90px;background:linear-gradient(90deg,#cbff0c 0.5px,#fffd00 110.5px,#ffce00 219.5px)"></i><i style="top:93px;background:linear-gradient(90deg,#ccff0c 0.5px,#fffd01 108.5px,#ffcd00 219.5px)"></i><i style="top:96px;background:linear-gradient(90deg,#ccff0d 0.5px,#fffd02 106.5px,#ffcd00 218.5px,#ffcc00 219.5px)"></i><i style="top:99px;background:linear-gradient(90deg,#cdff0d 0.5px,#fffd02 104.5px,#ffcc00 216.5px,#ffcb00 219.5px)"></i><i style="top:102px;background:linear-gradient(90deg,#ceff0e 0.5px,#fffd03 101.5px,#ffd900 181.5px,#ffca00 219.5px)"></i><i style="top:105px;background:linear-gradient(90deg,#cfff0e 0.5px,#fffd04 99.5px,#ffdc00 172.5px,#ffca00 219.5px)"></i><i style="top:108px;background:linear-gradient(90deg,#d0ff0f 0.5px,#fffd05 97.5px,#ffdb00 172.5px,#ffc900 219.5px)"></i><i style="top:111px;background:linear-gradient(90deg,#d1ff0f 0.5px,#fffd05 95.5px,#ffd900 173.5px,#ffc800 219.5px)"></i><i style="top:114px;background:linear-gradient(90deg,#d2ff10 0.5px,#fffd06 93.5px,#ffd700 176.5px,#ffc700 219.5px)"></i><i style="top:117px;background:linear-gradient(90deg,#d3ff10 0.5px,#fffd07 90.5px,#ffd500 179.5px,#ffc600 219.5px)"></i><i style="top:120px;background:linear-gradient(90deg,#d4ff11 0.5px,#fffd08 88.5px,#ffd300 182.5px,#ffc500 219.5px)"></i><i style="top:123px;background:linear-gradient(90deg,#d5ff11 0.5px,#fffd08 86.5px,#ffd000 186.5px,#ffc400 219.5px)"></i><i style="top:126px;background:linear-gradient(90deg,#d6ff12 0.5px,#fffd09 84.5px,#ffce00 190.5px,#ffc300 219.5px)"></i><i style="top:129px;background:linear-gradient(90deg,#d7ff12 0.5px,#fffd0a 81.5px,#ffcd00 191.5px,#ffc300 219.5px)"></i><i style="top:132px;background:linear-gradient(90deg,#d8ff13 0.5px,#fffd0b 79.5px,#ffcd00 189.5px,#ffc200 219.5px)"></i><i style="top:135px;background:linear-gradient(90deg,#d9ff14 0.5px,#fffd0c 77.5px,#ffcd00 186.5px,#ffc100 219.5px)"></i><i style="top:138px;background:linear-gradient(90deg,#daff14 0.5px,#fffd0c 75.5px,#ffcd00 184.5px,#ffc000 219.5px)"></i><i style="top:141px;background:linear-gradient(90deg,#dbff15 0.5px,#fffd0d 73.5px,#ffcc01 182.5px,#ffbf00 219.5px)"></i><i style="top:144px;background:linear-gradient(90deg,#ddff15 0.5px,#fffd0e 70.5px,#ffcd02 179.5px,#ffbe00 219.5px)"></i><i style="top:147px;background:linear-gradient(90deg,#deff16 0.5px,#fffd0f 68.5px,#ffcc02 177.5px,#ffbd00 219.5px)"></i><i style="top:150px;background:linear-gradient(90deg,#dfff16 0.5px,#fffd0f 66.5px,#ffcd03 174.5px,#ffbd00 219.5px)"></i><i style="top:153px;background:linear-gradient(90deg,#e0ff17 0.5px,#fffd10 64.5px,#ffcc04 172.5px,#ffbc00 219.5px)"></i><i style="top:156px;background:linear-gradient(90deg,#e1ff18 0.5px,#fffd11 61.5px,#ffcd04 169.5px,#ffbb00 219.5px)"></i><i style="top:159px;background:linear-gradient(90deg,#e2ff18 0.5px,#fffd12 59.5px,#ffcd05 167.5px,#ffba00 219.5px)"></i><i style="top:162px;background:linear-gradient(90deg,#e3ff19 0.5px,#fffd13 57.5px,#ffcd06 164.5px,#ffb900 219.5px)"></i><i style="top:165px;background:linear-gradient(90deg,#e4ff19 0.5px,#fffd13 55.5px,#ffcd06 162.5px,#ffb801 219.5px)"></i><i style="top:168px;background:linear-gradient(90deg,#e5ff1a 0.5px,#fffd14 53.5px,#ffcc07 160.5px,#ffb701 219.5px)"></i><i style="top:171px;background:linear-gradient(90deg,#e6ff1a 0.5px,#fffd15 50.5px,#ffcd08 157.5px,#ffb702 219.5px)"></i><i style="top:174px;background:linear-gradient(90deg,#e7ff1b 0.5px,#fffd16 48.5px,#ffcc08 155.5px,#ffb602 219.5px)"></i><i style="top:177px;background:linear-gradient(90deg,#e8ff1c 0.5px,#fffd17 46.5px,#ffcd09 152.5px,#ffb502 219.5px)"></i></div>
<svg width="1920" height="1170" viewBox="0 0 1920 1170"><defs></defs>
<path d="M1684 569H1902V729.1L1684 587.5Z" fill="#000" fill-opacity=".4"/>
<rect x="1683.6" y="568.3" width="218.2" height="179.3" fill="none" stroke="#9a9a9a" stroke-width="1.5"/>
<rect x="1785.6" y="648.8" width="14.4" height="16.4" fill="none" stroke="#fff" stroke-width="1.6"/>
<ellipse cx="1775.2" cy="628.2" rx="4.4" ry="5.3" fill="#c8b800" stroke="#000" stroke-width="1.3"/>
<path d="M1587.5 1126.7L1547.5 1132.5M1587.5 1126.7L1585.8 1098.8L1537.9 1090.4V1136.7L1569.2 1152.9L1624.2 1135L1592.5 1129.6" fill="none" stroke="#d0d0d0" stroke-opacity=".55" stroke-width="6.6" stroke-linejoin="miter"/>
<path d="M1587.5 1126.7L1547.5 1132.5M1587.5 1126.7L1585.8 1098.8L1537.9 1090.4V1136.7L1569.2 1152.9L1624.2 1135L1592.5 1129.6" fill="none" stroke="#80242a" stroke-opacity=".82" stroke-width="4.4" stroke-linejoin="miter"/>
<path d="M1548.8 1104.6L1556.7 1101.7L1566.3 1112.9L1590.8 1086.3L1593.8 1088.3L1570.8 1121.7L1563.8 1125.8Z" fill="#454545" fill-opacity=".92" stroke="#d4d4d4" stroke-opacity=".75" stroke-width="1.2"/>
<text x="1597.4" y="1124.4" font-size="32.6" font-weight="bold" textLength="191.8" lengthAdjust="spacingAndGlyphs" fill="#8c2a30" fill-opacity=".8" stroke="#dcdcdc" stroke-opacity=".6" stroke-width="2.6" paint-order="stroke">NOTEBOOK</text>
<text x="1789.4" y="1124.4" font-size="32.6" textLength="119.6" lengthAdjust="spacingAndGlyphs" fill="#2c2c2c" fill-opacity=".9" stroke="#dcdcdc" stroke-opacity=".55" stroke-width="2.6" paint-order="stroke">CHECK</text>
</svg>
</div></body></html>
